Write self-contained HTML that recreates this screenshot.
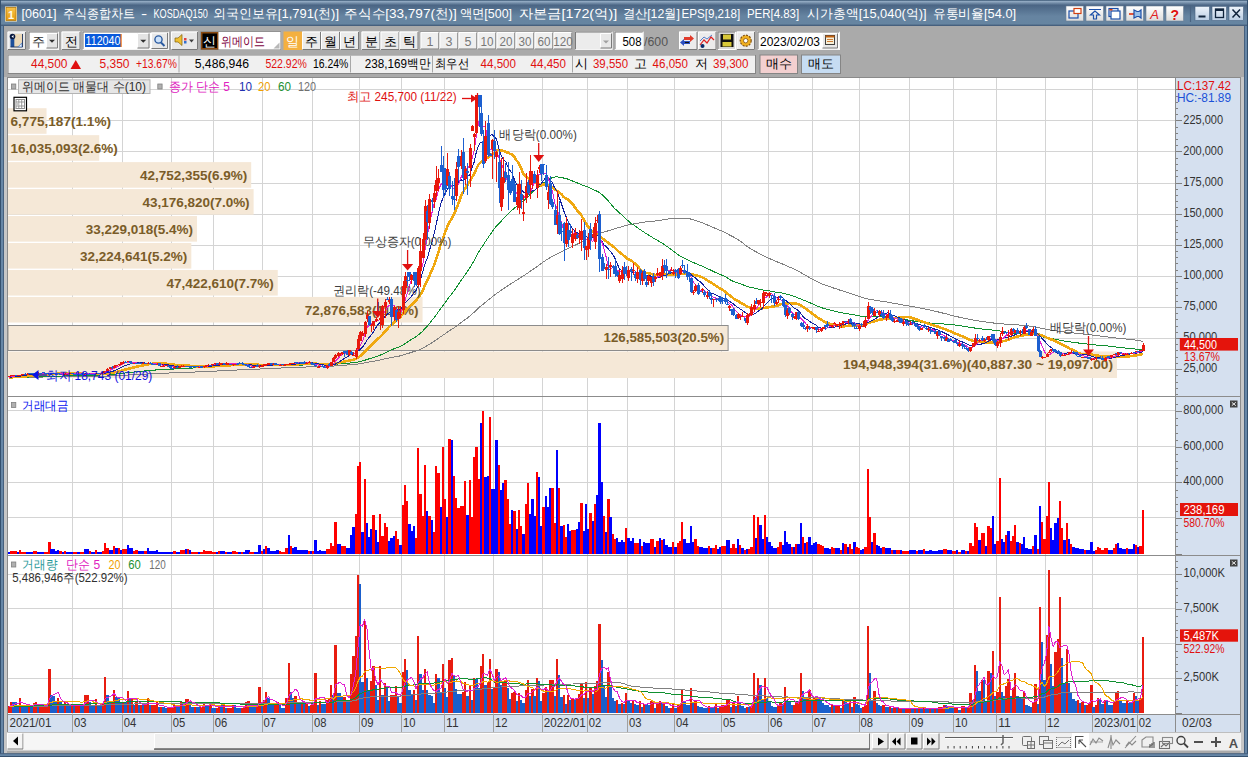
<!DOCTYPE html><html><head><meta charset="utf-8"><style>html,body{margin:0;padding:0;background:#aaaaaa;overflow:hidden}svg{display:block}text{font-family:"Liberation Sans", sans-serif;white-space:pre}</style></head><body>
<svg width="1248" height="757" viewBox="0 0 1248 757">
<defs>
<linearGradient id="tb" x1="0" y1="0" x2="0" y2="1"><stop offset="0" stop-color="#2c4a68"/><stop offset="0.05" stop-color="#94acc4"/><stop offset="0.2" stop-color="#4a6584"/><stop offset="0.62" stop-color="#6684a1"/><stop offset="0.93" stop-color="#6685a1"/><stop offset="0.96" stop-color="#46607e"/><stop offset="1" stop-color="#46607e"/></linearGradient>
<linearGradient id="btnw" x1="0" y1="0" x2="0" y2="1"><stop offset="0" stop-color="#ffffff"/><stop offset="1" stop-color="#dcdcdc"/></linearGradient>
<linearGradient id="btnb" x1="0" y1="0" x2="0" y2="1"><stop offset="0" stop-color="#eef4fb"/><stop offset="1" stop-color="#b9cde3"/></linearGradient>
<linearGradient id="ico" x1="0" y1="0" x2="0" y2="1"><stop offset="0" stop-color="#f7c24a"/><stop offset="1" stop-color="#e39a10"/></linearGradient>
</defs>
<rect x="0" y="0" width="1248" height="757" fill="#aaaaaa"/>
<rect x="0" y="0" width="1248" height="26" fill="url(#tb)"/>
<rect x="0" y="26" width="4" height="731" fill="#46607e"/>
<rect x="1" y="26" width="2" height="731" fill="#6686a6"/>
<rect x="0" y="26" width="1" height="731" fill="#34506e"/>
<rect x="1244" y="26" width="4" height="731" fill="#46607e"/>
<rect x="1245" y="26" width="2" height="731" fill="#6686a6"/>
<rect x="1247" y="26" width="1" height="731" fill="#34506e"/>
<rect x="0" y="753.2" width="1248" height="3.8" fill="#46607e"/>
<rect x="0" y="754.2" width="1248" height="1.8" fill="#6686a6"/>
<rect x="0" y="756" width="1248" height="1" fill="#34506e"/>
<rect x="4" y="77" width="3" height="676" fill="#c6c6c6"/>
<rect x="1240.5" y="77" width="3.5" height="676" fill="#c6c6c6"/>
<rect x="0" y="0" width="1" height="26" fill="#34506e"/>
<rect x="1247" y="0" width="1" height="26" fill="#34506e"/>
<rect x="5" y="6.5" width="12" height="15" fill="#fff3d0"/>
<rect x="6" y="7.5" width="10" height="13" fill="url(#ico)" stroke="#b07810" stroke-width="0.8"/>
<text x="11" y="18.5" font-size="11" fill="#fffbe8" text-anchor="middle" font-weight="bold">1</text>
<text x="21.5" y="18" font-size="13" fill="#ffffff" text-anchor="start" font-weight="normal" textLength="35" lengthAdjust="spacingAndGlyphs">[0601]</text>
<text x="63" y="18" font-size="13" fill="#ffffff" text-anchor="start" font-weight="normal" textLength="72.1" lengthAdjust="spacingAndGlyphs">주식종합차트</text>
<text x="141.1" y="18" font-size="13" fill="#ffffff" text-anchor="start" font-weight="normal" textLength="6.2" lengthAdjust="spacingAndGlyphs">-</text>
<text x="153.5" y="18" font-size="13" fill="#ffffff" text-anchor="start" font-weight="normal" textLength="54.3" lengthAdjust="spacingAndGlyphs">KOSDAQ150</text>
<text x="213.2" y="18" font-size="13" fill="#ffffff" text-anchor="start" font-weight="normal" textLength="125.8" lengthAdjust="spacingAndGlyphs">외국인보유[1,791(천)]</text>
<text x="344.4" y="18" font-size="13" fill="#ffffff" text-anchor="start" font-weight="normal" textLength="112.5" lengthAdjust="spacingAndGlyphs">주식수[33,797(천)]</text>
<text x="459.5" y="18" font-size="13" fill="#ffffff" text-anchor="start" font-weight="normal" textLength="52.5" lengthAdjust="spacingAndGlyphs">액면[500]</text>
<text x="518.5" y="18" font-size="13" fill="#ffffff" text-anchor="start" font-weight="normal" textLength="98.7" lengthAdjust="spacingAndGlyphs">자본금[172(억)]</text>
<text x="622.5" y="18" font-size="13" fill="#ffffff" text-anchor="start" font-weight="normal" textLength="57.5" lengthAdjust="spacingAndGlyphs">결산[12월]</text>
<text x="681.5" y="18" font-size="13" fill="#ffffff" text-anchor="start" font-weight="normal" textLength="58.7" lengthAdjust="spacingAndGlyphs">EPS[9,218]</text>
<text x="746.9" y="18" font-size="13" fill="#ffffff" text-anchor="start" font-weight="normal" textLength="52.3" lengthAdjust="spacingAndGlyphs">PER[4.83]</text>
<text x="807.4" y="18" font-size="13" fill="#ffffff" text-anchor="start" font-weight="normal" textLength="119.1" lengthAdjust="spacingAndGlyphs">시가총액[15,040(억)]</text>
<text x="932.8" y="18" font-size="13" fill="#ffffff" text-anchor="start" font-weight="normal" textLength="83.3" lengthAdjust="spacingAndGlyphs">유통비율[54.0]</text>
<rect x="1066" y="6" width="17.5" height="15" fill="url(#btnw)" stroke="#6c7f95" stroke-width="0.6"/>
<rect x="1086" y="6" width="17.5" height="15" fill="url(#btnw)" stroke="#6c7f95" stroke-width="0.6"/>
<rect x="1106" y="6" width="17.5" height="15" fill="url(#btnw)" stroke="#6c7f95" stroke-width="0.6"/>
<rect x="1126" y="6" width="17.5" height="15" fill="url(#btnw)" stroke="#6c7f95" stroke-width="0.6"/>
<rect x="1146" y="6" width="17.5" height="15" fill="url(#btnw)" stroke="#6c7f95" stroke-width="0.6"/>
<rect x="1166" y="6" width="17.5" height="15" fill="url(#btnw)" stroke="#6c7f95" stroke-width="0.6"/>
<g stroke-width="1.2" fill="none">
<rect x="1069" y="11" width="9" height="7" stroke="#1b4fa8"/><rect x="1074" y="8.5" width="7" height="5" fill="#fff" stroke="#d24010"/>
<path d="M1089 9.5h12M1095 11l-4.5 4h3v4h3v-4h3z" stroke="#1b4fa8"/>
<rect x="1109" y="8.5" width="9" height="8" stroke="#1b4fa8" fill="#e8f0fa"/><rect x="1111" y="11" width="9" height="8" stroke="#1b4fa8" fill="#fff"/><rect x="1109.5" y="9" width="3" height="1.5" fill="#e04010" stroke="none"/>
<path d="M1129 14h5" stroke="#e03010" stroke-width="1.6"/><path d="M1134 10v8l3-1.5h2l2 1.5v-8l-2 1.5h-2z" stroke="#1b4fa8" fill="#9ac0e8"/>
</g>
<text x="1154.5" y="19" font-size="13" fill="#e02020" text-anchor="middle" font-weight="normal" font-style="italic" font-family="Liberation Serif, serif">A</text>
<text x="1174.7" y="19.5" font-size="14" fill="#e01010" text-anchor="middle" font-weight="bold">?</text>
<line x1="1190.5" y1="5" x2="1190.5" y2="22" stroke="#4a6482" stroke-width="1.2"/>
<rect x="1195" y="6.3" width="14.5" height="14.3" fill="url(#btnb)" stroke="#47617f" stroke-width="0.6"/>
<rect x="1212" y="6.3" width="14.5" height="14.3" fill="url(#btnb)" stroke="#47617f" stroke-width="0.6"/>
<rect x="1229" y="6.3" width="14.5" height="14.3" fill="url(#btnb)" stroke="#47617f" stroke-width="0.6"/>
<rect x="1198.5" y="15.5" width="7" height="2" fill="#10243c"/>
<rect x="1215.5" y="9" width="8" height="8.5" fill="none" stroke="#10243c" stroke-width="1.3"/><rect x="1215.5" y="9" width="8" height="2" fill="#10243c"/>
<path d="M1232.5 9.5l7.5 8M1240 9.5l-7.5 8" stroke="#10243c" stroke-width="1.5"/>
<rect x="7.5" y="31.5" width="18.5" height="18.5" fill="#e8e8e8"/>
<path d="M8 49.5V32H25.5" fill="none" stroke="#ffffff" stroke-width="1"/>
<path d="M25.5 32V49.5H8" fill="none" stroke="#7a7a7a" stroke-width="1"/>
<rect x="14" y="34" width="8.5" height="13" fill="#ecd9b8"/><rect x="10.5" y="35" width="3.8" height="12" fill="#1d4f9a"/><path d="M22.5 34v13h-12" fill="none" stroke="#1a2f5a" stroke-width="0.9"/><circle cx="12.5" cy="36.5" r="2.8" fill="#0a1a40"/><path d="M13.5 35v3l-2-1.5z" fill="#fff"/><path d="M22 42.5v4.5h-4.5z" fill="#5a8ad0"/><path d="M21.5 44v2.5h-2.5z" fill="#fff"/>
<rect x="28.5" y="31.5" width="30.5" height="18.5" fill="#ffffff"/>
<path d="M29 49.5V32H58.5" fill="none" stroke="#7a7a7a" stroke-width="1"/>
<path d="M58.5 32V49.5H29" fill="none" stroke="#f4f4f4" stroke-width="1"/>
<text x="32" y="45.5" font-size="13" fill="#333" text-anchor="start" font-weight="normal">주</text>
<rect x="46" y="33" width="12" height="15.5" fill="#e4e4e4"/>
<path d="M46.5 48V33.5H57.5" fill="none" stroke="#ffffff" stroke-width="1"/>
<path d="M57.5 33.5V48H46.5" fill="none" stroke="#7a7a7a" stroke-width="1"/>
<path d="M49 39.75h6l-3 3z" fill="#303030"/>
<rect x="61.5" y="31.5" width="19" height="18.5" fill="#e8e8e8"/>
<path d="M62 49.5V32H80" fill="none" stroke="#ffffff" stroke-width="1"/>
<path d="M80 32V49.5H62" fill="none" stroke="#7a7a7a" stroke-width="1"/>
<text x="71" y="45.5" font-size="13" fill="#000" text-anchor="middle" font-weight="normal">전</text>
<rect x="82.5" y="31.5" width="86.5" height="18.5" fill="#ffffff"/>
<path d="M83 49.5V32H168.5" fill="none" stroke="#7a7a7a" stroke-width="1"/>
<path d="M168.5 32V49.5H83" fill="none" stroke="#f4f4f4" stroke-width="1"/>
<rect x="85" y="34" width="36" height="13" fill="#0a5adc"/>
<text x="85.5" y="45" font-size="12.5" fill="#ffffff" text-anchor="start" font-weight="normal" textLength="35" lengthAdjust="spacingAndGlyphs">112040</text>
<rect x="120.5" y="34" width="1.2" height="13" fill="#f07010"/>
<rect x="137" y="33" width="12.5" height="15.5" fill="#e4e4e4"/>
<path d="M137.5 48V33.5H149" fill="none" stroke="#ffffff" stroke-width="1"/>
<path d="M149 33.5V48H137.5" fill="none" stroke="#7a7a7a" stroke-width="1"/>
<path d="M140.25 39.75h6l-3 3z" fill="#303030"/>
<rect x="151" y="32.5" width="17" height="16.5" fill="#e8e8e8"/>
<path d="M151.5 48.5V33H167.5" fill="none" stroke="#ffffff" stroke-width="1"/>
<path d="M167.5 33V48.5H151.5" fill="none" stroke="#7a7a7a" stroke-width="1"/>
<circle cx="158.5" cy="39.5" r="3.6" fill="#cde2fa" stroke="#2a5aa0" stroke-width="1.4"/><path d="M161 42.5l3.5 3.5" stroke="#2a5aa0" stroke-width="2"/>
<rect x="171" y="31.5" width="27" height="18.5" fill="#e8e8e8"/>
<path d="M171.5 49.5V32H197.5" fill="none" stroke="#ffffff" stroke-width="1"/>
<path d="M197.5 32V49.5H171.5" fill="none" stroke="#7a7a7a" stroke-width="1"/>
<path d="M175 38h3l4-3.5v11l-4-3.5h-3z" fill="#f0c030" stroke="#806010" stroke-width="0.7"/><rect x="184" y="38" width="2.5" height="2.5" fill="#e04040"/><rect x="184" y="41" width="2.5" height="2.5" fill="#3070d0"/><path d="M189 39.5h5l-2.5 3z" fill="#404040"/>
<rect x="200.5" y="31.5" width="80.5" height="18.5" fill="#7a7a7a"/>
<rect x="201" y="32" width="17.5" height="17.5" fill="#8a4a10"/>
<rect x="202.5" y="33.5" width="14.5" height="14.5" fill="#000000"/>
<text x="209.7" y="45.5" font-size="13" fill="#ffffff" text-anchor="middle" font-weight="normal">신</text>
<rect x="218.5" y="32" width="62" height="17.5" fill="#ffffff"/>
<text x="221" y="45.5" font-size="13" fill="#800040" text-anchor="start" font-weight="normal" textLength="44" lengthAdjust="spacingAndGlyphs">위메이드</text>
<path d="M279.5 48.5h-6l6-6z" fill="#b8b8b8"/>
<rect x="283.5" y="31.5" width="18.5" height="18.5" fill="#f4b040"/>
<text x="292.7" y="45.5" font-size="13" fill="#ffffff" text-anchor="middle" font-weight="normal">일</text>
<rect x="302" y="31.5" width="19" height="18.5" fill="#ebebeb"/>
<path d="M302.5 49.5V32H320.5" fill="none" stroke="#ffffff" stroke-width="1"/>
<path d="M320.5 32V49.5H302.5" fill="none" stroke="#7a7a7a" stroke-width="1"/>
<text x="311.5" y="45.5" font-size="13" fill="#000" text-anchor="middle" font-weight="normal">주</text>
<rect x="321" y="31.5" width="19" height="18.5" fill="#ebebeb"/>
<path d="M321.5 49.5V32H339.5" fill="none" stroke="#ffffff" stroke-width="1"/>
<path d="M339.5 32V49.5H321.5" fill="none" stroke="#7a7a7a" stroke-width="1"/>
<text x="330.5" y="45.5" font-size="13" fill="#000" text-anchor="middle" font-weight="normal">월</text>
<rect x="340" y="31.5" width="19" height="18.5" fill="#ebebeb"/>
<path d="M340.5 49.5V32H358.5" fill="none" stroke="#ffffff" stroke-width="1"/>
<path d="M358.5 32V49.5H340.5" fill="none" stroke="#7a7a7a" stroke-width="1"/>
<text x="349.5" y="45.5" font-size="13" fill="#000" text-anchor="middle" font-weight="normal">년</text>
<rect x="361.5" y="31.5" width="19" height="18.5" fill="#ebebeb"/>
<path d="M362 49.5V32H380" fill="none" stroke="#ffffff" stroke-width="1"/>
<path d="M380 32V49.5H362" fill="none" stroke="#7a7a7a" stroke-width="1"/>
<text x="371" y="45.5" font-size="13" fill="#000" text-anchor="middle" font-weight="normal">분</text>
<rect x="380.5" y="31.5" width="19" height="18.5" fill="#ebebeb"/>
<path d="M381 49.5V32H399" fill="none" stroke="#ffffff" stroke-width="1"/>
<path d="M399 32V49.5H381" fill="none" stroke="#7a7a7a" stroke-width="1"/>
<text x="390" y="45.5" font-size="13" fill="#000" text-anchor="middle" font-weight="normal">초</text>
<rect x="399.5" y="31.5" width="19" height="18.5" fill="#ebebeb"/>
<path d="M400 49.5V32H418" fill="none" stroke="#ffffff" stroke-width="1"/>
<path d="M418 32V49.5H400" fill="none" stroke="#7a7a7a" stroke-width="1"/>
<text x="409" y="45.5" font-size="13" fill="#000" text-anchor="middle" font-weight="normal">틱</text>
<rect x="420" y="31.5" width="152.5" height="18.5" fill="#8c8c8c"/>
<rect x="420.5" y="32" width="18.8" height="17.5" fill="#efefef"/>
<path d="M421 49V32.5H438.8" fill="none" stroke="#ffffff" stroke-width="1"/>
<path d="M438.8 32.5V49H421" fill="none" stroke="#7a7a7a" stroke-width="1"/>
<text x="429.9" y="45.5" font-size="12.5" fill="#777777" text-anchor="middle" font-weight="normal">1</text>
<rect x="439.5" y="32" width="18.8" height="17.5" fill="#efefef"/>
<path d="M440 49V32.5H457.8" fill="none" stroke="#ffffff" stroke-width="1"/>
<path d="M457.8 32.5V49H440" fill="none" stroke="#7a7a7a" stroke-width="1"/>
<text x="448.9" y="45.5" font-size="12.5" fill="#777777" text-anchor="middle" font-weight="normal">3</text>
<rect x="458.5" y="32" width="18.8" height="17.5" fill="#efefef"/>
<path d="M459 49V32.5H476.8" fill="none" stroke="#ffffff" stroke-width="1"/>
<path d="M476.8 32.5V49H459" fill="none" stroke="#7a7a7a" stroke-width="1"/>
<text x="467.9" y="45.5" font-size="12.5" fill="#777777" text-anchor="middle" font-weight="normal">5</text>
<rect x="477.5" y="32" width="18.8" height="17.5" fill="#efefef"/>
<path d="M478 49V32.5H495.8" fill="none" stroke="#ffffff" stroke-width="1"/>
<path d="M495.8 32.5V49H478" fill="none" stroke="#7a7a7a" stroke-width="1"/>
<text x="486.9" y="45.5" font-size="12.5" fill="#777777" text-anchor="middle" font-weight="normal" textLength="13" lengthAdjust="spacingAndGlyphs">10</text>
<rect x="496.5" y="32" width="18.8" height="17.5" fill="#efefef"/>
<path d="M497 49V32.5H514.8" fill="none" stroke="#ffffff" stroke-width="1"/>
<path d="M514.8 32.5V49H497" fill="none" stroke="#7a7a7a" stroke-width="1"/>
<text x="505.9" y="45.5" font-size="12.5" fill="#777777" text-anchor="middle" font-weight="normal" textLength="13" lengthAdjust="spacingAndGlyphs">20</text>
<rect x="515.5" y="32" width="18.8" height="17.5" fill="#efefef"/>
<path d="M516 49V32.5H533.8" fill="none" stroke="#ffffff" stroke-width="1"/>
<path d="M533.8 32.5V49H516" fill="none" stroke="#7a7a7a" stroke-width="1"/>
<text x="524.9" y="45.5" font-size="12.5" fill="#777777" text-anchor="middle" font-weight="normal" textLength="13" lengthAdjust="spacingAndGlyphs">30</text>
<rect x="534.5" y="32" width="18.8" height="17.5" fill="#efefef"/>
<path d="M535 49V32.5H552.8" fill="none" stroke="#ffffff" stroke-width="1"/>
<path d="M552.8 32.5V49H535" fill="none" stroke="#7a7a7a" stroke-width="1"/>
<text x="543.9" y="45.5" font-size="12.5" fill="#777777" text-anchor="middle" font-weight="normal" textLength="13" lengthAdjust="spacingAndGlyphs">60</text>
<rect x="553.5" y="32" width="18.8" height="17.5" fill="#efefef"/>
<path d="M554 49V32.5H571.8" fill="none" stroke="#ffffff" stroke-width="1"/>
<path d="M571.8 32.5V49H554" fill="none" stroke="#7a7a7a" stroke-width="1"/>
<text x="562.9" y="45.5" font-size="12.5" fill="#777777" text-anchor="middle" font-weight="normal" textLength="19.5" lengthAdjust="spacingAndGlyphs">120</text>
<rect x="575" y="31.5" width="37.5" height="18.5" fill="#ececec"/>
<path d="M575.5 49.5V32H612" fill="none" stroke="#7a7a7a" stroke-width="1"/>
<path d="M612 32V49.5H575.5" fill="none" stroke="#f4f4f4" stroke-width="1"/>
<rect x="600" y="33" width="12" height="15.5" fill="#e8e8e8"/>
<path d="M600.5 48V33.5H611.5" fill="none" stroke="#ffffff" stroke-width="1"/>
<path d="M611.5 33.5V48H600.5" fill="none" stroke="#7a7a7a" stroke-width="1"/>
<path d="M603 40.5h6l-3 3z" fill="#a0a0a0"/>
<rect x="614.5" y="31.5" width="29" height="18.5" fill="#ffffff"/>
<path d="M615 49.5V32H643" fill="none" stroke="#7a7a7a" stroke-width="1"/>
<path d="M643 32V49.5H615" fill="none" stroke="#f4f4f4" stroke-width="1"/>
<text x="641.5" y="45.5" font-size="12.5" fill="#000" text-anchor="end" font-weight="normal" textLength="19" lengthAdjust="spacingAndGlyphs">508</text>
<text x="644" y="45.5" font-size="12.5" fill="#555" text-anchor="start" font-weight="normal" textLength="24" lengthAdjust="spacingAndGlyphs">/600</text>
<rect x="679" y="31.5" width="18.5" height="18.5" fill="#ececec"/>
<path d="M679.5 49.5V32H697" fill="none" stroke="#ffffff" stroke-width="1"/>
<path d="M697 32V49.5H679.5" fill="none" stroke="#7a7a7a" stroke-width="1"/>
<rect x="698" y="31.5" width="18.5" height="18.5" fill="#ececec"/>
<path d="M698.5 49.5V32H716" fill="none" stroke="#ffffff" stroke-width="1"/>
<path d="M716 32V49.5H698.5" fill="none" stroke="#7a7a7a" stroke-width="1"/>
<rect x="717.5" y="31.5" width="18.5" height="18.5" fill="#d8d8d8"/>
<path d="M718 49.5V32H735.5" fill="none" stroke="#808080" stroke-width="1"/>
<path d="M735.5 32V49.5H718" fill="none" stroke="#ffffff" stroke-width="1"/>
<rect x="736.5" y="31.5" width="18.5" height="18.5" fill="#ececec"/>
<path d="M737 49.5V32H754.5" fill="none" stroke="#ffffff" stroke-width="1"/>
<path d="M754.5 32V49.5H737" fill="none" stroke="#7a7a7a" stroke-width="1"/>
<path d="M684 37h6v-2l4 3.5-4 3.5v-2h-6z" fill="#e03a2a"/><path d="M690 41h-6v-2l-4 3.5 4 3.5v-2h6z" fill="#2a4fc0"/><path d="M685 42.5h4" stroke="#101010"/>
<path d="M700 45l4-5 3 3 4-6 3 3" fill="none" stroke="#e02020" stroke-width="1.2"/><path d="M700 41l4-4 3 2 5-4" fill="none" stroke="#3060c0" stroke-width="0.8"/><circle cx="702.5" cy="46" r="2" fill="#0a2a6a"/>
<rect x="720.5" y="34" width="13" height="13" fill="#101010"/><rect x="723" y="34.5" width="8" height="5" fill="#d8c838"/><rect x="722.5" y="42" width="9" height="4.5" fill="#d8c838"/>
<circle cx="745.7" cy="40.7" r="5.5" fill="#f0b020" stroke="#805010" stroke-width="1.2" stroke-dasharray="2 1.2"/><circle cx="745.7" cy="40.7" r="2.2" fill="#fff" stroke="#805010" stroke-width="0.8"/>
<rect x="757.5" y="31.5" width="82.5" height="18.5" fill="#ffffff"/>
<path d="M758 49.5V32H839.5" fill="none" stroke="#7a7a7a" stroke-width="1"/>
<path d="M839.5 32V49.5H758" fill="none" stroke="#f4f4f4" stroke-width="1"/>
<text x="760" y="45.5" font-size="12.5" fill="#000" text-anchor="start" font-weight="normal" textLength="60" lengthAdjust="spacingAndGlyphs">2023/02/03</text>
<rect x="822" y="33" width="16" height="15.5" fill="#e8e8e8"/>
<path d="M822.5 48V33.5H837.5" fill="none" stroke="#ffffff" stroke-width="1"/>
<path d="M837.5 33.5V48H822.5" fill="none" stroke="#7a7a7a" stroke-width="1"/>
<rect x="825.5" y="35.5" width="9" height="9" fill="#f8f0d8" stroke="#404040" stroke-width="1"/><rect x="825.5" y="35.5" width="9" height="2" fill="#c06010"/><path d="M827 39.5h6M827 41.5h6" stroke="#c06010" stroke-width="0.8"/>
<rect x="7.5" y="54.5" width="748.5" height="19" fill="#f0f0f0"/>
<rect x="8" y="55" width="747.5" height="18.5" fill="none" stroke="#858585"/>
<line x1="179" y1="55.5" x2="179" y2="72.5" stroke="#a8a8a8" stroke-width="1"/>
<line x1="350.5" y1="55.5" x2="350.5" y2="72.5" stroke="#a8a8a8" stroke-width="1"/>
<line x1="432.5" y1="55.5" x2="432.5" y2="72.5" stroke="#a8a8a8" stroke-width="1"/>
<line x1="572.5" y1="55.5" x2="572.5" y2="72.5" stroke="#a8a8a8" stroke-width="1"/>
<text x="31" y="67.8" font-size="13" fill="#e01010" text-anchor="start" font-weight="normal" textLength="36.5" lengthAdjust="spacingAndGlyphs">44,500</text>
<path d="M70.5 69h10.5l-5.25-9z" fill="#e01010"/>
<text x="99.5" y="67.8" font-size="13" fill="#e01010" text-anchor="start" font-weight="normal" textLength="30" lengthAdjust="spacingAndGlyphs">5,350</text>
<text x="136" y="67.8" font-size="13" fill="#e01010" text-anchor="start" font-weight="normal" textLength="41" lengthAdjust="spacingAndGlyphs">+13.67%</text>
<text x="194.7" y="67.8" font-size="13" fill="#000" text-anchor="start" font-weight="normal" textLength="54.3" lengthAdjust="spacingAndGlyphs">5,486,946</text>
<text x="265.4" y="67.8" font-size="13" fill="#e01010" text-anchor="start" font-weight="normal" textLength="41.5" lengthAdjust="spacingAndGlyphs">522.92%</text>
<text x="313" y="67.8" font-size="13" fill="#000" text-anchor="start" font-weight="normal" textLength="35.4" lengthAdjust="spacingAndGlyphs">16.24%</text>
<text x="364.7" y="67.8" font-size="13" fill="#000" text-anchor="start" font-weight="normal" textLength="65.6" lengthAdjust="spacingAndGlyphs">238,169백만</text>
<text x="435" y="67.8" font-size="13" fill="#000" text-anchor="start" font-weight="normal" textLength="34" lengthAdjust="spacingAndGlyphs">최우선</text>
<text x="480.5" y="67.8" font-size="13" fill="#e01010" text-anchor="start" font-weight="normal" textLength="35.5" lengthAdjust="spacingAndGlyphs">44,500</text>
<text x="530.5" y="67.8" font-size="13" fill="#e01010" text-anchor="start" font-weight="normal" textLength="35.5" lengthAdjust="spacingAndGlyphs">44,450</text>
<text x="574.5" y="67.8" font-size="13" fill="#000" text-anchor="start" font-weight="normal">시</text>
<text x="593" y="67.8" font-size="13" fill="#e01010" text-anchor="start" font-weight="normal" textLength="35" lengthAdjust="spacingAndGlyphs">39,550</text>
<text x="634" y="67.8" font-size="13" fill="#000" text-anchor="start" font-weight="normal">고</text>
<text x="652.5" y="67.8" font-size="13" fill="#e01010" text-anchor="start" font-weight="normal" textLength="35.5" lengthAdjust="spacingAndGlyphs">46,050</text>
<text x="695" y="67.8" font-size="13" fill="#000" text-anchor="start" font-weight="normal">저</text>
<text x="713" y="67.8" font-size="13" fill="#e01010" text-anchor="start" font-weight="normal" textLength="35.5" lengthAdjust="spacingAndGlyphs">39,300</text>
<rect x="760" y="55" width="37.5" height="18.5" fill="#f3d0d0" stroke="#858585"/>
<text x="778.7" y="67.8" font-size="13" fill="#000" text-anchor="middle" font-weight="normal">매수</text>
<rect x="801.5" y="55" width="39" height="18.5" fill="#c6dcf2" stroke="#858585"/>
<text x="820.7" y="67.8" font-size="13" fill="#000" text-anchor="middle" font-weight="normal">매도</text>
<rect x="7" y="77" width="1234" height="655.5" fill="#ffffff"/>
<line x1="7" y1="77.5" x2="1240.5" y2="77.5" stroke="#8a8a8a" stroke-width="1"/>
<line x1="7.5" y1="77" x2="7.5" y2="732.5" stroke="#8a8a8a" stroke-width="1"/>
<rect x="1175.5" y="78" width="65" height="636" fill="#d5e0ef"/>
<rect x="8" y="714" width="1232.5" height="18" fill="#d5e0ef"/>
<g shape-rendering="crispEdges">
<line x1="72.5" y1="78" x2="72.5" y2="714" stroke="#d4d4d4" stroke-width="1"/>
<line x1="122.5" y1="78" x2="122.5" y2="714" stroke="#d4d4d4" stroke-width="1"/>
<line x1="171.5" y1="78" x2="171.5" y2="714" stroke="#d4d4d4" stroke-width="1"/>
<line x1="213.5" y1="78" x2="213.5" y2="714" stroke="#d4d4d4" stroke-width="1"/>
<line x1="262.5" y1="78" x2="262.5" y2="714" stroke="#d4d4d4" stroke-width="1"/>
<line x1="312.5" y1="78" x2="312.5" y2="714" stroke="#d4d4d4" stroke-width="1"/>
<line x1="359.5" y1="78" x2="359.5" y2="714" stroke="#d4d4d4" stroke-width="1"/>
<line x1="401.5" y1="78" x2="401.5" y2="714" stroke="#d4d4d4" stroke-width="1"/>
<line x1="444.5" y1="78" x2="444.5" y2="714" stroke="#d4d4d4" stroke-width="1"/>
<line x1="493.5" y1="78" x2="493.5" y2="714" stroke="#d4d4d4" stroke-width="1"/>
<line x1="542.5" y1="78" x2="542.5" y2="714" stroke="#d4d4d4" stroke-width="1"/>
<line x1="587.5" y1="78" x2="587.5" y2="714" stroke="#d4d4d4" stroke-width="1"/>
<line x1="627.5" y1="78" x2="627.5" y2="714" stroke="#d4d4d4" stroke-width="1"/>
<line x1="674.5" y1="78" x2="674.5" y2="714" stroke="#d4d4d4" stroke-width="1"/>
<line x1="721.5" y1="78" x2="721.5" y2="714" stroke="#d4d4d4" stroke-width="1"/>
<line x1="768.5" y1="78" x2="768.5" y2="714" stroke="#d4d4d4" stroke-width="1"/>
<line x1="812.5" y1="78" x2="812.5" y2="714" stroke="#d4d4d4" stroke-width="1"/>
<line x1="859.5" y1="78" x2="859.5" y2="714" stroke="#d4d4d4" stroke-width="1"/>
<line x1="909.5" y1="78" x2="909.5" y2="714" stroke="#d4d4d4" stroke-width="1"/>
<line x1="953.5" y1="78" x2="953.5" y2="714" stroke="#d4d4d4" stroke-width="1"/>
<line x1="996.5" y1="78" x2="996.5" y2="714" stroke="#d4d4d4" stroke-width="1"/>
<line x1="1045.5" y1="78" x2="1045.5" y2="714" stroke="#d4d4d4" stroke-width="1"/>
<line x1="1092.5" y1="78" x2="1092.5" y2="714" stroke="#d4d4d4" stroke-width="1"/>
<line x1="1137.5" y1="78" x2="1137.5" y2="714" stroke="#d4d4d4" stroke-width="1"/>
<line x1="8" y1="89.5" x2="1175.5" y2="89.5" stroke="#d4d4d4" stroke-width="1"/>
<line x1="8" y1="120.5" x2="1175.5" y2="120.5" stroke="#d4d4d4" stroke-width="1"/>
<line x1="8" y1="151.5" x2="1175.5" y2="151.5" stroke="#d4d4d4" stroke-width="1"/>
<line x1="8" y1="183.5" x2="1175.5" y2="183.5" stroke="#d4d4d4" stroke-width="1"/>
<line x1="8" y1="214.5" x2="1175.5" y2="214.5" stroke="#d4d4d4" stroke-width="1"/>
<line x1="8" y1="245.5" x2="1175.5" y2="245.5" stroke="#d4d4d4" stroke-width="1"/>
<line x1="8" y1="276.5" x2="1175.5" y2="276.5" stroke="#d4d4d4" stroke-width="1"/>
<line x1="8" y1="307.5" x2="1175.5" y2="307.5" stroke="#d4d4d4" stroke-width="1"/>
<line x1="8" y1="338.5" x2="1175.5" y2="338.5" stroke="#d4d4d4" stroke-width="1"/>
<line x1="8" y1="369.5" x2="1175.5" y2="369.5" stroke="#d4d4d4" stroke-width="1"/>
<line x1="8" y1="517.5" x2="1175.5" y2="517.5" stroke="#d4d4d4" stroke-width="1"/>
<line x1="8" y1="482.5" x2="1175.5" y2="482.5" stroke="#d4d4d4" stroke-width="1"/>
<line x1="8" y1="446.5" x2="1175.5" y2="446.5" stroke="#d4d4d4" stroke-width="1"/>
<line x1="8" y1="410.5" x2="1175.5" y2="410.5" stroke="#d4d4d4" stroke-width="1"/>
<line x1="8" y1="678.5" x2="1175.5" y2="678.5" stroke="#d4d4d4" stroke-width="1"/>
<line x1="8" y1="643.5" x2="1175.5" y2="643.5" stroke="#d4d4d4" stroke-width="1"/>
<line x1="8" y1="608.5" x2="1175.5" y2="608.5" stroke="#d4d4d4" stroke-width="1"/>
<line x1="8" y1="574.5" x2="1175.5" y2="574.5" stroke="#d4d4d4" stroke-width="1"/>
</g>
<rect x="8" y="108.2" width="38.54" height="25.6" fill="#f5e8d7"/>
<rect x="8" y="135.16" width="91.22" height="25.6" fill="#f5e8d7"/>
<rect x="8" y="162.12" width="243.2" height="25.6" fill="#f5e8d7"/>
<rect x="8" y="189.08" width="245.62" height="25.6" fill="#f5e8d7"/>
<rect x="8" y="216.04" width="189.03" height="25.6" fill="#f5e8d7"/>
<rect x="8" y="243" width="183.32" height="25.6" fill="#f5e8d7"/>
<rect x="8" y="269.96" width="269.77" height="25.6" fill="#f5e8d7"/>
<rect x="8" y="296.92" width="414.57" height="25.6" fill="#f5e8d7"/>
<rect x="8" y="325.5" width="720.11" height="25" fill="#f5e8d7" stroke="#8c8c8c" stroke-width="1"/>
<rect x="8" y="351.5" width="1109" height="26.5" fill="#f5e8d7"/>
<text x="10.5" y="126" font-size="13.5" fill="#7a5c28" text-anchor="start" font-weight="bold" textLength="100.5" lengthAdjust="spacingAndGlyphs">6,775,187(1.1%)</text>
<text x="10.5" y="152.96" font-size="13.5" fill="#7a5c28" text-anchor="start" font-weight="bold" textLength="107.2" lengthAdjust="spacingAndGlyphs">16,035,093(2.6%)</text>
<text x="247.2" y="179.92" font-size="13.5" fill="#7a5c28" text-anchor="end" font-weight="bold" textLength="107.2" lengthAdjust="spacingAndGlyphs">42,752,355(6.9%)</text>
<text x="249.62" y="206.88" font-size="13.5" fill="#7a5c28" text-anchor="end" font-weight="bold" textLength="107.2" lengthAdjust="spacingAndGlyphs">43,176,820(7.0%)</text>
<text x="193.03" y="233.84" font-size="13.5" fill="#7a5c28" text-anchor="end" font-weight="bold" textLength="107.2" lengthAdjust="spacingAndGlyphs">33,229,018(5.4%)</text>
<text x="187.32" y="260.8" font-size="13.5" fill="#7a5c28" text-anchor="end" font-weight="bold" textLength="107.2" lengthAdjust="spacingAndGlyphs">32,224,641(5.2%)</text>
<text x="273.77" y="287.76" font-size="13.5" fill="#7a5c28" text-anchor="end" font-weight="bold" textLength="107.2" lengthAdjust="spacingAndGlyphs">47,422,610(7.7%)</text>
<text x="418.57" y="314.72" font-size="13.5" fill="#7a5c28" text-anchor="end" font-weight="bold" textLength="113.9" lengthAdjust="spacingAndGlyphs">72,876,583(11.8%)</text>
<text x="724.11" y="341.68" font-size="13.5" fill="#7a5c28" text-anchor="end" font-weight="bold" textLength="120.6" lengthAdjust="spacingAndGlyphs">126,585,503(20.5%)</text>
<text x="1113" y="368.64" font-size="13.5" fill="#7a5c28" text-anchor="end" font-weight="bold" textLength="270" lengthAdjust="spacingAndGlyphs">194,948,394(31.6%)(40,887.30 ~ 19,097.00)</text>
<polyline points="9.12,377.44 11.35,377.42 13.59,377.41 15.83,377.39 18.06,377.37 20.3,377.34 22.53,377.31 24.77,377.28 27.01,377.25 29.24,377.22 31.48,377.19 33.71,377.15 35.95,377.12 38.19,377.08 40.42,377.05 42.66,377.01 44.89,376.98 47.13,376.95 49.37,376.92 51.6,376.89 53.84,376.85 56.07,376.82 58.31,376.79 60.55,376.77 62.78,376.74 65.02,376.71 67.25,376.68 69.49,376.65 71.73,376.62 73.96,376.58 76.2,376.56 78.43,376.53 80.67,376.5 82.91,376.47 85.14,376.44 87.38,376.41 89.61,376.38 91.85,376.36 94.09,376.33 96.32,376.29 98.56,376.26 100.79,376.23 103.03,376.18 105.27,376.12 107.5,376.05 109.74,375.97 111.97,375.89 114.21,375.8 116.45,375.69 118.68,375.58 120.92,375.45 123.15,375.32 125.39,375.19 127.63,375.05 129.86,374.93 132.1,374.82 134.33,374.7 136.57,374.58 138.81,374.46 141.04,374.35 143.28,374.23 145.51,374.12 147.75,374 149.99,373.88 152.22,373.77 154.46,373.66 156.69,373.55 158.93,373.45 161.17,373.36 163.4,373.26 165.64,373.16 167.87,373.06 170.11,372.98 172.35,372.91 174.58,372.82 176.82,372.74 179.05,372.65 181.29,372.55 183.53,372.45 185.76,372.36 188,372.27 190.23,372.18 192.47,372.09 194.71,372.01 196.94,371.92 199.18,371.83 201.41,371.75 203.65,371.65 205.89,371.55 208.12,371.44 210.36,371.33 212.59,371.22 214.83,371.11 217.07,371 219.3,370.89 221.54,370.77 223.77,370.66 226.01,370.55 228.25,370.43 230.48,370.32 232.72,370.21 234.95,370.1 237.19,369.98 239.43,369.87 241.66,369.76 243.9,369.65 246.13,369.55 248.37,369.46 250.61,369.38 252.84,369.29 255.08,369.2 257.31,369.1 259.55,369.01 261.79,368.91 264.02,368.8 266.26,368.69 268.49,368.57 270.73,368.46 272.97,368.35 275.2,368.24 277.44,368.15 279.67,368.06 281.91,367.97 284.15,367.88 286.38,367.79 288.62,367.7 290.85,367.61 293.09,367.51 295.33,367.43 297.56,367.33 299.8,367.24 302.03,367.16 304.27,367.06 306.51,366.98 308.74,366.89 310.98,366.81 313.21,366.74 315.45,366.68 317.69,366.62 319.92,366.56 322.16,366.5 324.39,366.45 326.63,366.38 328.87,366.31 331.1,366.21 333.34,366.08 335.57,365.91 337.81,365.75 340.05,365.57 342.28,365.39 344.52,365.21 346.75,365.05 348.99,364.86 351.23,364.69 353.46,364.53 355.7,364.33 357.93,364.04 360.17,363.68 362.41,363.34 364.64,362.91 366.88,362.42 369.11,362.02 371.35,361.63 373.59,361.21 375.82,360.79 378.06,360.35 380.29,359.93 382.53,359.43 384.77,358.9 387,358.37 389.24,357.85 391.47,357.48 393.71,357.02 395.95,356.68 398.18,356.25 400.42,355.84 402.65,355.2 404.89,354.46 407.13,353.77 409.36,353.04 411.6,352.3 413.83,351.62 416.07,350.97 418.31,350.17 420.54,349.22 422.78,348.18 425.01,346.86 427.25,345.66 429.49,344.27 431.72,342.91 433.96,341.47 436.19,339.92 438.43,338.34 440.67,336.7 442.9,335.22 445.14,333.74 447.37,332.09 449.61,330.62 451.85,329.22 454.08,327.83 456.32,326.18 458.55,324.51 460.79,322.76 463.03,321.18 465.26,319.53 467.5,317.92 469.73,316.09 471.97,314.09 474.21,312.17 476.44,309.92 478.68,307.76 480.91,305.84 483.15,304.18 485.39,302.27 487.62,300.53 489.86,298.81 492.09,296.94 494.33,295.17 496.57,293.41 498.8,291.94 501.04,290.39 503.27,288.83 505.51,287.28 507.75,285.84 509.98,284.41 512.22,282.93 514.45,281.56 516.69,280.14 518.93,278.62 521.16,277.23 523.4,275.95 525.63,274.44 527.87,273 530.11,271.38 532.34,269.82 534.58,268.31 536.81,266.74 539.05,265.09 541.29,263.51 543.52,261.85 545.76,260.37 547.99,258.93 550.23,257.59 552.47,256.28 554.7,255.12 556.94,253.88 559.17,252.8 561.41,251.71 563.65,250.72 565.88,249.55 568.12,248.53 570.35,247.44 572.59,246.37 574.83,245.29 577.06,244.26 579.3,243.19 581.53,242.07 583.77,241.08 586.01,240.08 588.24,239.02 590.48,237.95 592.71,236.84 594.95,235.67 597.19,234.45 599.42,233.59 601.66,232.86 603.89,232.14 606.13,231.42 608.37,230.73 610.6,230.01 612.84,229.3 615.07,228.62 617.31,228 619.55,227.34 621.78,226.64 624.02,226.01 626.25,225.46 628.49,224.94 630.73,224.43 632.96,224.01 635.2,223.69 637.43,223.25 639.67,222.88 641.91,222.47 644.14,222.14 646.38,221.9 648.61,221.55 650.85,221.31 653.09,221.14 655.32,220.95 657.56,220.72 659.79,220.35 662.03,220.01 664.27,219.58 666.5,219.24 668.74,218.9 670.97,218.77 673.21,218.74 675.45,218.67 677.68,218.68 679.92,218.63 682.15,218.5 684.39,218.4 686.63,218.48 688.86,218.69 691.1,219.13 693.33,219.85 695.57,220.38 697.81,221.17 700.04,221.91 702.28,222.72 704.51,223.68 706.75,224.66 708.99,225.69 711.22,226.61 713.46,227.53 715.69,228.62 717.93,229.55 720.17,230.41 722.4,231.27 724.64,232.37 726.87,233.52 729.11,234.77 731.35,235.87 733.58,237.09 735.82,238.3 738.05,239.69 740.29,241.27 742.53,242.79 744.76,244.67 747,246.41 749.23,247.9 751.47,249.1 753.71,250.51 755.94,251.75 758.18,252.95 760.41,254.3 762.65,255.48 764.89,256.65 767.12,257.53 769.36,258.5 771.59,259.49 773.83,260.53 776.07,261.46 778.3,262.35 780.54,263.27 782.77,264.14 785.01,265.13 787.25,266.17 789.48,267.11 791.72,267.99 793.95,269.09 796.19,270.08 798.43,271.31 800.66,272.55 802.9,273.76 805.13,275.03 807.37,276.36 809.61,277.66 811.84,279.01 814.08,280.18 816.31,281.32 818.55,282.38 820.79,283.4 823.02,284.25 825.26,285.18 827.49,285.94 829.73,286.72 831.97,287.4 834.2,288.24 836.44,288.95 838.67,289.71 840.91,290.45 843.15,291.19 845.38,291.88 847.62,292.59 849.85,293.36 852.09,294 854.33,294.67 856.56,295.41 858.8,296.14 861.03,296.89 863.27,297.74 865.51,298.58 867.74,298.98 869.98,299.31 872.21,299.68 874.45,300.04 876.69,300.4 878.92,300.78 881.16,301.17 883.39,301.54 885.63,301.88 887.87,302.2 890.1,302.61 892.34,303 894.57,303.4 896.81,303.82 899.05,304.23 901.28,304.67 903.52,305.04 905.75,305.47 907.99,305.84 910.23,306.27 912.46,306.64 914.7,306.98 916.93,307.41 919.17,307.85 921.41,308.24 923.64,308.65 925.88,309.13 928.11,309.6 930.35,310.13 932.59,310.66 934.82,311.18 937.06,311.67 939.29,312.21 941.53,312.77 943.77,313.33 946,313.83 948.24,314.44 950.47,315.06 952.71,315.64 954.95,316.19 957.18,316.75 959.42,317.19 961.65,317.64 963.89,318.15 966.13,318.6 968.36,319.1 970.6,319.58 972.83,319.98 975.07,320.34 977.31,320.7 979.54,321.03 981.78,321.37 984.01,321.7 986.25,322.03 988.49,322.31 990.72,322.6 992.96,322.93 995.19,323.27 997.43,323.56 999.67,323.78 1001.9,323.92 1004.14,324.03 1006.37,324.19 1008.61,324.35 1010.85,324.45 1013.08,324.54 1015.32,324.67 1017.55,324.84 1019.79,325.04 1022.03,325.27 1024.26,325.46 1026.5,325.7 1028.73,325.97 1030.97,326.29 1033.21,326.6 1035.44,326.95 1037.68,327.43 1039.91,327.94 1042.15,328.39 1044.39,328.85 1046.62,329.3 1048.86,329.75 1051.09,330.11 1053.33,330.4 1055.57,330.75 1057.8,331.09 1060.04,331.42 1062.27,331.73 1064.51,332.08 1066.75,332.37 1068.98,332.59 1071.22,332.79 1073.45,332.99 1075.69,333.24 1077.93,333.46 1080.16,333.7 1082.4,333.94 1084.63,334.17 1086.87,334.4 1089.11,334.65 1091.34,334.92 1093.58,335.19 1095.81,335.46 1098.05,335.73 1100.29,336.01 1102.52,336.31 1104.76,336.59 1106.99,336.86 1109.23,337.15 1111.47,337.44 1113.7,337.71 1115.94,337.99 1118.17,338.23 1120.41,338.47 1122.65,338.7 1124.88,338.91 1127.12,339.14 1129.35,339.37 1131.59,339.6 1133.83,339.87 1136.06,340.24 1138.3,340.59 1140.53,340.9 1142.77,341.18" fill="none" stroke="#808080" stroke-width="1" stroke-linejoin="round" shape-rendering="crispEdges"/>
<polyline points="9.12,377.43 11.35,377.39 13.59,377.36 15.83,377.32 18.06,377.28 20.3,377.24 22.53,377.18 24.77,377.12 27.01,377.05 29.24,376.99 31.48,376.92 33.71,376.85 35.95,376.79 38.19,376.72 40.42,376.64 42.66,376.56 44.89,376.5 47.13,376.45 49.37,376.38 51.6,376.32 53.84,376.26 56.07,376.2 58.31,376.14 60.55,376.08 62.78,376.02 65.02,375.96 67.25,375.91 69.49,375.84 71.73,375.78 73.96,375.72 76.2,375.66 78.43,375.61 80.67,375.55 82.91,375.5 85.14,375.43 87.38,375.37 89.61,375.32 91.85,375.26 94.09,375.2 96.32,375.13 98.56,375.08 100.79,375 103.03,374.91 105.27,374.8 107.5,374.66 109.74,374.49 111.97,374.33 114.21,374.14 116.45,373.93 118.68,373.7 120.92,373.45 123.15,373.18 125.39,372.92 127.63,372.65 129.86,372.41 132.1,372.18 134.33,371.94 136.57,371.71 138.81,371.47 141.04,371.25 143.28,371.04 145.51,370.84 147.75,370.63 149.99,370.44 152.22,370.26 154.46,370.09 156.69,369.92 158.93,369.79 161.17,369.66 163.4,369.53 165.64,369.39 167.87,369.28 170.11,369.18 172.35,369.1 174.58,369 176.82,368.91 179.05,368.79 181.29,368.65 183.53,368.52 185.76,368.4 188,368.28 190.23,368.17 192.47,368.05 194.71,367.93 196.94,367.82 199.18,367.7 201.41,367.59 203.65,367.46 205.89,367.31 208.12,367.16 210.36,367.01 212.59,366.84 214.83,366.66 217.07,366.51 219.3,366.35 221.54,366.17 223.77,366.01 226.01,365.83 228.25,365.66 230.48,365.51 232.72,365.35 234.95,365.19 237.19,365.06 239.43,364.93 241.66,364.86 243.9,364.82 246.13,364.78 248.37,364.79 250.61,364.84 252.84,364.88 255.08,364.95 257.31,365.03 259.55,365.1 261.79,365.16 264.02,365.19 266.26,365.2 268.49,365.2 270.73,365.22 272.97,365.22 275.2,365.23 277.44,365.26 279.67,365.28 281.91,365.31 284.15,365.32 286.38,365.32 288.62,365.31 290.85,365.29 293.09,365.24 295.33,365.19 297.56,365.14 299.8,365.09 302.03,365.04 304.27,364.95 306.51,364.85 308.74,364.77 310.98,364.72 313.21,364.69 315.45,364.7 317.69,364.72 319.92,364.71 322.16,364.72 324.39,364.72 326.63,364.7 328.87,364.68 331.1,364.6 333.34,364.45 335.57,364.24 337.81,364.03 340.05,363.83 342.28,363.62 344.52,363.42 346.75,363.26 348.99,363.05 351.23,362.87 353.46,362.71 355.7,362.49 357.93,362.06 360.17,361.53 362.41,361.01 364.64,360.3 366.88,359.48 369.11,358.84 371.35,358.19 373.59,357.49 375.82,356.73 378.06,355.88 380.29,355.08 382.53,354.07 384.77,352.97 387,351.86 389.24,350.76 391.47,349.93 393.71,348.95 395.95,348.19 398.18,347.31 400.42,346.48 402.65,345.19 404.89,343.71 407.13,342.32 409.36,340.85 411.6,339.35 413.83,337.95 416.07,336.62 418.31,335.01 420.54,333.13 422.78,331.05 425.01,328.42 427.25,326.08 429.49,323.35 431.72,320.68 433.96,317.85 436.19,314.81 438.43,311.73 440.67,308.55 442.9,305.68 445.14,302.76 447.37,299.48 449.61,296.53 451.85,293.73 454.08,290.94 456.32,287.63 458.55,284.3 460.79,280.81 463.03,277.69 465.26,274.46 467.5,271.38 469.73,267.94 471.97,264.15 474.21,260.5 476.44,256.21 478.68,252.11 480.91,248.42 483.15,245.31 485.39,241.68 487.62,238.36 489.86,235.12 492.09,231.82 494.33,228.81 496.57,225.8 498.8,223.58 501.04,221.29 503.27,218.82 505.51,216.37 507.75,214.18 509.98,212.09 512.22,209.98 514.45,208.04 516.69,206.22 518.93,204.26 521.16,202.6 523.4,201.13 525.63,198.94 527.87,197.05 530.11,194.57 532.34,192.32 534.58,190.13 536.81,188.29 539.05,186.47 541.29,184.7 543.52,182.85 545.76,181.39 547.99,179.91 550.23,178.56 552.47,177.54 554.7,177.11 556.94,176.71 559.17,177.18 561.41,177.34 563.65,178.08 565.88,178.42 568.12,179.2 570.35,180.08 572.59,181.01 574.83,182.03 577.06,182.83 579.3,183.62 581.53,184.66 583.77,185.64 586.01,186.43 588.24,187.09 590.48,188.27 592.71,189.39 594.95,190.52 597.19,191.2 599.42,192.71 601.66,194.34 603.89,196.34 606.13,198.7 608.37,200.96 610.6,203.8 612.84,206.49 615.07,208.82 617.31,210.69 619.55,213 621.78,214.92 624.02,216.89 626.25,219.09 628.49,221.07 630.73,223.07 632.96,224.43 635.2,226.1 637.43,227.69 639.67,229.38 641.91,230.76 644.14,232.2 646.38,233.82 648.61,235.05 650.85,236.39 653.09,238.01 655.32,239.29 657.56,240.31 659.79,241.76 662.03,242.97 664.27,244.59 666.5,246.16 668.74,247.67 670.97,249.26 673.21,251.01 675.45,252.65 677.68,254.52 679.92,255.87 682.15,257.1 684.39,258.25 686.63,259.43 688.86,260.28 691.1,261.56 693.33,262.52 695.57,263.42 697.81,264.26 700.04,265.4 702.28,266.23 704.51,267.28 706.75,268.3 708.99,269.34 711.22,270.38 713.46,271.44 715.69,272.58 717.93,273.46 720.17,274.39 722.4,275.44 724.64,276.47 726.87,277.64 729.11,279.02 731.35,280.54 733.58,281.47 735.82,282.27 738.05,283.03 740.29,283.84 742.53,284.61 744.76,285.54 747,286.32 749.23,286.99 751.47,287.51 753.71,288.01 755.94,288.58 758.18,289.02 760.41,289.5 762.65,289.89 764.89,290.23 767.12,290.64 769.36,290.9 771.59,291.28 773.83,291.67 776.07,292.16 778.3,292.5 780.54,292.72 782.77,293.23 785.01,293.86 787.25,294.33 789.48,294.93 791.72,295.67 793.95,296.42 796.19,297.18 798.43,298.03 800.66,298.94 802.9,299.84 805.13,300.81 807.37,301.72 809.61,302.66 811.84,303.49 814.08,304.49 816.31,305.55 818.55,306.51 820.79,307.37 823.02,308.21 825.26,308.79 827.49,309.36 829.73,310.02 831.97,310.55 834.2,311.09 836.44,311.66 838.67,312.14 840.91,312.61 843.15,313.03 845.38,313.38 847.62,313.75 849.85,314.13 852.09,314.54 854.33,314.94 856.56,315.39 858.8,315.8 861.03,316.15 863.27,316.47 865.51,316.63 867.74,316.48 869.98,316.34 872.21,316.33 874.45,316.24 876.69,316.19 878.92,316.02 881.16,316.02 883.39,316.09 885.63,316.25 887.87,316.39 890.1,316.63 892.34,316.98 894.57,317.3 896.81,317.75 899.05,318.23 901.28,318.71 903.52,319.19 905.75,319.66 907.99,320.02 910.23,320.38 912.46,320.78 914.7,321.25 916.93,321.59 919.17,321.84 921.41,322.14 923.64,322.38 925.88,322.58 928.11,322.78 930.35,323.09 932.59,323.29 934.82,323.42 937.06,323.5 939.29,323.62 941.53,323.82 943.77,323.99 946,324.16 948.24,324.38 950.47,324.58 952.71,324.76 954.95,325.01 957.18,325.29 959.42,325.58 961.65,325.91 963.89,326.27 966.13,326.66 968.36,327.11 970.6,327.5 972.83,327.81 975.07,328.07 977.31,328.36 979.54,328.68 981.78,328.99 984.01,329.27 986.25,329.51 988.49,329.67 990.72,329.81 992.96,330.06 995.19,330.39 997.43,330.65 999.67,330.93 1001.9,331.35 1004.14,331.72 1006.37,332.05 1008.61,332.45 1010.85,332.72 1013.08,333.06 1015.32,333.32 1017.55,333.59 1019.79,333.83 1022.03,334.15 1024.26,334.29 1026.5,334.41 1028.73,334.64 1030.97,334.84 1033.21,334.97 1035.44,335.19 1037.68,335.67 1039.91,336.22 1042.15,336.77 1044.39,337.31 1046.62,337.82 1048.86,338.25 1051.09,338.62 1053.33,338.97 1055.57,339.36 1057.8,339.8 1060.04,340.25 1062.27,340.68 1064.51,341.08 1066.75,341.46 1068.98,341.76 1071.22,342.09 1073.45,342.37 1075.69,342.65 1077.93,342.93 1080.16,343.24 1082.4,343.5 1084.63,343.77 1086.87,344.03 1089.11,344.3 1091.34,344.55 1093.58,344.8 1095.81,345 1098.05,345.2 1100.29,345.35 1102.52,345.5 1104.76,345.69 1106.99,345.92 1109.23,346.23 1111.47,346.51 1113.7,346.74 1115.94,346.98 1118.17,347.2 1120.41,347.43 1122.65,347.72 1124.88,348 1127.12,348.21 1129.35,348.36 1131.59,348.55 1133.83,348.8 1136.06,349.13 1138.3,349.45 1140.53,349.75 1142.77,349.92" fill="none" stroke="#109030" stroke-width="1" stroke-linejoin="round" shape-rendering="crispEdges"/>
<polyline points="9.12,377.38 11.35,377.28 13.59,377.17 15.83,377.06 18.06,376.94 20.3,376.8 22.53,376.63 24.77,376.45 27.01,376.25 29.24,376.06 31.48,375.86 33.71,375.65 35.95,375.47 38.19,375.24 40.42,375.01 42.66,374.79 44.89,374.61 47.13,374.43 49.37,374.25 51.6,374.06 53.84,373.94 56.07,373.86 58.31,373.78 60.55,373.73 62.78,373.67 65.02,373.63 67.25,373.65 69.49,373.62 71.73,373.64 73.96,373.64 76.2,373.68 78.43,373.72 80.67,373.73 82.91,373.79 85.14,373.83 87.38,373.88 89.61,373.89 91.85,373.9 94.09,373.91 96.32,373.89 98.56,373.91 100.79,373.87 103.03,373.76 105.27,373.6 107.5,373.35 109.74,373.03 111.97,372.71 114.21,372.35 116.45,371.9 118.68,371.41 120.92,370.8 123.15,370.18 125.39,369.55 127.63,368.92 129.86,368.39 132.1,367.87 134.33,367.32 136.57,366.79 138.81,366.27 141.04,365.81 143.28,365.28 145.51,364.79 147.75,364.36 149.99,364 152.22,363.76 154.46,363.6 156.69,363.4 158.93,363.38 161.17,363.44 163.4,363.54 165.64,363.7 167.87,363.93 170.11,364.24 172.35,364.6 174.58,364.79 176.82,364.97 179.05,365.16 181.29,365.27 183.53,365.38 185.76,365.49 188,365.67 190.23,365.85 192.47,366.04 194.71,366.2 196.94,366.34 199.18,366.46 201.41,366.65 203.65,366.64 205.89,366.59 208.12,366.53 210.36,366.52 212.59,366.41 214.83,366.19 217.07,366.01 219.3,365.86 221.54,365.67 223.77,365.55 226.01,365.44 228.25,365.34 230.48,365.23 232.72,365.1 234.95,364.93 237.19,364.79 239.43,364.61 241.66,364.48 243.9,364.39 246.13,364.28 248.37,364.34 250.61,364.48 252.84,364.58 255.08,364.62 257.31,364.73 259.55,364.87 261.79,364.89 264.02,364.92 266.26,364.95 268.49,364.88 270.73,364.95 272.97,364.93 275.2,364.96 277.44,365.01 279.67,365.06 281.91,365.09 284.15,365.15 286.38,365.15 288.62,365.07 290.85,364.96 293.09,364.75 295.33,364.51 297.56,364.32 299.8,364.14 302.03,363.96 304.27,363.77 306.51,363.66 308.74,363.54 310.98,363.54 313.21,363.64 315.45,363.73 317.69,363.88 319.92,363.95 322.16,364.06 324.39,364.19 326.63,364.21 328.87,364.27 331.1,364.19 333.34,363.9 335.57,363.48 337.81,363.01 340.05,362.51 342.28,361.97 344.52,361.5 346.75,361.1 348.99,360.5 351.23,360.05 353.46,359.68 355.7,358.97 357.93,357.65 360.17,355.91 362.41,354.24 364.64,351.99 366.88,349.38 369.11,347.28 371.35,345.27 373.59,343.04 375.82,340.85 378.06,338.66 380.29,336.81 382.53,334.45 384.77,331.9 387,329.29 389.24,326.63 391.47,324.74 393.71,322.57 395.95,320.87 398.18,318.72 400.42,316.94 402.65,314.28 404.89,311.49 407.13,308.85 409.36,306.6 411.6,304.61 413.83,302.4 416.07,300.39 418.31,297.72 420.54,294.34 422.78,290.59 425.01,284.98 427.25,280.8 429.49,275.65 431.72,270.78 433.96,265.43 436.19,258.58 438.43,252.11 440.67,244.73 442.9,238.64 445.14,232.36 447.37,226.51 449.61,222.19 451.85,218.11 454.08,214.21 456.32,208.91 458.55,203.21 460.79,196.78 463.03,192.31 465.26,188.19 467.5,184.9 469.73,182.02 471.97,177.2 474.21,173.95 476.44,168.56 478.68,164.26 480.91,161.94 483.15,161.24 485.39,159.45 487.62,157.71 489.86,156.07 492.09,154.65 494.33,152.75 496.57,150.43 498.8,149.92 501.04,150.35 503.27,150.83 505.51,151.94 507.75,152.52 509.98,153.72 512.22,154.45 514.45,157.12 516.69,160.67 518.93,163.18 521.16,168.46 523.4,173.71 525.63,176.31 527.87,177.78 530.11,179.53 532.34,180.62 534.58,181.96 536.81,183.7 539.05,184.48 541.29,185.55 543.52,184.4 545.76,184.89 547.99,185.67 550.23,186.96 552.47,187.79 554.7,189.4 556.94,190.78 559.17,192.39 561.41,194.17 563.65,197.12 565.88,198.24 568.12,199.64 570.35,201.99 572.59,204.01 574.83,207.11 577.06,210.17 579.3,212.82 581.53,215.62 583.77,219.69 586.01,223.31 588.24,226.96 590.48,229.57 592.71,231.67 594.95,232.65 597.19,233.3 599.42,235 601.66,237.78 603.89,239.5 606.13,241.26 608.37,242.59 610.6,244.71 612.84,246.11 615.07,248.17 617.31,250.27 619.55,252.37 621.78,253.97 624.02,255.87 626.25,257.96 628.49,259.05 630.73,260.35 632.96,261.94 635.2,263.84 637.43,265.73 639.67,268.54 641.91,271.2 644.14,272.19 646.38,272.89 648.61,273.26 650.85,273.75 653.09,274.34 655.32,274.93 657.56,275.19 659.79,275.12 662.03,274.64 664.27,274.3 666.5,274.34 668.74,274.32 670.97,274.19 673.21,274.29 675.45,274.29 677.68,274.68 679.92,274.2 682.15,273.89 684.39,273.57 686.63,273.78 688.86,273.65 691.1,274.01 693.33,274.81 695.57,275.25 697.81,275.86 700.04,276.56 702.28,277.39 704.51,278.54 706.75,280 708.99,281.35 711.22,282.82 713.46,284.12 715.69,285.6 717.93,287.03 720.17,288.54 722.4,289.71 724.64,291.39 726.87,293.29 729.11,294.96 731.35,296.63 733.58,298.57 735.82,299.9 738.05,301.02 740.29,302.53 742.53,303.63 744.76,305.13 747,306.39 749.23,307.3 751.47,307.88 753.71,308.38 755.94,308.58 758.18,308.62 760.41,308.72 762.65,308.36 764.89,307.86 767.12,307.52 769.36,307.1 771.59,306.67 773.83,306.49 776.07,306.07 778.3,305.28 780.54,304.24 782.77,303.86 785.01,303.8 787.25,303.5 789.48,303.1 791.72,303.22 793.95,303.4 796.19,303.66 798.43,304.36 800.66,305.43 802.9,306.78 805.13,308.11 807.37,309.76 809.61,311.58 811.84,313.23 814.08,314.99 816.31,316.69 818.55,318.09 820.79,319.41 823.02,320.79 825.26,322.23 827.49,323.2 829.73,323.73 831.97,324.5 834.2,325.03 836.44,325.37 838.67,325.73 840.91,326.28 843.15,326.36 845.38,326.14 847.62,325.85 849.85,325.57 852.09,325.49 854.33,325.37 856.56,325.41 858.8,325.3 861.03,325.08 863.27,324.82 865.51,324.41 867.74,323.38 869.98,322.56 872.21,321.92 874.45,321.18 876.69,320.56 878.92,319.94 881.16,319.48 883.39,319.14 885.63,318.81 887.87,318.46 890.1,318.33 892.34,318.31 894.57,318.22 896.81,318 899.05,317.75 901.28,317.48 903.52,317.28 905.75,317.19 907.99,317.13 910.23,317.3 912.46,318.16 914.7,318.95 916.93,319.66 919.17,320.61 921.41,321.35 923.64,322.15 925.88,322.9 928.11,323.47 930.35,324.17 932.59,325.04 934.82,325.8 937.06,326.34 939.29,327.06 941.53,327.97 943.77,328.87 946,329.61 948.24,330.58 950.47,331.46 952.71,332.34 954.95,333.3 957.18,334.33 959.42,335.23 961.65,336.16 963.89,337.03 966.13,338.05 968.36,339.24 970.6,340.12 972.83,340.83 975.07,341.22 977.31,341.58 979.54,341.91 981.78,342.3 984.01,342.52 986.25,342.57 988.49,342.41 990.72,342.36 992.96,342.33 995.19,342.51 997.43,342.49 999.67,342.2 1001.9,341.56 1004.14,340.99 1006.37,340.33 1008.61,339.73 1010.85,338.75 1013.08,337.78 1015.32,336.96 1017.55,336.47 1019.79,336.11 1022.03,335.83 1024.26,335.17 1026.5,334.6 1028.73,334.35 1030.97,333.97 1033.21,333.64 1035.44,333.62 1037.68,334.1 1039.91,334.7 1042.15,335.47 1044.39,336.44 1046.62,337.56 1048.86,338.52 1051.09,339.36 1053.33,340.15 1055.57,341.28 1057.8,342.38 1060.04,343.67 1062.27,344.74 1064.51,345.91 1066.75,346.96 1068.98,348.2 1071.22,349.36 1073.45,350.25 1075.69,351.43 1077.93,352.75 1080.16,353.75 1082.4,354.06 1084.63,354.09 1086.87,354.12 1089.11,354.25 1091.34,354.52 1093.58,354.88 1095.81,355.33 1098.05,355.72 1100.29,356.03 1102.52,356.34 1104.76,356.44 1106.99,356.54 1109.23,356.67 1111.47,356.75 1113.7,356.86 1115.94,356.99 1118.17,356.99 1120.41,356.89 1122.65,356.77 1124.88,356.65 1127.12,356.48 1129.35,356.29 1131.59,356.05 1133.83,355.71 1136.06,355.33 1138.3,354.96 1140.53,354.56 1142.77,353.88" fill="none" stroke="#f0a810" stroke-width="2.6" stroke-linejoin="round" shape-rendering="crispEdges"/>
<polyline points="9.12,377.3 11.35,377.1 13.59,376.9 15.83,376.67 18.06,376.44 20.3,376.15 22.53,375.8 24.77,375.44 27.01,375.05 29.24,374.67 31.48,374.42 33.71,374.21 35.95,374.05 38.19,373.82 40.42,373.59 42.66,373.42 44.89,373.41 47.13,373.42 49.37,373.45 51.6,373.46 53.84,373.47 56.07,373.52 58.31,373.51 60.55,373.65 62.78,373.75 65.02,373.84 67.25,373.88 69.49,373.83 71.73,373.83 73.96,373.82 76.2,373.88 78.43,373.92 80.67,373.96 82.91,373.94 85.14,373.92 87.38,373.91 89.61,373.89 91.85,373.96 94.09,373.98 96.32,373.95 98.56,373.93 100.79,373.82 103.03,373.57 105.27,373.26 107.5,372.78 109.74,372.14 111.97,371.53 114.21,370.74 116.45,369.82 118.68,368.86 120.92,367.67 123.15,366.53 125.39,365.54 127.63,364.59 129.86,364 132.1,363.6 134.33,363.12 136.57,362.84 138.81,362.71 141.04,362.77 143.28,362.88 145.51,363.05 147.75,363.17 149.99,363.41 152.22,363.51 154.46,363.61 156.69,363.69 158.93,363.93 161.17,364.18 163.4,364.31 165.64,364.52 167.87,364.81 170.11,365.31 172.35,365.79 174.58,366.06 176.82,366.33 179.05,366.64 181.29,366.61 183.53,366.59 185.76,366.68 188,366.82 190.23,366.89 192.47,366.76 194.71,366.61 196.94,366.62 199.18,366.6 201.41,366.67 203.65,366.66 205.89,366.59 208.12,366.39 210.36,366.22 212.59,365.94 214.83,365.62 217.07,365.4 219.3,365.1 221.54,364.74 223.77,364.44 226.01,364.21 228.25,364.1 230.48,364.08 232.72,363.98 234.95,363.92 237.19,363.97 239.43,363.82 241.66,363.86 243.9,364.04 246.13,364.12 248.37,364.48 250.61,364.86 252.84,365.07 255.08,365.26 257.31,365.54 259.55,365.78 261.79,365.97 264.02,365.98 266.26,365.86 268.49,365.64 270.73,365.42 272.97,365 275.2,364.85 277.44,364.76 279.67,364.57 281.91,364.4 284.15,364.34 286.38,364.31 288.62,364.28 290.85,364.27 293.09,364.08 295.33,364.03 297.56,363.78 299.8,363.52 302.03,363.35 304.27,363.15 306.51,362.97 308.74,362.77 310.98,362.8 313.21,363.02 315.45,363.37 317.69,363.73 319.92,364.11 322.16,364.59 324.39,365.02 326.63,365.27 328.87,365.57 331.1,365.6 333.34,365 335.57,363.94 337.81,362.65 340.05,361.28 342.28,359.83 344.52,358.4 346.75,357.18 348.99,355.72 351.23,354.53 353.46,353.75 355.7,352.94 357.93,351.36 360.17,349.17 362.41,347.19 364.64,344.15 366.88,340.35 369.11,337.38 371.35,334.83 373.59,331.54 375.82,327.95 378.06,324.38 380.29,322.27 382.53,319.72 384.77,316.6 387,314.43 389.24,312.91 391.47,312.1 393.71,310.31 395.95,310.2 398.18,309.48 400.42,309.51 402.65,306.3 404.89,303.27 407.13,301.09 409.36,298.77 411.6,296.31 413.83,292.7 416.07,290.47 418.31,285.24 420.54,279.2 422.78,271.66 425.01,263.67 427.25,258.33 429.49,250.21 431.72,242.8 433.96,234.55 436.19,224.46 438.43,213.76 440.67,204.21 442.9,198.08 445.14,193.06 447.37,189.36 449.61,186.05 451.85,186.01 454.08,185.63 456.32,183.28 458.55,181.97 460.79,179.8 463.03,180.4 465.26,178.31 467.5,176.74 469.73,174.68 471.97,168.35 474.21,161.89 476.44,151.49 478.68,145.24 480.91,141.91 483.15,142.69 485.39,138.49 487.62,137.12 489.86,135.4 492.09,134.62 494.33,137.14 496.57,138.97 498.8,148.35 501.04,155.46 503.27,159.76 505.51,161.19 507.75,166.55 509.98,170.33 512.22,173.5 514.45,179.62 516.69,184.19 518.93,187.39 521.16,188.57 523.4,191.96 525.63,192.86 527.87,194.38 530.11,192.51 532.34,190.91 534.58,190.43 536.81,187.79 539.05,184.76 541.29,183.72 543.52,180.24 545.76,177.82 547.99,178.49 550.23,179.55 552.47,183.08 554.7,187.89 556.94,191.13 559.17,197 561.41,203.57 563.65,210.51 565.88,216.24 568.12,221.46 570.35,225.48 572.59,228.48 574.83,231.14 577.06,232.44 579.3,234.51 581.53,234.24 583.77,235.82 586.01,236.1 588.24,237.68 590.48,237.67 592.71,237.85 594.95,236.82 597.19,235.46 599.42,237.56 601.66,241.04 603.89,244.76 606.13,246.7 608.37,249.07 610.6,251.74 612.84,254.54 615.07,258.48 617.31,263.72 619.55,269.28 621.78,270.39 624.02,270.7 626.25,271.16 628.49,271.4 630.73,271.63 632.96,272.14 635.2,273.13 637.43,272.98 639.67,273.35 641.91,273.12 644.14,273.99 646.38,275.08 648.61,275.36 650.85,276.1 653.09,277.05 655.32,277.72 657.56,277.25 659.79,277.27 662.03,275.92 664.27,275.48 666.5,274.7 668.74,273.56 670.97,273.01 673.21,272.48 675.45,271.53 677.68,271.63 679.92,271.15 682.15,270.52 684.39,271.21 686.63,272.08 688.86,272.61 691.1,274.47 693.33,276.61 695.57,278.02 697.81,280.2 700.04,281.5 702.28,283.64 704.51,286.56 706.75,288.79 708.99,290.63 711.22,293.03 713.46,293.77 715.69,294.59 717.93,296.03 720.17,296.89 722.4,297.92 724.64,299.14 726.87,300.02 729.11,301.12 731.35,302.63 733.58,304.11 735.82,306.04 738.05,307.46 740.29,309.02 742.53,310.38 744.76,312.34 747,313.64 749.23,314.59 751.47,314.64 753.71,314.13 755.94,313.04 758.18,311.2 760.41,309.99 762.65,307.71 764.89,305.34 767.12,302.7 769.36,300.56 771.59,298.75 773.83,298.35 776.07,298.01 778.3,297.52 780.54,297.28 782.77,297.72 785.01,299.89 787.25,301.67 789.48,303.49 791.72,305.88 793.95,308.06 796.19,308.98 798.43,310.7 800.66,313.33 802.9,316.28 805.13,318.5 807.37,319.63 809.61,321.5 811.84,322.97 814.08,324.11 816.31,325.33 818.55,327.21 820.79,328.12 823.02,328.25 825.26,328.19 827.49,327.9 829.73,327.84 831.97,327.51 834.2,327.09 836.44,326.64 838.67,326.13 840.91,325.34 843.15,324.6 845.38,324.03 847.62,323.51 849.85,323.24 852.09,323.15 854.33,323.23 856.56,323.72 858.8,323.96 861.03,324.04 863.27,324.3 865.51,324.23 867.74,322.74 869.98,321.6 872.21,320.61 874.45,319.21 876.69,317.89 878.92,316.17 881.16,315 883.39,314.23 885.63,313.32 887.87,312.69 890.1,313.92 892.34,315.02 894.57,315.83 896.81,316.79 899.05,317.6 901.28,318.79 903.52,319.56 905.75,320.15 907.99,320.95 910.23,321.92 912.46,322.4 914.7,322.88 916.93,323.48 919.17,324.43 921.41,325.11 923.64,325.52 925.88,326.24 928.11,326.79 930.35,327.4 932.59,328.17 934.82,329.19 937.06,329.81 939.29,330.63 941.53,331.52 943.77,332.63 946,333.7 948.24,334.91 950.47,336.13 952.71,337.27 954.95,338.43 957.18,339.47 959.42,340.65 961.65,341.69 963.89,342.53 966.13,343.48 968.36,344.79 970.6,345.33 972.83,345.53 975.07,345.16 977.31,344.73 979.54,344.36 981.78,343.96 984.01,343.34 986.25,342.6 988.49,341.33 990.72,339.92 992.96,339.32 995.19,339.49 997.43,339.83 999.67,339.68 1001.9,338.76 1004.14,338.03 1006.37,337.32 1008.61,336.85 1010.85,336.17 1013.08,335.64 1015.32,334.59 1017.55,333.46 1019.79,332.4 1022.03,331.99 1024.26,331.58 1026.5,331.17 1028.73,331.38 1030.97,331.09 1033.21,331.11 1035.44,331.6 1037.68,333.62 1039.91,335.95 1042.15,338.54 1044.39,340.9 1046.62,343.53 1048.86,345.87 1051.09,347.33 1053.33,349.21 1055.57,351.45 1057.8,353.16 1060.04,353.72 1062.27,353.53 1064.51,353.29 1066.75,353.02 1068.98,352.86 1071.22,352.86 1073.45,353.17 1075.69,353.64 1077.93,354.06 1080.16,354.34 1082.4,354.41 1084.63,354.65 1086.87,354.96 1089.11,355.48 1091.34,356.18 1093.58,356.9 1095.81,357.49 1098.05,357.8 1100.29,358.01 1102.52,358.35 1104.76,358.46 1106.99,358.43 1109.23,358.39 1111.47,358.01 1113.7,357.54 1115.94,357.08 1118.17,356.48 1120.41,355.98 1122.65,355.54 1124.88,354.94 1127.12,354.49 1129.35,354.15 1131.59,353.7 1133.83,353.4 1136.06,353.11 1138.3,352.83 1140.53,352.64 1142.77,351.79" fill="none" stroke="#1020a0" stroke-width="1" stroke-linejoin="round" shape-rendering="crispEdges"/>
<polyline points="9.12,377.15 11.35,376.75 13.59,376.34 15.83,375.89 18.06,375.42 20.3,375.15 22.53,374.85 24.77,374.55 27.01,374.21 29.24,373.92 31.48,373.68 33.71,373.57 35.95,373.56 38.19,373.42 40.42,373.26 42.66,373.17 44.89,373.26 47.13,373.28 49.37,373.47 51.6,373.65 53.84,373.78 56.07,373.78 58.31,373.73 60.55,373.82 62.78,373.85 65.02,373.91 67.25,373.99 69.49,373.92 71.73,373.84 73.96,373.78 76.2,373.85 78.43,373.86 80.67,373.99 82.91,374.03 85.14,374.05 87.38,373.97 89.61,373.92 91.85,373.93 94.09,373.93 96.32,373.85 98.56,373.89 100.79,373.71 103.03,373.2 105.27,372.6 107.5,371.71 109.74,370.39 111.97,369.35 114.21,368.27 116.45,367.04 118.68,366 120.92,364.96 123.15,363.72 125.39,362.81 127.63,362.13 129.86,361.99 132.1,362.25 134.33,362.52 136.57,362.87 138.81,363.3 141.04,363.54 143.28,363.51 145.51,363.59 147.75,363.48 149.99,363.52 152.22,363.49 154.46,363.7 156.69,363.79 158.93,364.39 161.17,364.84 163.4,365.13 165.64,365.34 167.87,365.83 170.11,366.24 172.35,366.74 174.58,367 176.82,367.32 179.05,367.44 181.29,366.98 183.53,366.43 185.76,366.36 188,366.31 190.23,366.34 192.47,366.55 194.71,366.79 196.94,366.88 199.18,366.88 201.41,366.99 203.65,366.78 205.89,366.38 208.12,365.9 210.36,365.55 212.59,364.89 214.83,364.47 217.07,364.42 219.3,364.29 221.54,363.93 223.77,364 226.01,363.95 228.25,363.77 230.48,363.87 232.72,364.02 234.95,363.85 237.19,363.98 239.43,363.86 241.66,363.84 243.9,364.06 246.13,364.38 248.37,364.97 250.61,365.86 252.84,366.3 255.08,366.47 257.31,366.69 259.55,366.59 261.79,366.07 264.02,365.66 266.26,365.26 268.49,364.59 270.73,364.24 272.97,363.93 275.2,364.04 277.44,364.27 279.67,364.56 281.91,364.56 284.15,364.75 286.38,364.57 288.62,364.28 290.85,363.98 293.09,363.61 295.33,363.3 297.56,362.99 299.8,362.77 302.03,362.72 304.27,362.69 306.51,362.65 308.74,362.54 310.98,362.83 313.21,363.32 315.45,364.05 317.69,364.82 319.92,365.68 322.16,366.35 324.39,366.73 326.63,366.49 328.87,366.33 331.1,365.53 333.34,363.65 335.57,361.14 337.81,358.81 340.05,356.23 342.28,354.13 344.52,353.16 346.75,353.22 348.99,352.63 351.23,352.82 353.46,353.37 355.7,352.72 357.93,349.51 360.17,345.72 362.41,341.56 364.64,334.93 366.88,327.98 369.11,325.24 371.35,323.94 373.59,321.53 375.82,320.97 378.06,320.77 380.29,319.29 382.53,315.5 384.77,311.68 387,307.89 389.24,305.05 391.47,304.91 393.71,305.13 395.95,308.71 398.18,311.06 400.42,313.97 402.65,307.69 404.89,301.41 407.13,293.47 409.36,286.49 411.6,278.65 413.83,277.71 416.07,279.53 418.31,277.01 420.54,271.91 422.78,264.68 425.01,249.62 427.25,237.13 429.49,223.41 431.72,213.68 433.96,204.42 436.19,199.31 438.43,190.39 440.67,185.02 442.9,182.48 445.14,181.7 447.37,179.42 449.61,181.71 451.85,187.01 454.08,188.79 456.32,184.85 458.55,184.51 460.79,177.88 463.03,173.79 465.26,167.83 467.5,168.63 469.73,164.85 471.97,158.82 474.21,149.98 476.44,135.15 478.68,121.85 480.91,118.98 483.15,126.56 485.39,127.01 487.62,139.1 489.86,148.94 492.09,150.27 494.33,147.73 496.57,150.93 498.8,157.6 501.04,161.98 503.27,169.24 505.51,174.65 507.75,182.17 509.98,183.05 512.22,185.02 514.45,189.99 516.69,193.73 518.93,192.6 521.16,194.08 523.4,198.9 525.63,195.73 527.87,195.03 530.11,192.42 532.34,187.73 534.58,181.96 536.81,179.85 539.05,174.5 541.29,175.03 543.52,172.75 545.76,173.68 547.99,177.13 550.23,184.6 552.47,191.13 554.7,203.04 556.94,208.58 559.17,216.86 561.41,222.54 563.65,229.9 565.88,229.45 568.12,234.34 570.35,234.1 572.59,234.42 574.83,232.37 577.06,235.44 579.3,234.68 581.53,234.38 583.77,237.22 586.01,239.83 588.24,239.92 590.48,240.66 592.71,241.33 594.95,236.42 597.19,231.09 599.42,235.2 601.66,241.42 603.89,248.19 606.13,256.98 608.37,267.05 610.6,268.28 612.84,267.67 615.07,268.77 617.31,270.46 619.55,271.51 621.78,272.5 624.02,273.74 626.25,273.55 628.49,272.34 630.73,271.75 632.96,271.77 635.2,272.51 637.43,272.4 639.67,274.36 641.91,274.5 644.14,276.21 646.38,277.64 648.61,278.32 650.85,277.83 653.09,279.6 655.32,279.23 657.56,276.85 659.79,276.21 662.03,274.01 664.27,271.36 666.5,270.16 668.74,270.27 670.97,269.81 673.21,270.96 675.45,271.7 677.68,273.1 679.92,272.03 682.15,271.23 684.39,271.46 686.63,272.46 688.86,272.11 691.1,276.9 693.33,282 695.57,284.58 697.81,287.93 700.04,290.89 702.28,290.38 704.51,291.13 706.75,293 708.99,293.33 711.22,295.18 713.46,297.15 715.69,298.06 717.93,299.06 720.17,300.45 722.4,300.66 724.64,301.12 726.87,301.98 729.11,303.18 731.35,304.8 733.58,307.57 735.82,310.96 738.05,312.94 740.29,314.86 742.53,315.95 744.76,317.11 747,316.33 749.23,316.24 751.47,314.43 753.71,312.31 755.94,308.96 758.18,306.08 760.41,303.74 762.65,300.98 764.89,298.37 767.12,296.44 769.36,295.05 771.59,293.75 773.83,295.71 776.07,297.65 778.3,298.6 780.54,299.52 782.77,301.69 785.01,304.08 787.25,305.68 789.48,308.39 791.72,312.24 793.95,314.42 796.19,313.88 798.43,315.72 800.66,318.28 802.9,320.32 805.13,322.58 807.37,325.38 809.61,327.28 811.84,327.66 814.08,327.89 816.31,328.09 818.55,329.04 820.79,328.97 823.02,328.84 825.26,328.49 827.49,327.71 829.73,326.64 831.97,326.04 834.2,325.35 836.44,324.8 838.67,324.54 840.91,324.05 843.15,323.15 845.38,322.71 847.62,322.22 849.85,321.93 852.09,322.25 854.33,323.31 856.56,324.73 858.8,325.69 861.03,326.15 863.27,326.35 865.51,325.15 867.74,320.75 869.98,317.51 872.21,315.07 874.45,312.07 876.69,310.63 878.92,311.59 881.16,312.48 883.39,313.39 885.63,314.56 887.87,314.74 890.1,316.26 892.34,317.56 894.57,318.27 896.81,319.01 899.05,320.47 901.28,321.32 903.52,321.55 905.75,322.03 907.99,322.89 910.23,323.36 912.46,323.48 914.7,324.21 916.93,324.94 919.17,325.96 921.41,326.85 923.64,327.55 925.88,328.27 928.11,328.63 930.35,328.84 932.59,329.48 934.82,330.84 937.06,331.34 939.29,332.64 941.53,334.19 943.77,335.78 946,336.56 948.24,338.47 950.47,339.62 952.71,340.35 954.95,341.09 957.18,342.38 959.42,342.83 961.65,343.77 963.89,344.71 966.13,345.86 968.36,347.2 970.6,347.83 972.83,347.29 975.07,345.6 977.31,343.59 979.54,341.52 981.78,340.08 984.01,339.39 986.25,339.6 988.49,339.08 990.72,338.33 992.96,338.57 995.19,339.59 997.43,340.06 999.67,340.27 1001.9,339.2 1004.14,337.49 1006.37,335.06 1008.61,333.64 1010.85,332.07 1013.08,332.08 1015.32,331.69 1017.55,331.86 1019.79,331.15 1022.03,331.91 1024.26,331.07 1026.5,330.64 1028.73,330.9 1030.97,331.02 1033.21,330.32 1035.44,332.12 1037.68,336.6 1039.91,341 1042.15,346.07 1044.39,351.48 1046.62,354.95 1048.86,355.14 1051.09,353.66 1053.33,352.36 1055.57,351.42 1057.8,351.37 1060.04,352.3 1062.27,353.4 1064.51,354.21 1066.75,354.61 1068.98,354.35 1071.22,353.41 1073.45,352.93 1075.69,353.06 1077.93,353.5 1080.16,354.32 1082.4,355.41 1084.63,356.37 1086.87,356.85 1089.11,357.46 1091.34,358.03 1093.58,358.4 1095.81,358.61 1098.05,358.74 1100.29,358.56 1102.52,358.67 1104.76,358.53 1106.99,358.26 1109.23,358.03 1111.47,357.47 1113.7,356.42 1115.94,355.63 1118.17,354.71 1120.41,353.92 1122.65,353.6 1124.88,353.46 1127.12,353.34 1129.35,353.6 1131.59,353.49 1133.83,353.2 1136.06,352.77 1138.3,352.32 1140.53,351.67 1142.77,350.09" fill="none" stroke="#e020d0" stroke-width="1" stroke-linejoin="round" shape-rendering="crispEdges"/>
<text x="499.4" y="139" font-size="12.5" fill="#404040" text-anchor="start" font-weight="normal" textLength="77.4" lengthAdjust="spacingAndGlyphs">배당락(0.00%)</text>
<text x="362.5" y="245.5" font-size="12.5" fill="#404040" text-anchor="start" font-weight="normal" textLength="88.8" lengthAdjust="spacingAndGlyphs">무상증자(0.00%)</text>
<text x="332.6" y="294.7" font-size="12.5" fill="#404040" text-anchor="start" font-weight="normal" textLength="88.1" lengthAdjust="spacingAndGlyphs">권리락(-49.48%)</text>
<text x="1049.5" y="331.5" font-size="12.5" fill="#404040" text-anchor="start" font-weight="normal" textLength="77" lengthAdjust="spacingAndGlyphs">배당락(0.00%)</text>
<g shape-rendering="crispEdges">
<line x1="9.5" y1="375.81" x2="9.5" y2="376.82" stroke="#e8180c" stroke-width="1"/>
<rect x="8" y="375.95" width="3" height="1" fill="#e8180c"/>
<line x1="11.5" y1="375.4" x2="11.5" y2="376.43" stroke="#e8180c" stroke-width="1"/>
<rect x="10" y="375.45" width="3" height="1" fill="#e8180c"/>
<line x1="13.5" y1="375.22" x2="13.5" y2="375.57" stroke="#e8180c" stroke-width="1"/>
<rect x="12" y="375.41" width="3" height="1" fill="#e8180c"/>
<line x1="16.5" y1="374.64" x2="16.5" y2="375.59" stroke="#1c5fd0" stroke-width="1"/>
<rect x="15" y="374.76" width="3" height="1" fill="#1c5fd0"/>
<line x1="18.5" y1="374.69" x2="18.5" y2="376.04" stroke="#e8180c" stroke-width="1"/>
<rect x="17" y="375.11" width="3" height="1" fill="#e8180c"/>
<line x1="20.5" y1="374.53" x2="20.5" y2="375.56" stroke="#e8180c" stroke-width="1"/>
<rect x="19" y="374.62" width="3" height="1" fill="#e8180c"/>
<line x1="22.5" y1="373.8" x2="22.5" y2="374.45" stroke="#e8180c" stroke-width="1"/>
<rect x="21" y="373.93" width="3" height="1" fill="#e8180c"/>
<line x1="25.5" y1="373.32" x2="25.5" y2="374.09" stroke="#1c5fd0" stroke-width="1"/>
<rect x="24" y="373.7" width="3" height="1" fill="#1c5fd0"/>
<line x1="27.5" y1="373.31" x2="27.5" y2="374.37" stroke="#e8180c" stroke-width="1"/>
<rect x="26" y="373.52" width="3" height="1" fill="#e8180c"/>
<line x1="29.5" y1="372.75" x2="29.5" y2="373.73" stroke="#1c5fd0" stroke-width="1"/>
<rect x="28" y="373.16" width="3" height="1" fill="#1c5fd0"/>
<line x1="31.5" y1="372.9" x2="31.5" y2="373.44" stroke="#1c5fd0" stroke-width="1"/>
<rect x="30" y="372.99" width="3" height="1" fill="#1c5fd0"/>
<line x1="34.5" y1="373.07" x2="34.5" y2="373.69" stroke="#1c5fd0" stroke-width="1"/>
<rect x="33" y="373.08" width="3" height="1" fill="#1c5fd0"/>
<line x1="36.5" y1="373.04" x2="36.5" y2="374.13" stroke="#1c5fd0" stroke-width="1"/>
<rect x="35" y="373.28" width="3" height="1" fill="#1c5fd0"/>
<line x1="38.5" y1="372.09" x2="38.5" y2="374.77" stroke="#e8180c" stroke-width="1"/>
<rect x="37" y="372.83" width="3" height="1.25" fill="#e8180c"/>
<line x1="40.5" y1="372.71" x2="40.5" y2="373.02" stroke="#1c5fd0" stroke-width="1"/>
<rect x="39" y="372.82" width="3" height="1" fill="#1c5fd0"/>
<line x1="43.5" y1="372.11" x2="43.5" y2="373.24" stroke="#1c5fd0" stroke-width="1"/>
<rect x="42" y="372.4" width="3" height="1" fill="#1c5fd0"/>
<line x1="45.5" y1="372.83" x2="45.5" y2="374.12" stroke="#1c5fd0" stroke-width="1"/>
<rect x="44" y="373.11" width="3" height="1" fill="#1c5fd0"/>
<line x1="47.5" y1="373.42" x2="47.5" y2="374.23" stroke="#1c5fd0" stroke-width="1"/>
<rect x="46" y="373.42" width="3" height="1" fill="#1c5fd0"/>
<line x1="49.5" y1="373.69" x2="49.5" y2="373.9" stroke="#1c5fd0" stroke-width="1"/>
<rect x="48" y="373.71" width="3" height="1" fill="#1c5fd0"/>
<line x1="51.5" y1="372.85" x2="51.5" y2="373.95" stroke="#1c5fd0" stroke-width="1"/>
<rect x="50" y="373.31" width="3" height="1" fill="#1c5fd0"/>
<line x1="54.5" y1="373.04" x2="54.5" y2="373.91" stroke="#1c5fd0" stroke-width="1"/>
<rect x="53" y="373.04" width="3" height="1" fill="#1c5fd0"/>
<line x1="56.5" y1="373.77" x2="56.5" y2="374.53" stroke="#1c5fd0" stroke-width="1"/>
<rect x="55" y="373.79" width="3" height="1" fill="#1c5fd0"/>
<line x1="58.5" y1="372.71" x2="58.5" y2="374.24" stroke="#1c5fd0" stroke-width="1"/>
<rect x="57" y="373.27" width="3" height="1" fill="#1c5fd0"/>
<line x1="60.5" y1="373.55" x2="60.5" y2="374.69" stroke="#1c5fd0" stroke-width="1"/>
<rect x="59" y="374.2" width="3" height="1" fill="#1c5fd0"/>
<line x1="63.5" y1="373.87" x2="63.5" y2="374.48" stroke="#e8180c" stroke-width="1"/>
<rect x="62" y="373.9" width="3" height="1" fill="#e8180c"/>
<line x1="65.5" y1="373.42" x2="65.5" y2="373.94" stroke="#e8180c" stroke-width="1"/>
<rect x="64" y="373.87" width="3" height="1" fill="#e8180c"/>
<line x1="67.5" y1="374.2" x2="67.5" y2="374.43" stroke="#e8180c" stroke-width="1"/>
<rect x="66" y="374.22" width="3" height="1" fill="#e8180c"/>
<line x1="69.5" y1="373.32" x2="69.5" y2="374.46" stroke="#e8180c" stroke-width="1"/>
<rect x="68" y="373.42" width="3" height="1" fill="#e8180c"/>
<line x1="72.5" y1="373.17" x2="72.5" y2="374.46" stroke="#1c5fd0" stroke-width="1"/>
<rect x="71" y="373.37" width="3" height="1" fill="#1c5fd0"/>
<line x1="74.5" y1="373.53" x2="74.5" y2="373.79" stroke="#1c5fd0" stroke-width="1"/>
<rect x="73" y="373.57" width="3" height="1" fill="#1c5fd0"/>
<line x1="76.5" y1="373.43" x2="76.5" y2="374.36" stroke="#1c5fd0" stroke-width="1"/>
<rect x="75" y="373.81" width="3" height="1" fill="#1c5fd0"/>
<line x1="78.5" y1="373.91" x2="78.5" y2="374.48" stroke="#1c5fd0" stroke-width="1"/>
<rect x="77" y="374.12" width="3" height="1" fill="#1c5fd0"/>
<line x1="81.5" y1="373.32" x2="81.5" y2="374.11" stroke="#1c5fd0" stroke-width="1"/>
<rect x="80" y="373.61" width="3" height="1" fill="#1c5fd0"/>
<line x1="83.5" y1="372.48" x2="83.5" y2="374.21" stroke="#1c5fd0" stroke-width="1"/>
<rect x="82" y="373.25" width="3" height="1" fill="#1c5fd0"/>
<line x1="85.5" y1="373.64" x2="85.5" y2="374.11" stroke="#e8180c" stroke-width="1"/>
<rect x="84" y="373.71" width="3" height="1" fill="#e8180c"/>
<line x1="87.5" y1="373.63" x2="87.5" y2="373.83" stroke="#1c5fd0" stroke-width="1"/>
<rect x="86" y="373.78" width="3" height="1" fill="#1c5fd0"/>
<line x1="89.5" y1="372.78" x2="89.5" y2="374.38" stroke="#1c5fd0" stroke-width="1"/>
<rect x="88" y="373.56" width="3" height="1" fill="#1c5fd0"/>
<line x1="92.5" y1="373.59" x2="92.5" y2="374.58" stroke="#1c5fd0" stroke-width="1"/>
<rect x="91" y="374.01" width="3" height="1" fill="#1c5fd0"/>
<line x1="94.5" y1="373.69" x2="94.5" y2="374.23" stroke="#1c5fd0" stroke-width="1"/>
<rect x="93" y="373.96" width="3" height="1" fill="#1c5fd0"/>
<line x1="96.5" y1="373.2" x2="96.5" y2="373.95" stroke="#e8180c" stroke-width="1"/>
<rect x="95" y="373.33" width="3" height="1" fill="#e8180c"/>
<line x1="98.5" y1="372.78" x2="98.5" y2="374.02" stroke="#1c5fd0" stroke-width="1"/>
<rect x="97" y="373.36" width="3" height="1" fill="#1c5fd0"/>
<line x1="101.5" y1="372.88" x2="101.5" y2="373.91" stroke="#e8180c" stroke-width="1"/>
<rect x="100" y="373.11" width="3" height="1" fill="#e8180c"/>
<line x1="103.5" y1="371.21" x2="103.5" y2="373.16" stroke="#e8180c" stroke-width="1"/>
<rect x="102" y="371.61" width="3" height="1.25" fill="#e8180c"/>
<line x1="105.5" y1="370.68" x2="105.5" y2="371.04" stroke="#e8180c" stroke-width="1"/>
<rect x="104" y="370.94" width="3" height="1" fill="#e8180c"/>
<line x1="107.5" y1="368.14" x2="107.5" y2="371.15" stroke="#e8180c" stroke-width="1"/>
<rect x="106" y="368.91" width="3" height="2.09" fill="#e8180c"/>
<line x1="110.5" y1="367.03" x2="110.5" y2="368.58" stroke="#e8180c" stroke-width="1"/>
<rect x="109" y="367.39" width="3" height="1.18" fill="#e8180c"/>
<line x1="112.5" y1="366.48" x2="112.5" y2="368.65" stroke="#1c5fd0" stroke-width="1"/>
<rect x="111" y="367.39" width="3" height="1" fill="#1c5fd0"/>
<line x1="114.5" y1="365.28" x2="114.5" y2="367.96" stroke="#e8180c" stroke-width="1"/>
<rect x="113" y="366.23" width="3" height="1.33" fill="#e8180c"/>
<line x1="116.5" y1="364.52" x2="116.5" y2="366.49" stroke="#e8180c" stroke-width="1"/>
<rect x="115" y="364.77" width="3" height="1.51" fill="#e8180c"/>
<line x1="119.5" y1="363.6" x2="119.5" y2="366.28" stroke="#e8180c" stroke-width="1"/>
<rect x="118" y="363.73" width="3" height="1.68" fill="#e8180c"/>
<line x1="121.5" y1="361.54" x2="121.5" y2="364.81" stroke="#e8180c" stroke-width="1"/>
<rect x="120" y="362.17" width="3" height="1.81" fill="#e8180c"/>
<line x1="123.5" y1="361.49" x2="123.5" y2="363.78" stroke="#e8180c" stroke-width="1"/>
<rect x="122" y="361.69" width="3" height="1.03" fill="#e8180c"/>
<line x1="125.5" y1="361.34" x2="125.5" y2="363.06" stroke="#1c5fd0" stroke-width="1"/>
<rect x="124" y="361.5" width="3" height="1" fill="#1c5fd0"/>
<line x1="128.5" y1="360.97" x2="128.5" y2="362.25" stroke="#e8180c" stroke-width="1"/>
<rect x="127" y="361.39" width="3" height="1" fill="#e8180c"/>
<line x1="130.5" y1="360.52" x2="130.5" y2="363.73" stroke="#1c5fd0" stroke-width="1"/>
<rect x="129" y="361.13" width="3" height="1.89" fill="#1c5fd0"/>
<line x1="132.5" y1="362.75" x2="132.5" y2="364.22" stroke="#1c5fd0" stroke-width="1"/>
<rect x="131" y="362.89" width="3" height="1" fill="#1c5fd0"/>
<line x1="134.5" y1="362.72" x2="134.5" y2="363.81" stroke="#e8180c" stroke-width="1"/>
<rect x="133" y="363.04" width="3" height="1" fill="#e8180c"/>
<line x1="136.5" y1="363.05" x2="136.5" y2="363.63" stroke="#1c5fd0" stroke-width="1"/>
<rect x="135" y="363.1" width="3" height="1" fill="#1c5fd0"/>
<line x1="139.5" y1="362.12" x2="139.5" y2="363.76" stroke="#1c5fd0" stroke-width="1"/>
<rect x="138" y="362.95" width="3" height="1" fill="#1c5fd0"/>
<line x1="141.5" y1="362.72" x2="141.5" y2="364.29" stroke="#1c5fd0" stroke-width="1"/>
<rect x="140" y="363.16" width="3" height="1.08" fill="#1c5fd0"/>
<line x1="143.5" y1="362.39" x2="143.5" y2="364.14" stroke="#e8180c" stroke-width="1"/>
<rect x="142" y="363.29" width="3" height="1" fill="#e8180c"/>
<line x1="145.5" y1="363.21" x2="145.5" y2="364.33" stroke="#1c5fd0" stroke-width="1"/>
<rect x="144" y="363.33" width="3" height="1" fill="#1c5fd0"/>
<line x1="148.5" y1="362.47" x2="148.5" y2="363.66" stroke="#e8180c" stroke-width="1"/>
<rect x="147" y="362.88" width="3" height="1" fill="#e8180c"/>
<line x1="150.5" y1="362.22" x2="150.5" y2="363.74" stroke="#1c5fd0" stroke-width="1"/>
<rect x="149" y="363.4" width="3" height="1" fill="#1c5fd0"/>
<line x1="152.5" y1="363.28" x2="152.5" y2="364.63" stroke="#1c5fd0" stroke-width="1"/>
<rect x="151" y="363.6" width="3" height="1" fill="#1c5fd0"/>
<line x1="154.5" y1="363.87" x2="154.5" y2="364.66" stroke="#1c5fd0" stroke-width="1"/>
<rect x="153" y="364.22" width="3" height="1" fill="#1c5fd0"/>
<line x1="157.5" y1="363.47" x2="157.5" y2="365.08" stroke="#e8180c" stroke-width="1"/>
<rect x="156" y="363.87" width="3" height="1.19" fill="#e8180c"/>
<line x1="159.5" y1="363.4" x2="159.5" y2="366.04" stroke="#1c5fd0" stroke-width="1"/>
<rect x="158" y="363.49" width="3" height="2.37" fill="#1c5fd0"/>
<line x1="161.5" y1="365.8" x2="161.5" y2="367.08" stroke="#e8180c" stroke-width="1"/>
<rect x="160" y="365.97" width="3" height="1" fill="#e8180c"/>
<line x1="163.5" y1="364.22" x2="163.5" y2="366.62" stroke="#e8180c" stroke-width="1"/>
<rect x="162" y="365.57" width="3" height="1" fill="#e8180c"/>
<line x1="166.5" y1="365.35" x2="166.5" y2="366.15" stroke="#e8180c" stroke-width="1"/>
<rect x="165" y="365.45" width="3" height="1" fill="#e8180c"/>
<line x1="168.5" y1="364.81" x2="168.5" y2="366.65" stroke="#1c5fd0" stroke-width="1"/>
<rect x="167" y="365.98" width="3" height="1" fill="#1c5fd0"/>
<line x1="170.5" y1="365.64" x2="170.5" y2="369.29" stroke="#1c5fd0" stroke-width="1"/>
<rect x="169" y="365.97" width="3" height="1.92" fill="#1c5fd0"/>
<line x1="172.5" y1="367.67" x2="172.5" y2="368.98" stroke="#1c5fd0" stroke-width="1"/>
<rect x="171" y="367.81" width="3" height="1" fill="#1c5fd0"/>
<line x1="174.5" y1="365.95" x2="174.5" y2="369.03" stroke="#e8180c" stroke-width="1"/>
<rect x="173" y="366.86" width="3" height="1.48" fill="#e8180c"/>
<line x1="177.5" y1="365.13" x2="177.5" y2="367.49" stroke="#1c5fd0" stroke-width="1"/>
<rect x="176" y="367.02" width="3" height="1" fill="#1c5fd0"/>
<line x1="179.5" y1="366.4" x2="179.5" y2="368.39" stroke="#e8180c" stroke-width="1"/>
<rect x="178" y="366.91" width="3" height="1" fill="#e8180c"/>
<line x1="181.5" y1="365.45" x2="181.5" y2="367.2" stroke="#e8180c" stroke-width="1"/>
<rect x="180" y="365.6" width="3" height="1.31" fill="#e8180c"/>
<line x1="183.5" y1="365.39" x2="183.5" y2="366.33" stroke="#e8180c" stroke-width="1"/>
<rect x="182" y="365.75" width="3" height="1" fill="#e8180c"/>
<line x1="186.5" y1="365.69" x2="186.5" y2="366.62" stroke="#1c5fd0" stroke-width="1"/>
<rect x="185" y="365.73" width="3" height="1" fill="#1c5fd0"/>
<line x1="188.5" y1="365.86" x2="188.5" y2="366.88" stroke="#1c5fd0" stroke-width="1"/>
<rect x="187" y="366.13" width="3" height="1" fill="#1c5fd0"/>
<line x1="190.5" y1="366.44" x2="190.5" y2="367.68" stroke="#1c5fd0" stroke-width="1"/>
<rect x="189" y="366.53" width="3" height="1" fill="#1c5fd0"/>
<line x1="192.5" y1="366.18" x2="192.5" y2="367.16" stroke="#1c5fd0" stroke-width="1"/>
<rect x="191" y="366.44" width="3" height="1" fill="#1c5fd0"/>
<line x1="195.5" y1="365.98" x2="195.5" y2="367.85" stroke="#1c5fd0" stroke-width="1"/>
<rect x="194" y="366.17" width="3" height="1" fill="#1c5fd0"/>
<line x1="197.5" y1="366.12" x2="197.5" y2="367.43" stroke="#1c5fd0" stroke-width="1"/>
<rect x="196" y="366.3" width="3" height="1" fill="#1c5fd0"/>
<line x1="199.5" y1="366.74" x2="199.5" y2="367.71" stroke="#e8180c" stroke-width="1"/>
<rect x="198" y="366.82" width="3" height="1" fill="#e8180c"/>
<line x1="201.5" y1="366.4" x2="201.5" y2="367.76" stroke="#1c5fd0" stroke-width="1"/>
<rect x="200" y="366.41" width="3" height="1.19" fill="#1c5fd0"/>
<line x1="204.5" y1="365.51" x2="204.5" y2="367.85" stroke="#e8180c" stroke-width="1"/>
<rect x="203" y="365.56" width="3" height="1.9" fill="#e8180c"/>
<line x1="206.5" y1="364.99" x2="206.5" y2="366.99" stroke="#e8180c" stroke-width="1"/>
<rect x="205" y="365.01" width="3" height="1" fill="#e8180c"/>
<line x1="208.5" y1="364.1" x2="208.5" y2="366" stroke="#e8180c" stroke-width="1"/>
<rect x="207" y="364.51" width="3" height="1" fill="#e8180c"/>
<line x1="210.5" y1="364.6" x2="210.5" y2="366.02" stroke="#1c5fd0" stroke-width="1"/>
<rect x="209" y="364.68" width="3" height="1" fill="#1c5fd0"/>
<line x1="212.5" y1="363.83" x2="212.5" y2="366.24" stroke="#e8180c" stroke-width="1"/>
<rect x="211" y="364.27" width="3" height="1" fill="#e8180c"/>
<line x1="215.5" y1="362.7" x2="215.5" y2="364.7" stroke="#e8180c" stroke-width="1"/>
<rect x="214" y="363.46" width="3" height="1" fill="#e8180c"/>
<line x1="217.5" y1="363.32" x2="217.5" y2="364.83" stroke="#1c5fd0" stroke-width="1"/>
<rect x="216" y="363.36" width="3" height="1.4" fill="#1c5fd0"/>
<line x1="219.5" y1="362.4" x2="219.5" y2="364.67" stroke="#e8180c" stroke-width="1"/>
<rect x="218" y="363.87" width="3" height="1" fill="#e8180c"/>
<line x1="221.5" y1="362.97" x2="221.5" y2="364.8" stroke="#e8180c" stroke-width="1"/>
<rect x="220" y="363.28" width="3" height="1" fill="#e8180c"/>
<line x1="224.5" y1="362.7" x2="224.5" y2="364.77" stroke="#1c5fd0" stroke-width="1"/>
<rect x="223" y="363.05" width="3" height="1.55" fill="#1c5fd0"/>
<line x1="226.5" y1="362.24" x2="226.5" y2="364.84" stroke="#e8180c" stroke-width="1"/>
<rect x="225" y="363.22" width="3" height="1.14" fill="#e8180c"/>
<line x1="228.5" y1="363.45" x2="228.5" y2="364.3" stroke="#e8180c" stroke-width="1"/>
<rect x="227" y="363.88" width="3" height="1" fill="#e8180c"/>
<line x1="230.5" y1="363.54" x2="230.5" y2="364.41" stroke="#1c5fd0" stroke-width="1"/>
<rect x="229" y="364.07" width="3" height="1" fill="#1c5fd0"/>
<line x1="233.5" y1="363.7" x2="233.5" y2="365.52" stroke="#e8180c" stroke-width="1"/>
<rect x="232" y="364.03" width="3" height="1" fill="#e8180c"/>
<line x1="235.5" y1="363.52" x2="235.5" y2="364.8" stroke="#e8180c" stroke-width="1"/>
<rect x="234" y="363.75" width="3" height="1" fill="#e8180c"/>
<line x1="237.5" y1="362.82" x2="237.5" y2="365.45" stroke="#1c5fd0" stroke-width="1"/>
<rect x="236" y="363.62" width="3" height="1" fill="#1c5fd0"/>
<line x1="239.5" y1="361.61" x2="239.5" y2="363.28" stroke="#1c5fd0" stroke-width="1"/>
<rect x="238" y="362.87" width="3" height="1" fill="#1c5fd0"/>
<line x1="242.5" y1="362.46" x2="242.5" y2="364.69" stroke="#1c5fd0" stroke-width="1"/>
<rect x="241" y="363.05" width="3" height="1.22" fill="#1c5fd0"/>
<line x1="244.5" y1="363.76" x2="244.5" y2="365.18" stroke="#1c5fd0" stroke-width="1"/>
<rect x="243" y="364.4" width="3" height="1" fill="#1c5fd0"/>
<line x1="246.5" y1="364" x2="246.5" y2="365.99" stroke="#1c5fd0" stroke-width="1"/>
<rect x="245" y="364.65" width="3" height="1" fill="#1c5fd0"/>
<line x1="248.5" y1="364.27" x2="248.5" y2="367" stroke="#1c5fd0" stroke-width="1"/>
<rect x="247" y="365.38" width="3" height="1.47" fill="#1c5fd0"/>
<line x1="250.5" y1="366.78" x2="250.5" y2="368.07" stroke="#1c5fd0" stroke-width="1"/>
<rect x="249" y="367.04" width="3" height="1" fill="#1c5fd0"/>
<line x1="253.5" y1="366.27" x2="253.5" y2="368.08" stroke="#e8180c" stroke-width="1"/>
<rect x="252" y="366.5" width="3" height="1.55" fill="#e8180c"/>
<line x1="255.5" y1="365.93" x2="255.5" y2="367.24" stroke="#e8180c" stroke-width="1"/>
<rect x="254" y="365.94" width="3" height="1" fill="#e8180c"/>
<line x1="257.5" y1="364.42" x2="257.5" y2="366.96" stroke="#1c5fd0" stroke-width="1"/>
<rect x="256" y="365.41" width="3" height="1.09" fill="#1c5fd0"/>
<line x1="259.5" y1="364.88" x2="259.5" y2="367.8" stroke="#e8180c" stroke-width="1"/>
<rect x="258" y="366.34" width="3" height="1" fill="#e8180c"/>
<line x1="262.5" y1="365.06" x2="262.5" y2="366.98" stroke="#e8180c" stroke-width="1"/>
<rect x="261" y="365.08" width="3" height="1.57" fill="#e8180c"/>
<line x1="264.5" y1="364.17" x2="264.5" y2="365.72" stroke="#e8180c" stroke-width="1"/>
<rect x="263" y="364.46" width="3" height="1.25" fill="#e8180c"/>
<line x1="266.5" y1="363.72" x2="266.5" y2="366.07" stroke="#e8180c" stroke-width="1"/>
<rect x="265" y="363.91" width="3" height="1.4" fill="#e8180c"/>
<line x1="268.5" y1="362.64" x2="268.5" y2="364.93" stroke="#e8180c" stroke-width="1"/>
<rect x="267" y="363.16" width="3" height="1.64" fill="#e8180c"/>
<line x1="271.5" y1="362.65" x2="271.5" y2="365.4" stroke="#1c5fd0" stroke-width="1"/>
<rect x="270" y="362.93" width="3" height="1.66" fill="#1c5fd0"/>
<line x1="273.5" y1="362.97" x2="273.5" y2="364.95" stroke="#e8180c" stroke-width="1"/>
<rect x="272" y="363.53" width="3" height="1.16" fill="#e8180c"/>
<line x1="275.5" y1="362.68" x2="275.5" y2="365.1" stroke="#1c5fd0" stroke-width="1"/>
<rect x="274" y="363.18" width="3" height="1.85" fill="#1c5fd0"/>
<line x1="277.5" y1="363.96" x2="277.5" y2="365.14" stroke="#1c5fd0" stroke-width="1"/>
<rect x="276" y="364.23" width="3" height="1" fill="#1c5fd0"/>
<line x1="280.5" y1="364.08" x2="280.5" y2="365.7" stroke="#e8180c" stroke-width="1"/>
<rect x="279" y="364.58" width="3" height="1" fill="#e8180c"/>
<line x1="282.5" y1="363.87" x2="282.5" y2="364.92" stroke="#1c5fd0" stroke-width="1"/>
<rect x="281" y="364.14" width="3" height="1" fill="#1c5fd0"/>
<line x1="284.5" y1="363.67" x2="284.5" y2="364.86" stroke="#e8180c" stroke-width="1"/>
<rect x="283" y="364.52" width="3" height="1" fill="#e8180c"/>
<line x1="286.5" y1="363.57" x2="286.5" y2="364.82" stroke="#e8180c" stroke-width="1"/>
<rect x="285" y="364.13" width="3" height="1" fill="#e8180c"/>
<line x1="289.5" y1="363.21" x2="289.5" y2="364.43" stroke="#e8180c" stroke-width="1"/>
<rect x="288" y="363.59" width="3" height="1" fill="#e8180c"/>
<line x1="291.5" y1="362.85" x2="291.5" y2="364.08" stroke="#e8180c" stroke-width="1"/>
<rect x="290" y="363.08" width="3" height="1" fill="#e8180c"/>
<line x1="293.5" y1="362.59" x2="293.5" y2="363.53" stroke="#e8180c" stroke-width="1"/>
<rect x="292" y="362.71" width="3" height="1" fill="#e8180c"/>
<line x1="295.5" y1="362.14" x2="295.5" y2="363.21" stroke="#1c5fd0" stroke-width="1"/>
<rect x="294" y="362.33" width="3" height="1" fill="#1c5fd0"/>
<line x1="297.5" y1="361.72" x2="297.5" y2="363.06" stroke="#1c5fd0" stroke-width="1"/>
<rect x="296" y="362.59" width="3" height="1" fill="#1c5fd0"/>
<line x1="300.5" y1="361.8" x2="300.5" y2="363.99" stroke="#1c5fd0" stroke-width="1"/>
<rect x="299" y="362.38" width="3" height="1" fill="#1c5fd0"/>
<line x1="302.5" y1="361.9" x2="302.5" y2="363.3" stroke="#1c5fd0" stroke-width="1"/>
<rect x="301" y="362.69" width="3" height="1" fill="#1c5fd0"/>
<line x1="304.5" y1="360.98" x2="304.5" y2="364.25" stroke="#1c5fd0" stroke-width="1"/>
<rect x="303" y="362.46" width="3" height="1" fill="#1c5fd0"/>
<line x1="306.5" y1="362.44" x2="306.5" y2="362.83" stroke="#e8180c" stroke-width="1"/>
<rect x="305" y="362.77" width="3" height="1" fill="#e8180c"/>
<line x1="309.5" y1="360.62" x2="309.5" y2="363.16" stroke="#e8180c" stroke-width="1"/>
<rect x="308" y="362.08" width="3" height="1.02" fill="#e8180c"/>
<line x1="311.5" y1="362.37" x2="311.5" y2="365.01" stroke="#1c5fd0" stroke-width="1"/>
<rect x="310" y="362.92" width="3" height="1" fill="#1c5fd0"/>
<line x1="313.5" y1="362.98" x2="313.5" y2="365.37" stroke="#1c5fd0" stroke-width="1"/>
<rect x="312" y="363.34" width="3" height="1.94" fill="#1c5fd0"/>
<line x1="315.5" y1="364.62" x2="315.5" y2="367.08" stroke="#1c5fd0" stroke-width="1"/>
<rect x="314" y="364.69" width="3" height="1.54" fill="#1c5fd0"/>
<line x1="318.5" y1="365.87" x2="318.5" y2="367.45" stroke="#e8180c" stroke-width="1"/>
<rect x="317" y="366.58" width="3" height="1" fill="#e8180c"/>
<line x1="320.5" y1="365.86" x2="320.5" y2="367.25" stroke="#e8180c" stroke-width="1"/>
<rect x="319" y="366.38" width="3" height="1" fill="#e8180c"/>
<line x1="322.5" y1="364.75" x2="322.5" y2="367.45" stroke="#1c5fd0" stroke-width="1"/>
<rect x="321" y="366.09" width="3" height="1.19" fill="#1c5fd0"/>
<line x1="324.5" y1="366.44" x2="324.5" y2="367.71" stroke="#1c5fd0" stroke-width="1"/>
<rect x="323" y="366.87" width="3" height="1" fill="#1c5fd0"/>
<line x1="327.5" y1="364.93" x2="327.5" y2="368.59" stroke="#e8180c" stroke-width="1"/>
<rect x="326" y="365.03" width="3" height="3.25" fill="#e8180c"/>
<line x1="329.5" y1="363.23" x2="329.5" y2="365.99" stroke="#1c5fd0" stroke-width="1"/>
<rect x="328" y="363.82" width="3" height="1.96" fill="#1c5fd0"/>
<line x1="331.5" y1="361.71" x2="331.5" y2="366.09" stroke="#e8180c" stroke-width="1"/>
<rect x="330" y="362.37" width="3" height="3.4" fill="#e8180c"/>
<line x1="333.5" y1="357.1" x2="333.5" y2="361.88" stroke="#e8180c" stroke-width="1"/>
<rect x="332" y="357.87" width="3" height="3.75" fill="#e8180c"/>
<line x1="335.5" y1="354.46" x2="335.5" y2="359.14" stroke="#e8180c" stroke-width="1"/>
<rect x="334" y="354.65" width="3" height="3.66" fill="#e8180c"/>
<line x1="338.5" y1="351.86" x2="338.5" y2="356.69" stroke="#e8180c" stroke-width="1"/>
<rect x="337" y="353.38" width="3" height="2.89" fill="#e8180c"/>
<line x1="340.5" y1="352.57" x2="340.5" y2="355.58" stroke="#e8180c" stroke-width="1"/>
<rect x="339" y="352.88" width="3" height="1.15" fill="#e8180c"/>
<line x1="342.5" y1="351.7" x2="342.5" y2="355.09" stroke="#e8180c" stroke-width="1"/>
<rect x="341" y="351.89" width="3" height="2.25" fill="#e8180c"/>
<line x1="344.5" y1="350.5" x2="344.5" y2="356.95" stroke="#1c5fd0" stroke-width="1"/>
<rect x="343" y="351.13" width="3" height="1.86" fill="#1c5fd0"/>
<line x1="347.5" y1="350.46" x2="347.5" y2="354.96" stroke="#1c5fd0" stroke-width="1"/>
<rect x="346" y="351.1" width="3" height="3.84" fill="#1c5fd0"/>
<line x1="349.5" y1="349.82" x2="349.5" y2="356.36" stroke="#e8180c" stroke-width="1"/>
<rect x="348" y="350.43" width="3" height="4.95" fill="#e8180c"/>
<line x1="351.5" y1="350.62" x2="351.5" y2="355.19" stroke="#1c5fd0" stroke-width="1"/>
<rect x="350" y="352.26" width="3" height="1.6" fill="#1c5fd0"/>
<line x1="353.5" y1="352.11" x2="353.5" y2="356.27" stroke="#e8180c" stroke-width="1"/>
<rect x="352" y="354.65" width="3" height="1" fill="#e8180c"/>
<line x1="356.5" y1="348.11" x2="356.5" y2="359.26" stroke="#e8180c" stroke-width="1"/>
<rect x="355" y="349.71" width="3" height="7.08" fill="#e8180c"/>
<line x1="358.5" y1="334.84" x2="358.5" y2="349.67" stroke="#e8180c" stroke-width="1"/>
<rect x="357" y="338.89" width="3" height="10.18" fill="#e8180c"/>
<line x1="360.5" y1="331.34" x2="360.5" y2="340.99" stroke="#e8180c" stroke-width="1"/>
<rect x="359" y="331.5" width="3" height="9" fill="#e8180c"/>
<line x1="362.5" y1="331.08" x2="362.5" y2="336.31" stroke="#e8180c" stroke-width="1"/>
<rect x="361" y="333.04" width="3" height="2.74" fill="#e8180c"/>
<line x1="365.5" y1="321.22" x2="365.5" y2="336.95" stroke="#e8180c" stroke-width="1"/>
<rect x="364" y="321.52" width="3" height="12.66" fill="#e8180c"/>
<line x1="367.5" y1="311.26" x2="367.5" y2="321.75" stroke="#e8180c" stroke-width="1"/>
<rect x="366" y="314.97" width="3" height="4.38" fill="#e8180c"/>
<line x1="369.5" y1="315.78" x2="369.5" y2="326.17" stroke="#1c5fd0" stroke-width="1"/>
<rect x="368" y="315.85" width="3" height="9.34" fill="#1c5fd0"/>
<line x1="371.5" y1="324.31" x2="371.5" y2="332.27" stroke="#e8180c" stroke-width="1"/>
<rect x="370" y="324.96" width="3" height="1.08" fill="#e8180c"/>
<line x1="373.5" y1="320.93" x2="373.5" y2="329.56" stroke="#e8180c" stroke-width="1"/>
<rect x="372" y="321.02" width="3" height="4.84" fill="#e8180c"/>
<line x1="376.5" y1="316.72" x2="376.5" y2="321.73" stroke="#e8180c" stroke-width="1"/>
<rect x="375" y="318.73" width="3" height="2.35" fill="#e8180c"/>
<line x1="378.5" y1="301.85" x2="378.5" y2="314.82" stroke="#1c5fd0" stroke-width="1"/>
<rect x="377" y="312.64" width="3" height="1.32" fill="#1c5fd0"/>
<line x1="380.5" y1="313.88" x2="380.5" y2="330.13" stroke="#e8180c" stroke-width="1"/>
<rect x="379" y="317.76" width="3" height="1.87" fill="#e8180c"/>
<line x1="382.5" y1="305.43" x2="382.5" y2="327.53" stroke="#e8180c" stroke-width="1"/>
<rect x="381" y="306.01" width="3" height="19.18" fill="#e8180c"/>
<line x1="385.5" y1="299.33" x2="385.5" y2="317.61" stroke="#e8180c" stroke-width="1"/>
<rect x="384" y="301.93" width="3" height="5.1" fill="#e8180c"/>
<line x1="387.5" y1="297.13" x2="387.5" y2="299.92" stroke="#1c5fd0" stroke-width="1"/>
<rect x="386" y="298.92" width="3" height="1" fill="#1c5fd0"/>
<line x1="389.5" y1="296.64" x2="389.5" y2="304.27" stroke="#e8180c" stroke-width="1"/>
<rect x="388" y="299.72" width="3" height="2.21" fill="#e8180c"/>
<line x1="391.5" y1="296.88" x2="391.5" y2="326.04" stroke="#1c5fd0" stroke-width="1"/>
<rect x="390" y="298.92" width="3" height="18.16" fill="#1c5fd0"/>
<line x1="394.5" y1="306.2" x2="394.5" y2="320.54" stroke="#e8180c" stroke-width="1"/>
<rect x="393" y="307.11" width="3" height="10.06" fill="#e8180c"/>
<line x1="396.5" y1="309.92" x2="396.5" y2="322.23" stroke="#1c5fd0" stroke-width="1"/>
<rect x="395" y="310.04" width="3" height="9.8" fill="#1c5fd0"/>
<line x1="398.5" y1="306.26" x2="398.5" y2="327.9" stroke="#e8180c" stroke-width="1"/>
<rect x="397" y="311.55" width="3" height="7.87" fill="#e8180c"/>
<line x1="400.5" y1="306.35" x2="400.5" y2="317.98" stroke="#e8180c" stroke-width="1"/>
<rect x="399" y="314.27" width="3" height="1" fill="#e8180c"/>
<line x1="403.5" y1="280.59" x2="403.5" y2="314.02" stroke="#e8180c" stroke-width="1"/>
<rect x="402" y="285.66" width="3" height="23.88" fill="#e8180c"/>
<line x1="405.5" y1="272" x2="405.5" y2="293.52" stroke="#e8180c" stroke-width="1"/>
<rect x="404" y="275.7" width="3" height="12.51" fill="#e8180c"/>
<line x1="407.5" y1="272" x2="407.5" y2="285.93" stroke="#1c5fd0" stroke-width="1"/>
<rect x="406" y="279.79" width="3" height="1" fill="#1c5fd0"/>
<line x1="409.5" y1="272" x2="409.5" y2="280.68" stroke="#1c5fd0" stroke-width="1"/>
<rect x="408" y="272" width="3" height="4.61" fill="#1c5fd0"/>
<line x1="411.5" y1="273.68" x2="411.5" y2="284.35" stroke="#e8180c" stroke-width="1"/>
<rect x="410" y="275.07" width="3" height="4.78" fill="#e8180c"/>
<line x1="414.5" y1="272" x2="414.5" y2="287.2" stroke="#1c5fd0" stroke-width="1"/>
<rect x="413" y="272" width="3" height="8.99" fill="#1c5fd0"/>
<line x1="416.5" y1="272.14" x2="416.5" y2="286.01" stroke="#1c5fd0" stroke-width="1"/>
<rect x="415" y="275.37" width="3" height="9.41" fill="#1c5fd0"/>
<line x1="418.5" y1="265.61" x2="418.5" y2="286.9" stroke="#e8180c" stroke-width="1"/>
<rect x="417" y="267.61" width="3" height="17.23" fill="#e8180c"/>
<line x1="420.5" y1="237.92" x2="420.5" y2="286.71" stroke="#e8180c" stroke-width="1"/>
<rect x="419" y="251.12" width="3" height="19.79" fill="#e8180c"/>
<line x1="423.5" y1="233.04" x2="423.5" y2="258.1" stroke="#e8180c" stroke-width="1"/>
<rect x="422" y="238.92" width="3" height="19" fill="#e8180c"/>
<line x1="425.5" y1="200.49" x2="425.5" y2="239.71" stroke="#e8180c" stroke-width="1"/>
<rect x="424" y="205.68" width="3" height="32.91" fill="#e8180c"/>
<line x1="427.5" y1="205.18" x2="427.5" y2="240.4" stroke="#1c5fd0" stroke-width="1"/>
<rect x="426" y="211.24" width="3" height="11.07" fill="#1c5fd0"/>
<line x1="429.5" y1="194.35" x2="429.5" y2="228.5" stroke="#e8180c" stroke-width="1"/>
<rect x="428" y="199.04" width="3" height="24.35" fill="#e8180c"/>
<line x1="432.5" y1="198.26" x2="432.5" y2="211.34" stroke="#1c5fd0" stroke-width="1"/>
<rect x="431" y="199.92" width="3" height="2.53" fill="#1c5fd0"/>
<line x1="434.5" y1="185.3" x2="434.5" y2="208.14" stroke="#e8180c" stroke-width="1"/>
<rect x="433" y="192.65" width="3" height="9.69" fill="#e8180c"/>
<line x1="436.5" y1="166.3" x2="436.5" y2="197.11" stroke="#e8180c" stroke-width="1"/>
<rect x="435" y="180.1" width="3" height="10.95" fill="#e8180c"/>
<line x1="438.5" y1="169.07" x2="438.5" y2="191.46" stroke="#e8180c" stroke-width="1"/>
<rect x="437" y="177.7" width="3" height="5.25" fill="#e8180c"/>
<line x1="441.5" y1="145.98" x2="441.5" y2="172.44" stroke="#1c5fd0" stroke-width="1"/>
<rect x="440" y="165.23" width="3" height="6.96" fill="#1c5fd0"/>
<line x1="443.5" y1="155.65" x2="443.5" y2="197.93" stroke="#1c5fd0" stroke-width="1"/>
<rect x="442" y="167.52" width="3" height="22.25" fill="#1c5fd0"/>
<line x1="445.5" y1="167.82" x2="445.5" y2="195.22" stroke="#1c5fd0" stroke-width="1"/>
<rect x="444" y="180.64" width="3" height="8.09" fill="#1c5fd0"/>
<line x1="447.5" y1="152.74" x2="447.5" y2="186.44" stroke="#e8180c" stroke-width="1"/>
<rect x="446" y="168.69" width="3" height="16.6" fill="#e8180c"/>
<line x1="449.5" y1="172.26" x2="449.5" y2="195.87" stroke="#1c5fd0" stroke-width="1"/>
<rect x="448" y="175.85" width="3" height="13.33" fill="#1c5fd0"/>
<line x1="452.5" y1="181.18" x2="452.5" y2="204.74" stroke="#1c5fd0" stroke-width="1"/>
<rect x="451" y="195.7" width="3" height="2.99" fill="#1c5fd0"/>
<line x1="454.5" y1="177.62" x2="454.5" y2="210.11" stroke="#1c5fd0" stroke-width="1"/>
<rect x="453" y="198.54" width="3" height="1" fill="#1c5fd0"/>
<line x1="456.5" y1="162.27" x2="456.5" y2="200.76" stroke="#e8180c" stroke-width="1"/>
<rect x="455" y="169.06" width="3" height="27.15" fill="#e8180c"/>
<line x1="458.5" y1="148.59" x2="458.5" y2="181.12" stroke="#1c5fd0" stroke-width="1"/>
<rect x="457" y="155.57" width="3" height="11.44" fill="#1c5fd0"/>
<line x1="461.5" y1="149.96" x2="461.5" y2="168.53" stroke="#e8180c" stroke-width="1"/>
<rect x="460" y="156.01" width="3" height="10.17" fill="#e8180c"/>
<line x1="463.5" y1="138.4" x2="463.5" y2="193.5" stroke="#1c5fd0" stroke-width="1"/>
<rect x="462" y="152.26" width="3" height="25.99" fill="#1c5fd0"/>
<line x1="465.5" y1="166.15" x2="465.5" y2="185.09" stroke="#e8180c" stroke-width="1"/>
<rect x="464" y="168.82" width="3" height="9.93" fill="#e8180c"/>
<line x1="467.5" y1="162.8" x2="467.5" y2="194.89" stroke="#1c5fd0" stroke-width="1"/>
<rect x="466" y="171.38" width="3" height="1.68" fill="#1c5fd0"/>
<line x1="470.5" y1="144.15" x2="470.5" y2="186.69" stroke="#e8180c" stroke-width="1"/>
<rect x="469" y="148.09" width="3" height="19.82" fill="#e8180c"/>
<line x1="472.5" y1="124.84" x2="472.5" y2="131.04" stroke="#e8180c" stroke-width="1"/>
<rect x="471" y="125.86" width="3" height="4.74" fill="#e8180c"/>
<line x1="474.5" y1="133.34" x2="474.5" y2="150.91" stroke="#e8180c" stroke-width="1"/>
<rect x="473" y="134.07" width="3" height="2.83" fill="#e8180c"/>
<line x1="476.5" y1="94.66" x2="476.5" y2="133.85" stroke="#e8180c" stroke-width="1"/>
<rect x="475" y="94.66" width="3" height="38.73" fill="#e8180c"/>
<line x1="479.5" y1="94.66" x2="479.5" y2="126.73" stroke="#1c5fd0" stroke-width="1"/>
<rect x="478" y="94.66" width="3" height="11.93" fill="#1c5fd0"/>
<line x1="481.5" y1="94.66" x2="481.5" y2="136.11" stroke="#1c5fd0" stroke-width="1"/>
<rect x="480" y="113.49" width="3" height="20.22" fill="#1c5fd0"/>
<line x1="483.5" y1="129.58" x2="483.5" y2="167.81" stroke="#1c5fd0" stroke-width="1"/>
<rect x="482" y="141.04" width="3" height="22.75" fill="#1c5fd0"/>
<line x1="485.5" y1="121.33" x2="485.5" y2="163.05" stroke="#e8180c" stroke-width="1"/>
<rect x="484" y="136.3" width="3" height="25.01" fill="#e8180c"/>
<line x1="488.5" y1="114.71" x2="488.5" y2="156.89" stroke="#1c5fd0" stroke-width="1"/>
<rect x="487" y="122.74" width="3" height="32.36" fill="#1c5fd0"/>
<line x1="490.5" y1="152.57" x2="490.5" y2="156.38" stroke="#1c5fd0" stroke-width="1"/>
<rect x="489" y="153.98" width="3" height="1.84" fill="#1c5fd0"/>
<line x1="492.5" y1="139.2" x2="492.5" y2="179.37" stroke="#e8180c" stroke-width="1"/>
<rect x="491" y="140.36" width="3" height="9.02" fill="#e8180c"/>
<line x1="494.5" y1="129.92" x2="494.5" y2="158.84" stroke="#1c5fd0" stroke-width="1"/>
<rect x="493" y="140.56" width="3" height="10.49" fill="#1c5fd0"/>
<line x1="496.5" y1="150.54" x2="496.5" y2="182.43" stroke="#e8180c" stroke-width="1"/>
<rect x="495" y="152.31" width="3" height="4.21" fill="#e8180c"/>
<line x1="499.5" y1="150.22" x2="499.5" y2="202.82" stroke="#1c5fd0" stroke-width="1"/>
<rect x="498" y="161.65" width="3" height="26.82" fill="#1c5fd0"/>
<line x1="501.5" y1="157.64" x2="501.5" y2="210.62" stroke="#e8180c" stroke-width="1"/>
<rect x="500" y="177.7" width="3" height="29.03" fill="#e8180c"/>
<line x1="503.5" y1="156.66" x2="503.5" y2="198.72" stroke="#e8180c" stroke-width="1"/>
<rect x="502" y="176.7" width="3" height="6.11" fill="#e8180c"/>
<line x1="505.5" y1="163.47" x2="505.5" y2="181.99" stroke="#1c5fd0" stroke-width="1"/>
<rect x="504" y="171.73" width="3" height="6.34" fill="#1c5fd0"/>
<line x1="508.5" y1="161.74" x2="508.5" y2="209.52" stroke="#1c5fd0" stroke-width="1"/>
<rect x="507" y="175.43" width="3" height="14.49" fill="#1c5fd0"/>
<line x1="510.5" y1="180.68" x2="510.5" y2="194.71" stroke="#1c5fd0" stroke-width="1"/>
<rect x="509" y="182.11" width="3" height="10.77" fill="#1c5fd0"/>
<line x1="512.5" y1="164.84" x2="512.5" y2="190.72" stroke="#1c5fd0" stroke-width="1"/>
<rect x="511" y="179.42" width="3" height="8.12" fill="#1c5fd0"/>
<line x1="514.5" y1="181.3" x2="514.5" y2="202.03" stroke="#1c5fd0" stroke-width="1"/>
<rect x="513" y="184.04" width="3" height="17.49" fill="#1c5fd0"/>
<line x1="517.5" y1="183.79" x2="517.5" y2="210.33" stroke="#e8180c" stroke-width="1"/>
<rect x="516" y="196.75" width="3" height="8.37" fill="#e8180c"/>
<line x1="519.5" y1="171.6" x2="519.5" y2="213.62" stroke="#e8180c" stroke-width="1"/>
<rect x="518" y="184.29" width="3" height="23.77" fill="#e8180c"/>
<line x1="521.5" y1="180.27" x2="521.5" y2="208.85" stroke="#1c5fd0" stroke-width="1"/>
<rect x="520" y="193.66" width="3" height="6.63" fill="#1c5fd0"/>
<line x1="523.5" y1="194.98" x2="523.5" y2="221.36" stroke="#e8180c" stroke-width="1"/>
<rect x="522" y="211.64" width="3" height="2.38" fill="#e8180c"/>
<line x1="526.5" y1="172.98" x2="526.5" y2="203.1" stroke="#e8180c" stroke-width="1"/>
<rect x="525" y="185.66" width="3" height="11.97" fill="#e8180c"/>
<line x1="528.5" y1="180.39" x2="528.5" y2="194.97" stroke="#1c5fd0" stroke-width="1"/>
<rect x="527" y="182.39" width="3" height="10.88" fill="#1c5fd0"/>
<line x1="530.5" y1="154.8" x2="530.5" y2="199.08" stroke="#e8180c" stroke-width="1"/>
<rect x="529" y="171.22" width="3" height="14.2" fill="#e8180c"/>
<line x1="532.5" y1="170.87" x2="532.5" y2="189.21" stroke="#e8180c" stroke-width="1"/>
<rect x="531" y="176.85" width="3" height="5.87" fill="#e8180c"/>
<line x1="534.5" y1="171.11" x2="534.5" y2="183.11" stroke="#1c5fd0" stroke-width="1"/>
<rect x="533" y="173.9" width="3" height="8.89" fill="#1c5fd0"/>
<line x1="537.5" y1="170.34" x2="537.5" y2="198.37" stroke="#e8180c" stroke-width="1"/>
<rect x="536" y="175.11" width="3" height="12.97" fill="#e8180c"/>
<line x1="539.5" y1="165.39" x2="539.5" y2="172.54" stroke="#e8180c" stroke-width="1"/>
<rect x="538" y="166.52" width="3" height="2.4" fill="#e8180c"/>
<line x1="541.5" y1="164" x2="541.5" y2="180.92" stroke="#1c5fd0" stroke-width="1"/>
<rect x="540" y="164" width="3" height="9.88" fill="#1c5fd0"/>
<line x1="543.5" y1="164" x2="543.5" y2="174.73" stroke="#1c5fd0" stroke-width="1"/>
<rect x="542" y="164.48" width="3" height="1" fill="#1c5fd0"/>
<line x1="546.5" y1="164.52" x2="546.5" y2="189.51" stroke="#1c5fd0" stroke-width="1"/>
<rect x="545" y="174.86" width="3" height="12.61" fill="#1c5fd0"/>
<line x1="548.5" y1="185.68" x2="548.5" y2="208.53" stroke="#e8180c" stroke-width="1"/>
<rect x="547" y="192.36" width="3" height="7.27" fill="#e8180c"/>
<line x1="550.5" y1="176.37" x2="550.5" y2="205.39" stroke="#1c5fd0" stroke-width="1"/>
<rect x="549" y="182.77" width="3" height="21.08" fill="#1c5fd0"/>
<line x1="552.5" y1="198.75" x2="552.5" y2="208.96" stroke="#1c5fd0" stroke-width="1"/>
<rect x="551" y="201.84" width="3" height="4.7" fill="#1c5fd0"/>
<line x1="555.5" y1="204.75" x2="555.5" y2="225.02" stroke="#1c5fd0" stroke-width="1"/>
<rect x="554" y="210.4" width="3" height="14.58" fill="#1c5fd0"/>
<line x1="557.5" y1="190.75" x2="557.5" y2="233.96" stroke="#e8180c" stroke-width="1"/>
<rect x="556" y="215.19" width="3" height="8.45" fill="#e8180c"/>
<line x1="559.5" y1="200.74" x2="559.5" y2="234.52" stroke="#1c5fd0" stroke-width="1"/>
<rect x="558" y="214.98" width="3" height="18.78" fill="#1c5fd0"/>
<line x1="561.5" y1="222.32" x2="561.5" y2="240.94" stroke="#1c5fd0" stroke-width="1"/>
<rect x="560" y="230.96" width="3" height="1.25" fill="#1c5fd0"/>
<line x1="564.5" y1="221.65" x2="564.5" y2="261.39" stroke="#1c5fd0" stroke-width="1"/>
<rect x="563" y="222.85" width="3" height="20.52" fill="#1c5fd0"/>
<line x1="566.5" y1="216.93" x2="566.5" y2="247.31" stroke="#e8180c" stroke-width="1"/>
<rect x="565" y="222.72" width="3" height="21.47" fill="#e8180c"/>
<line x1="568.5" y1="221.4" x2="568.5" y2="246.63" stroke="#1c5fd0" stroke-width="1"/>
<rect x="567" y="229.85" width="3" height="9.79" fill="#1c5fd0"/>
<line x1="570.5" y1="223.86" x2="570.5" y2="237.2" stroke="#1c5fd0" stroke-width="1"/>
<rect x="569" y="230.75" width="3" height="1.83" fill="#1c5fd0"/>
<line x1="572.5" y1="228.59" x2="572.5" y2="248.01" stroke="#e8180c" stroke-width="1"/>
<rect x="571" y="233.79" width="3" height="8.83" fill="#e8180c"/>
<line x1="575.5" y1="228.45" x2="575.5" y2="241.3" stroke="#e8180c" stroke-width="1"/>
<rect x="574" y="233.12" width="3" height="5.55" fill="#e8180c"/>
<line x1="577.5" y1="233.4" x2="577.5" y2="239.17" stroke="#1c5fd0" stroke-width="1"/>
<rect x="576" y="234.75" width="3" height="3.29" fill="#1c5fd0"/>
<line x1="579.5" y1="229.91" x2="579.5" y2="244.36" stroke="#e8180c" stroke-width="1"/>
<rect x="578" y="235.85" width="3" height="1" fill="#e8180c"/>
<line x1="581.5" y1="218.86" x2="581.5" y2="251.49" stroke="#e8180c" stroke-width="1"/>
<rect x="580" y="231.09" width="3" height="8.81" fill="#e8180c"/>
<line x1="584.5" y1="222.32" x2="584.5" y2="260.01" stroke="#1c5fd0" stroke-width="1"/>
<rect x="583" y="230.4" width="3" height="17.6" fill="#1c5fd0"/>
<line x1="586.5" y1="245.98" x2="586.5" y2="260.47" stroke="#e8180c" stroke-width="1"/>
<rect x="585" y="246.18" width="3" height="3.63" fill="#e8180c"/>
<line x1="588.5" y1="232.84" x2="588.5" y2="257.42" stroke="#e8180c" stroke-width="1"/>
<rect x="587" y="238.47" width="3" height="10.58" fill="#e8180c"/>
<line x1="590.5" y1="222.53" x2="590.5" y2="250.38" stroke="#1c5fd0" stroke-width="1"/>
<rect x="589" y="229.19" width="3" height="10.39" fill="#1c5fd0"/>
<line x1="593.5" y1="226.93" x2="593.5" y2="238.1" stroke="#e8180c" stroke-width="1"/>
<rect x="592" y="234.42" width="3" height="2.15" fill="#e8180c"/>
<line x1="595.5" y1="216.83" x2="595.5" y2="248.91" stroke="#e8180c" stroke-width="1"/>
<rect x="594" y="223.47" width="3" height="18.72" fill="#e8180c"/>
<line x1="597.5" y1="215.3" x2="597.5" y2="222.58" stroke="#e8180c" stroke-width="1"/>
<rect x="596" y="219.52" width="3" height="1" fill="#e8180c"/>
<line x1="599.5" y1="210.59" x2="599.5" y2="271.51" stroke="#1c5fd0" stroke-width="1"/>
<rect x="598" y="214.38" width="3" height="44.64" fill="#1c5fd0"/>
<line x1="602.5" y1="254.42" x2="602.5" y2="270.77" stroke="#1c5fd0" stroke-width="1"/>
<rect x="601" y="257.37" width="3" height="13.31" fill="#1c5fd0"/>
<line x1="604.5" y1="263.09" x2="604.5" y2="268.78" stroke="#1c5fd0" stroke-width="1"/>
<rect x="603" y="266.68" width="3" height="1.59" fill="#1c5fd0"/>
<line x1="606.5" y1="263.94" x2="606.5" y2="279.27" stroke="#e8180c" stroke-width="1"/>
<rect x="605" y="267.39" width="3" height="2.25" fill="#e8180c"/>
<line x1="608.5" y1="256.59" x2="608.5" y2="278.75" stroke="#1c5fd0" stroke-width="1"/>
<rect x="607" y="268.5" width="3" height="1.38" fill="#1c5fd0"/>
<line x1="610.5" y1="261.7" x2="610.5" y2="276.94" stroke="#e8180c" stroke-width="1"/>
<rect x="609" y="265.15" width="3" height="1.37" fill="#e8180c"/>
<line x1="613.5" y1="265.3" x2="613.5" y2="273.63" stroke="#1c5fd0" stroke-width="1"/>
<rect x="612" y="265.93" width="3" height="1.69" fill="#1c5fd0"/>
<line x1="615.5" y1="258.58" x2="615.5" y2="276.6" stroke="#1c5fd0" stroke-width="1"/>
<rect x="614" y="265.66" width="3" height="8.13" fill="#1c5fd0"/>
<line x1="617.5" y1="271.15" x2="617.5" y2="276.72" stroke="#1c5fd0" stroke-width="1"/>
<rect x="616" y="272.16" width="3" height="3.7" fill="#1c5fd0"/>
<line x1="619.5" y1="269.9" x2="619.5" y2="283.19" stroke="#e8180c" stroke-width="1"/>
<rect x="618" y="275.12" width="3" height="6.03" fill="#e8180c"/>
<line x1="622.5" y1="266.31" x2="622.5" y2="283.31" stroke="#e8180c" stroke-width="1"/>
<rect x="621" y="270.1" width="3" height="9.04" fill="#e8180c"/>
<line x1="624.5" y1="261.87" x2="624.5" y2="280.34" stroke="#1c5fd0" stroke-width="1"/>
<rect x="623" y="266.94" width="3" height="6.89" fill="#1c5fd0"/>
<line x1="626.5" y1="266.4" x2="626.5" y2="275.55" stroke="#1c5fd0" stroke-width="1"/>
<rect x="625" y="270.58" width="3" height="2.24" fill="#1c5fd0"/>
<line x1="628.5" y1="266.3" x2="628.5" y2="280.92" stroke="#e8180c" stroke-width="1"/>
<rect x="627" y="269.8" width="3" height="8.14" fill="#e8180c"/>
<line x1="631.5" y1="267.02" x2="631.5" y2="281.29" stroke="#1c5fd0" stroke-width="1"/>
<rect x="630" y="268.63" width="3" height="3.55" fill="#1c5fd0"/>
<line x1="633.5" y1="263.41" x2="633.5" y2="275.43" stroke="#e8180c" stroke-width="1"/>
<rect x="632" y="270.22" width="3" height="1.19" fill="#e8180c"/>
<line x1="635.5" y1="271.31" x2="635.5" y2="281.02" stroke="#1c5fd0" stroke-width="1"/>
<rect x="634" y="274.13" width="3" height="3.41" fill="#1c5fd0"/>
<line x1="637.5" y1="266.92" x2="637.5" y2="282.67" stroke="#e8180c" stroke-width="1"/>
<rect x="636" y="272.28" width="3" height="6.88" fill="#e8180c"/>
<line x1="640.5" y1="269.26" x2="640.5" y2="285.45" stroke="#1c5fd0" stroke-width="1"/>
<rect x="639" y="270.47" width="3" height="9.13" fill="#1c5fd0"/>
<line x1="642.5" y1="270.72" x2="642.5" y2="284.81" stroke="#e8180c" stroke-width="1"/>
<rect x="641" y="272.86" width="3" height="8.17" fill="#e8180c"/>
<line x1="644.5" y1="268.78" x2="644.5" y2="281.34" stroke="#1c5fd0" stroke-width="1"/>
<rect x="643" y="271.43" width="3" height="7.37" fill="#1c5fd0"/>
<line x1="646.5" y1="274.73" x2="646.5" y2="286.63" stroke="#1c5fd0" stroke-width="1"/>
<rect x="645" y="281.51" width="3" height="3.16" fill="#1c5fd0"/>
<line x1="648.5" y1="275.09" x2="648.5" y2="284.84" stroke="#e8180c" stroke-width="1"/>
<rect x="647" y="275.69" width="3" height="5.79" fill="#e8180c"/>
<line x1="651.5" y1="276.58" x2="651.5" y2="286.55" stroke="#e8180c" stroke-width="1"/>
<rect x="650" y="277.16" width="3" height="5.35" fill="#e8180c"/>
<line x1="653.5" y1="273.46" x2="653.5" y2="286.4" stroke="#1c5fd0" stroke-width="1"/>
<rect x="652" y="276.42" width="3" height="5.26" fill="#1c5fd0"/>
<line x1="655.5" y1="275.51" x2="655.5" y2="282.48" stroke="#e8180c" stroke-width="1"/>
<rect x="654" y="276.97" width="3" height="2.01" fill="#e8180c"/>
<line x1="657.5" y1="267.5" x2="657.5" y2="276.44" stroke="#e8180c" stroke-width="1"/>
<rect x="656" y="272.76" width="3" height="2.29" fill="#e8180c"/>
<line x1="660.5" y1="272.11" x2="660.5" y2="278.39" stroke="#e8180c" stroke-width="1"/>
<rect x="659" y="272.48" width="3" height="3.93" fill="#e8180c"/>
<line x1="662.5" y1="258.76" x2="662.5" y2="279.88" stroke="#e8180c" stroke-width="1"/>
<rect x="661" y="266.14" width="3" height="9.08" fill="#e8180c"/>
<line x1="664.5" y1="259.95" x2="664.5" y2="273.13" stroke="#1c5fd0" stroke-width="1"/>
<rect x="663" y="265.13" width="3" height="3.35" fill="#1c5fd0"/>
<line x1="666.5" y1="258.53" x2="666.5" y2="277.86" stroke="#1c5fd0" stroke-width="1"/>
<rect x="665" y="265.68" width="3" height="5.26" fill="#1c5fd0"/>
<line x1="669.5" y1="270.57" x2="669.5" y2="273.82" stroke="#1c5fd0" stroke-width="1"/>
<rect x="668" y="271.48" width="3" height="1.82" fill="#1c5fd0"/>
<line x1="671.5" y1="266.64" x2="671.5" y2="271.08" stroke="#e8180c" stroke-width="1"/>
<rect x="670" y="270.22" width="3" height="1" fill="#e8180c"/>
<line x1="673.5" y1="269.32" x2="673.5" y2="275.34" stroke="#e8180c" stroke-width="1"/>
<rect x="672" y="271.84" width="3" height="1.89" fill="#e8180c"/>
<line x1="675.5" y1="269.35" x2="675.5" y2="277.67" stroke="#1c5fd0" stroke-width="1"/>
<rect x="674" y="270.24" width="3" height="1.93" fill="#1c5fd0"/>
<line x1="678.5" y1="267.82" x2="678.5" y2="279.07" stroke="#1c5fd0" stroke-width="1"/>
<rect x="677" y="269.28" width="3" height="8.66" fill="#1c5fd0"/>
<line x1="680.5" y1="266.11" x2="680.5" y2="275.18" stroke="#e8180c" stroke-width="1"/>
<rect x="679" y="267.98" width="3" height="5.69" fill="#e8180c"/>
<line x1="682.5" y1="260.43" x2="682.5" y2="268.04" stroke="#1c5fd0" stroke-width="1"/>
<rect x="681" y="264.87" width="3" height="1.34" fill="#1c5fd0"/>
<line x1="684.5" y1="265.48" x2="684.5" y2="273.85" stroke="#1c5fd0" stroke-width="1"/>
<rect x="683" y="269.7" width="3" height="3.32" fill="#1c5fd0"/>
<line x1="687.5" y1="263.82" x2="687.5" y2="279.93" stroke="#1c5fd0" stroke-width="1"/>
<rect x="686" y="272.05" width="3" height="5.1" fill="#1c5fd0"/>
<line x1="689.5" y1="271.89" x2="689.5" y2="281.65" stroke="#1c5fd0" stroke-width="1"/>
<rect x="688" y="274.39" width="3" height="1.82" fill="#1c5fd0"/>
<line x1="691.5" y1="277.73" x2="691.5" y2="293.31" stroke="#1c5fd0" stroke-width="1"/>
<rect x="690" y="278.2" width="3" height="13.71" fill="#1c5fd0"/>
<line x1="693.5" y1="290.35" x2="693.5" y2="294.53" stroke="#e8180c" stroke-width="1"/>
<rect x="692" y="291.69" width="3" height="1" fill="#e8180c"/>
<line x1="695.5" y1="284.05" x2="695.5" y2="292.32" stroke="#e8180c" stroke-width="1"/>
<rect x="694" y="285.95" width="3" height="4.75" fill="#e8180c"/>
<line x1="698.5" y1="283.16" x2="698.5" y2="294.7" stroke="#1c5fd0" stroke-width="1"/>
<rect x="697" y="284.75" width="3" height="9.16" fill="#1c5fd0"/>
<line x1="700.5" y1="290.51" x2="700.5" y2="291.42" stroke="#1c5fd0" stroke-width="1"/>
<rect x="699" y="290.59" width="3" height="1" fill="#1c5fd0"/>
<line x1="702.5" y1="288.3" x2="702.5" y2="292.56" stroke="#e8180c" stroke-width="1"/>
<rect x="701" y="289.36" width="3" height="1" fill="#e8180c"/>
<line x1="704.5" y1="290.44" x2="704.5" y2="296.8" stroke="#1c5fd0" stroke-width="1"/>
<rect x="703" y="292.12" width="3" height="3.29" fill="#1c5fd0"/>
<line x1="707.5" y1="290.53" x2="707.5" y2="299.34" stroke="#e8180c" stroke-width="1"/>
<rect x="706" y="295.33" width="3" height="1.71" fill="#e8180c"/>
<line x1="709.5" y1="289.98" x2="709.5" y2="299.46" stroke="#1c5fd0" stroke-width="1"/>
<rect x="708" y="291.76" width="3" height="3.77" fill="#1c5fd0"/>
<line x1="711.5" y1="294.42" x2="711.5" y2="304.01" stroke="#1c5fd0" stroke-width="1"/>
<rect x="710" y="297.51" width="3" height="2.75" fill="#1c5fd0"/>
<line x1="713.5" y1="298.9" x2="713.5" y2="306.86" stroke="#e8180c" stroke-width="1"/>
<rect x="712" y="299.23" width="3" height="1.25" fill="#e8180c"/>
<line x1="716.5" y1="297.8" x2="716.5" y2="301.55" stroke="#1c5fd0" stroke-width="1"/>
<rect x="715" y="298.89" width="3" height="1.04" fill="#1c5fd0"/>
<line x1="718.5" y1="298.22" x2="718.5" y2="300.8" stroke="#1c5fd0" stroke-width="1"/>
<rect x="717" y="299.07" width="3" height="1.27" fill="#1c5fd0"/>
<line x1="720.5" y1="296.22" x2="720.5" y2="303.67" stroke="#1c5fd0" stroke-width="1"/>
<rect x="719" y="297.04" width="3" height="5.45" fill="#1c5fd0"/>
<line x1="722.5" y1="297.21" x2="722.5" y2="303.93" stroke="#1c5fd0" stroke-width="1"/>
<rect x="721" y="299.75" width="3" height="1.56" fill="#1c5fd0"/>
<line x1="725.5" y1="294.43" x2="725.5" y2="304.32" stroke="#1c5fd0" stroke-width="1"/>
<rect x="724" y="297.84" width="3" height="3.71" fill="#1c5fd0"/>
<line x1="727.5" y1="299" x2="727.5" y2="305.31" stroke="#1c5fd0" stroke-width="1"/>
<rect x="726" y="303.51" width="3" height="1" fill="#1c5fd0"/>
<line x1="729.5" y1="305.16" x2="729.5" y2="311.06" stroke="#e8180c" stroke-width="1"/>
<rect x="728" y="306.35" width="3" height="1.25" fill="#e8180c"/>
<line x1="731.5" y1="308.52" x2="731.5" y2="314.94" stroke="#1c5fd0" stroke-width="1"/>
<rect x="730" y="309.24" width="3" height="1.35" fill="#1c5fd0"/>
<line x1="733.5" y1="307.67" x2="733.5" y2="315.72" stroke="#1c5fd0" stroke-width="1"/>
<rect x="732" y="309.26" width="3" height="5.89" fill="#1c5fd0"/>
<line x1="736.5" y1="313.93" x2="736.5" y2="319.22" stroke="#1c5fd0" stroke-width="1"/>
<rect x="735" y="315.06" width="3" height="3.44" fill="#1c5fd0"/>
<line x1="738.5" y1="312.92" x2="738.5" y2="318.73" stroke="#e8180c" stroke-width="1"/>
<rect x="737" y="314.1" width="3" height="4.38" fill="#e8180c"/>
<line x1="740.5" y1="315.81" x2="740.5" y2="320.11" stroke="#e8180c" stroke-width="1"/>
<rect x="739" y="315.95" width="3" height="1" fill="#e8180c"/>
<line x1="742.5" y1="312" x2="742.5" y2="316.9" stroke="#e8180c" stroke-width="1"/>
<rect x="741" y="316.05" width="3" height="1" fill="#e8180c"/>
<line x1="745.5" y1="317.54" x2="745.5" y2="322.89" stroke="#1c5fd0" stroke-width="1"/>
<rect x="744" y="318.05" width="3" height="2.91" fill="#1c5fd0"/>
<line x1="747.5" y1="312.99" x2="747.5" y2="325" stroke="#e8180c" stroke-width="1"/>
<rect x="746" y="314.57" width="3" height="8.85" fill="#e8180c"/>
<line x1="749.5" y1="313.46" x2="749.5" y2="315.96" stroke="#e8180c" stroke-width="1"/>
<rect x="748" y="313.67" width="3" height="1" fill="#e8180c"/>
<line x1="751.5" y1="303.76" x2="751.5" y2="315.99" stroke="#e8180c" stroke-width="1"/>
<rect x="750" y="306.9" width="3" height="8.52" fill="#e8180c"/>
<line x1="754.5" y1="300.47" x2="754.5" y2="311.8" stroke="#e8180c" stroke-width="1"/>
<rect x="753" y="305.46" width="3" height="3.1" fill="#e8180c"/>
<line x1="756.5" y1="298.34" x2="756.5" y2="304.38" stroke="#1c5fd0" stroke-width="1"/>
<rect x="755" y="301.08" width="3" height="3.11" fill="#1c5fd0"/>
<line x1="758.5" y1="299.77" x2="758.5" y2="304.51" stroke="#e8180c" stroke-width="1"/>
<rect x="757" y="300.16" width="3" height="3.65" fill="#e8180c"/>
<line x1="760.5" y1="299.43" x2="760.5" y2="306.83" stroke="#e8180c" stroke-width="1"/>
<rect x="759" y="301.99" width="3" height="1" fill="#e8180c"/>
<line x1="763.5" y1="290.87" x2="763.5" y2="307.86" stroke="#e8180c" stroke-width="1"/>
<rect x="762" y="293.12" width="3" height="10.25" fill="#e8180c"/>
<line x1="765.5" y1="291.7" x2="765.5" y2="296.42" stroke="#e8180c" stroke-width="1"/>
<rect x="764" y="292.4" width="3" height="1.26" fill="#e8180c"/>
<line x1="767.5" y1="293" x2="767.5" y2="295.64" stroke="#e8180c" stroke-width="1"/>
<rect x="766" y="294.55" width="3" height="1" fill="#e8180c"/>
<line x1="769.5" y1="291.93" x2="769.5" y2="298.35" stroke="#e8180c" stroke-width="1"/>
<rect x="768" y="293.18" width="3" height="2.8" fill="#e8180c"/>
<line x1="771.5" y1="294.71" x2="771.5" y2="302.51" stroke="#1c5fd0" stroke-width="1"/>
<rect x="770" y="294.75" width="3" height="1" fill="#1c5fd0"/>
<line x1="774.5" y1="293.35" x2="774.5" y2="306.37" stroke="#1c5fd0" stroke-width="1"/>
<rect x="773" y="295.74" width="3" height="7.15" fill="#1c5fd0"/>
<line x1="776.5" y1="300.27" x2="776.5" y2="304.61" stroke="#e8180c" stroke-width="1"/>
<rect x="775" y="302.11" width="3" height="1.53" fill="#e8180c"/>
<line x1="778.5" y1="296.42" x2="778.5" y2="303.07" stroke="#e8180c" stroke-width="1"/>
<rect x="777" y="299.28" width="3" height="1" fill="#e8180c"/>
<line x1="780.5" y1="295.42" x2="780.5" y2="300.18" stroke="#1c5fd0" stroke-width="1"/>
<rect x="779" y="296.41" width="3" height="1.4" fill="#1c5fd0"/>
<line x1="783.5" y1="297.52" x2="783.5" y2="306.95" stroke="#1c5fd0" stroke-width="1"/>
<rect x="782" y="299.36" width="3" height="7" fill="#1c5fd0"/>
<line x1="785.5" y1="305.2" x2="785.5" y2="317.32" stroke="#1c5fd0" stroke-width="1"/>
<rect x="784" y="305.25" width="3" height="9.57" fill="#1c5fd0"/>
<line x1="787.5" y1="308.04" x2="787.5" y2="319.06" stroke="#e8180c" stroke-width="1"/>
<rect x="786" y="310.15" width="3" height="5.68" fill="#e8180c"/>
<line x1="789.5" y1="306.69" x2="789.5" y2="315.01" stroke="#1c5fd0" stroke-width="1"/>
<rect x="788" y="308.25" width="3" height="4.55" fill="#1c5fd0"/>
<line x1="792.5" y1="313.4" x2="792.5" y2="319.6" stroke="#1c5fd0" stroke-width="1"/>
<rect x="791" y="314.29" width="3" height="2.76" fill="#1c5fd0"/>
<line x1="794.5" y1="316.05" x2="794.5" y2="318.59" stroke="#e8180c" stroke-width="1"/>
<rect x="793" y="317.3" width="3" height="1" fill="#e8180c"/>
<line x1="796.5" y1="312.01" x2="796.5" y2="319.72" stroke="#e8180c" stroke-width="1"/>
<rect x="795" y="312.09" width="3" height="6.65" fill="#e8180c"/>
<line x1="798.5" y1="311.42" x2="798.5" y2="320.03" stroke="#1c5fd0" stroke-width="1"/>
<rect x="797" y="311.91" width="3" height="7.46" fill="#1c5fd0"/>
<line x1="801.5" y1="321.59" x2="801.5" y2="327.01" stroke="#1c5fd0" stroke-width="1"/>
<rect x="800" y="322.55" width="3" height="3.03" fill="#1c5fd0"/>
<line x1="803.5" y1="321.79" x2="803.5" y2="328.5" stroke="#1c5fd0" stroke-width="1"/>
<rect x="802" y="324.54" width="3" height="2.71" fill="#1c5fd0"/>
<line x1="805.5" y1="327.06" x2="805.5" y2="330.32" stroke="#1c5fd0" stroke-width="1"/>
<rect x="804" y="327.63" width="3" height="1" fill="#1c5fd0"/>
<line x1="807.5" y1="324.38" x2="807.5" y2="331.78" stroke="#e8180c" stroke-width="1"/>
<rect x="806" y="326.09" width="3" height="3.11" fill="#e8180c"/>
<line x1="809.5" y1="326.41" x2="809.5" y2="329.59" stroke="#1c5fd0" stroke-width="1"/>
<rect x="808" y="328.48" width="3" height="1" fill="#1c5fd0"/>
<line x1="812.5" y1="327.27" x2="812.5" y2="329.07" stroke="#e8180c" stroke-width="1"/>
<rect x="811" y="327.48" width="3" height="1" fill="#e8180c"/>
<line x1="814.5" y1="326.81" x2="814.5" y2="329.96" stroke="#e8180c" stroke-width="1"/>
<rect x="813" y="328.43" width="3" height="1" fill="#e8180c"/>
<line x1="816.5" y1="327.02" x2="816.5" y2="332.88" stroke="#1c5fd0" stroke-width="1"/>
<rect x="815" y="327.17" width="3" height="2.41" fill="#1c5fd0"/>
<line x1="818.5" y1="329" x2="818.5" y2="331.41" stroke="#e8180c" stroke-width="1"/>
<rect x="817" y="330.85" width="3" height="1" fill="#e8180c"/>
<line x1="821.5" y1="328.09" x2="821.5" y2="332.06" stroke="#e8180c" stroke-width="1"/>
<rect x="820" y="328.5" width="3" height="2.84" fill="#e8180c"/>
<line x1="823.5" y1="326.68" x2="823.5" y2="329.44" stroke="#e8180c" stroke-width="1"/>
<rect x="822" y="326.85" width="3" height="2.33" fill="#e8180c"/>
<line x1="825.5" y1="324.81" x2="825.5" y2="329.89" stroke="#1c5fd0" stroke-width="1"/>
<rect x="824" y="324.89" width="3" height="1.75" fill="#1c5fd0"/>
<line x1="827.5" y1="321.31" x2="827.5" y2="327.56" stroke="#1c5fd0" stroke-width="1"/>
<rect x="826" y="324.31" width="3" height="1.4" fill="#1c5fd0"/>
<line x1="830.5" y1="325.24" x2="830.5" y2="325.79" stroke="#e8180c" stroke-width="1"/>
<rect x="829" y="325.48" width="3" height="1" fill="#e8180c"/>
<line x1="832.5" y1="325.42" x2="832.5" y2="327.55" stroke="#e8180c" stroke-width="1"/>
<rect x="831" y="325.54" width="3" height="1" fill="#e8180c"/>
<line x1="834.5" y1="322.41" x2="834.5" y2="324.2" stroke="#e8180c" stroke-width="1"/>
<rect x="833" y="323.36" width="3" height="1" fill="#e8180c"/>
<line x1="836.5" y1="323.81" x2="836.5" y2="326.67" stroke="#e8180c" stroke-width="1"/>
<rect x="835" y="323.91" width="3" height="2.02" fill="#e8180c"/>
<line x1="839.5" y1="322.41" x2="839.5" y2="329.31" stroke="#e8180c" stroke-width="1"/>
<rect x="838" y="324.41" width="3" height="1" fill="#e8180c"/>
<line x1="841.5" y1="322.92" x2="841.5" y2="328.28" stroke="#e8180c" stroke-width="1"/>
<rect x="840" y="323.04" width="3" height="1" fill="#e8180c"/>
<line x1="843.5" y1="320.74" x2="843.5" y2="325.73" stroke="#e8180c" stroke-width="1"/>
<rect x="842" y="321.01" width="3" height="2.07" fill="#e8180c"/>
<line x1="845.5" y1="320.52" x2="845.5" y2="321.86" stroke="#1c5fd0" stroke-width="1"/>
<rect x="844" y="320.83" width="3" height="1" fill="#1c5fd0"/>
<line x1="848.5" y1="318.72" x2="848.5" y2="323.82" stroke="#e8180c" stroke-width="1"/>
<rect x="847" y="321.44" width="3" height="1" fill="#e8180c"/>
<line x1="850.5" y1="318.49" x2="850.5" y2="323.04" stroke="#1c5fd0" stroke-width="1"/>
<rect x="849" y="319.11" width="3" height="3.87" fill="#1c5fd0"/>
<line x1="852.5" y1="322.48" x2="852.5" y2="327.05" stroke="#1c5fd0" stroke-width="1"/>
<rect x="851" y="324.15" width="3" height="1" fill="#1c5fd0"/>
<line x1="854.5" y1="322.04" x2="854.5" y2="328.72" stroke="#1c5fd0" stroke-width="1"/>
<rect x="853" y="323.9" width="3" height="2.44" fill="#1c5fd0"/>
<line x1="856.5" y1="325.73" x2="856.5" y2="329.44" stroke="#1c5fd0" stroke-width="1"/>
<rect x="855" y="327.53" width="3" height="1" fill="#1c5fd0"/>
<line x1="859.5" y1="324.02" x2="859.5" y2="331.14" stroke="#e8180c" stroke-width="1"/>
<rect x="858" y="326.26" width="3" height="2.94" fill="#e8180c"/>
<line x1="861.5" y1="323.16" x2="861.5" y2="326.56" stroke="#1c5fd0" stroke-width="1"/>
<rect x="860" y="324.17" width="3" height="1.1" fill="#1c5fd0"/>
<line x1="863.5" y1="321.4" x2="863.5" y2="327.4" stroke="#e8180c" stroke-width="1"/>
<rect x="862" y="325.65" width="3" height="1" fill="#e8180c"/>
<line x1="865.5" y1="317.06" x2="865.5" y2="327.56" stroke="#e8180c" stroke-width="1"/>
<rect x="864" y="320.31" width="3" height="6.03" fill="#e8180c"/>
<line x1="868.5" y1="302.27" x2="868.5" y2="319.27" stroke="#e8180c" stroke-width="1"/>
<rect x="867" y="306.24" width="3" height="12.46" fill="#e8180c"/>
<line x1="870.5" y1="306.3" x2="870.5" y2="313.93" stroke="#1c5fd0" stroke-width="1"/>
<rect x="869" y="307.34" width="3" height="2.75" fill="#1c5fd0"/>
<line x1="872.5" y1="306.57" x2="872.5" y2="315.13" stroke="#1c5fd0" stroke-width="1"/>
<rect x="871" y="308.71" width="3" height="4.33" fill="#1c5fd0"/>
<line x1="874.5" y1="308.09" x2="874.5" y2="316.14" stroke="#e8180c" stroke-width="1"/>
<rect x="873" y="310.65" width="3" height="4.91" fill="#e8180c"/>
<line x1="877.5" y1="310.27" x2="877.5" y2="313.16" stroke="#1c5fd0" stroke-width="1"/>
<rect x="876" y="311.8" width="3" height="1.35" fill="#1c5fd0"/>
<line x1="879.5" y1="309.77" x2="879.5" y2="316.55" stroke="#e8180c" stroke-width="1"/>
<rect x="878" y="311.01" width="3" height="3.85" fill="#e8180c"/>
<line x1="881.5" y1="310.38" x2="881.5" y2="315.51" stroke="#1c5fd0" stroke-width="1"/>
<rect x="880" y="313.88" width="3" height="1" fill="#1c5fd0"/>
<line x1="883.5" y1="310.03" x2="883.5" y2="318.93" stroke="#1c5fd0" stroke-width="1"/>
<rect x="882" y="313.47" width="3" height="4.13" fill="#1c5fd0"/>
<line x1="886.5" y1="314.5" x2="886.5" y2="320.8" stroke="#e8180c" stroke-width="1"/>
<rect x="885" y="316.51" width="3" height="1.57" fill="#e8180c"/>
<line x1="888.5" y1="310.13" x2="888.5" y2="318.2" stroke="#e8180c" stroke-width="1"/>
<rect x="887" y="314.02" width="3" height="3.72" fill="#e8180c"/>
<line x1="890.5" y1="310.47" x2="890.5" y2="319.7" stroke="#1c5fd0" stroke-width="1"/>
<rect x="889" y="313.52" width="3" height="5.1" fill="#1c5fd0"/>
<line x1="892.5" y1="315.15" x2="892.5" y2="322.24" stroke="#1c5fd0" stroke-width="1"/>
<rect x="891" y="317.93" width="3" height="3.14" fill="#1c5fd0"/>
<line x1="894.5" y1="319.06" x2="894.5" y2="323.11" stroke="#e8180c" stroke-width="1"/>
<rect x="893" y="321.12" width="3" height="1" fill="#e8180c"/>
<line x1="897.5" y1="319.95" x2="897.5" y2="322.08" stroke="#e8180c" stroke-width="1"/>
<rect x="896" y="320.21" width="3" height="1.78" fill="#e8180c"/>
<line x1="899.5" y1="317.51" x2="899.5" y2="323.17" stroke="#1c5fd0" stroke-width="1"/>
<rect x="898" y="318.01" width="3" height="3.3" fill="#1c5fd0"/>
<line x1="901.5" y1="317.69" x2="901.5" y2="323.06" stroke="#1c5fd0" stroke-width="1"/>
<rect x="900" y="319.3" width="3" height="3.59" fill="#1c5fd0"/>
<line x1="903.5" y1="319" x2="903.5" y2="325.56" stroke="#e8180c" stroke-width="1"/>
<rect x="902" y="322.2" width="3" height="1.61" fill="#e8180c"/>
<line x1="906.5" y1="319.68" x2="906.5" y2="325.74" stroke="#1c5fd0" stroke-width="1"/>
<rect x="905" y="321.03" width="3" height="2.49" fill="#1c5fd0"/>
<line x1="908.5" y1="322.88" x2="908.5" y2="325.53" stroke="#1c5fd0" stroke-width="1"/>
<rect x="907" y="323.28" width="3" height="1.25" fill="#1c5fd0"/>
<line x1="910.5" y1="321.33" x2="910.5" y2="325.12" stroke="#e8180c" stroke-width="1"/>
<rect x="909" y="323.68" width="3" height="1" fill="#e8180c"/>
<line x1="912.5" y1="320.81" x2="912.5" y2="324.65" stroke="#1c5fd0" stroke-width="1"/>
<rect x="911" y="322.46" width="3" height="1.03" fill="#1c5fd0"/>
<line x1="915.5" y1="322.88" x2="915.5" y2="327.4" stroke="#1c5fd0" stroke-width="1"/>
<rect x="914" y="323.27" width="3" height="2.57" fill="#1c5fd0"/>
<line x1="917.5" y1="324.1" x2="917.5" y2="328.56" stroke="#1c5fd0" stroke-width="1"/>
<rect x="916" y="325.86" width="3" height="1.31" fill="#1c5fd0"/>
<line x1="919.5" y1="326.15" x2="919.5" y2="330.77" stroke="#1c5fd0" stroke-width="1"/>
<rect x="918" y="327.01" width="3" height="2.61" fill="#1c5fd0"/>
<line x1="921.5" y1="327.81" x2="921.5" y2="330.26" stroke="#e8180c" stroke-width="1"/>
<rect x="920" y="328.12" width="3" height="2.1" fill="#e8180c"/>
<line x1="924.5" y1="323.64" x2="924.5" y2="328.2" stroke="#1c5fd0" stroke-width="1"/>
<rect x="923" y="324.65" width="3" height="2.33" fill="#1c5fd0"/>
<line x1="926.5" y1="326.92" x2="926.5" y2="329.96" stroke="#1c5fd0" stroke-width="1"/>
<rect x="925" y="328" width="3" height="1.48" fill="#1c5fd0"/>
<line x1="928.5" y1="327.36" x2="928.5" y2="331.72" stroke="#e8180c" stroke-width="1"/>
<rect x="927" y="328.94" width="3" height="1" fill="#e8180c"/>
<line x1="930.5" y1="327.98" x2="930.5" y2="334.14" stroke="#1c5fd0" stroke-width="1"/>
<rect x="929" y="329.58" width="3" height="1.08" fill="#1c5fd0"/>
<line x1="932.5" y1="330.27" x2="932.5" y2="331.63" stroke="#1c5fd0" stroke-width="1"/>
<rect x="931" y="330.67" width="3" height="1" fill="#1c5fd0"/>
<line x1="935.5" y1="330.29" x2="935.5" y2="333.98" stroke="#1c5fd0" stroke-width="1"/>
<rect x="934" y="330.69" width="3" height="3.06" fill="#1c5fd0"/>
<line x1="937.5" y1="330.98" x2="937.5" y2="339.15" stroke="#e8180c" stroke-width="1"/>
<rect x="936" y="332.02" width="3" height="3.73" fill="#e8180c"/>
<line x1="939.5" y1="330.91" x2="939.5" y2="335.69" stroke="#1c5fd0" stroke-width="1"/>
<rect x="938" y="331.33" width="3" height="4.09" fill="#1c5fd0"/>
<line x1="941.5" y1="335.51" x2="941.5" y2="340.84" stroke="#1c5fd0" stroke-width="1"/>
<rect x="940" y="336.27" width="3" height="2.16" fill="#1c5fd0"/>
<line x1="944.5" y1="336.66" x2="944.5" y2="340.92" stroke="#1c5fd0" stroke-width="1"/>
<rect x="943" y="336.74" width="3" height="2.52" fill="#1c5fd0"/>
<line x1="946.5" y1="335.1" x2="946.5" y2="341.43" stroke="#e8180c" stroke-width="1"/>
<rect x="945" y="337.65" width="3" height="3.14" fill="#e8180c"/>
<line x1="948.5" y1="337.82" x2="948.5" y2="341.81" stroke="#1c5fd0" stroke-width="1"/>
<rect x="947" y="338.51" width="3" height="3.06" fill="#1c5fd0"/>
<line x1="950.5" y1="337.92" x2="950.5" y2="341.24" stroke="#1c5fd0" stroke-width="1"/>
<rect x="949" y="338.75" width="3" height="2.44" fill="#1c5fd0"/>
<line x1="953.5" y1="340.86" x2="953.5" y2="343.33" stroke="#1c5fd0" stroke-width="1"/>
<rect x="952" y="340.91" width="3" height="1.2" fill="#1c5fd0"/>
<line x1="955.5" y1="338.54" x2="955.5" y2="343.17" stroke="#1c5fd0" stroke-width="1"/>
<rect x="954" y="340.25" width="3" height="2.7" fill="#1c5fd0"/>
<line x1="957.5" y1="342.73" x2="957.5" y2="346.28" stroke="#1c5fd0" stroke-width="1"/>
<rect x="956" y="343.23" width="3" height="1" fill="#1c5fd0"/>
<line x1="959.5" y1="340.33" x2="959.5" y2="346.87" stroke="#e8180c" stroke-width="1"/>
<rect x="958" y="343.81" width="3" height="2.27" fill="#e8180c"/>
<line x1="962.5" y1="343.47" x2="962.5" y2="349.47" stroke="#1c5fd0" stroke-width="1"/>
<rect x="961" y="343.59" width="3" height="2.29" fill="#1c5fd0"/>
<line x1="964.5" y1="345.14" x2="964.5" y2="349.04" stroke="#1c5fd0" stroke-width="1"/>
<rect x="963" y="346.32" width="3" height="1" fill="#1c5fd0"/>
<line x1="966.5" y1="346.85" x2="966.5" y2="349.54" stroke="#1c5fd0" stroke-width="1"/>
<rect x="965" y="347.93" width="3" height="1" fill="#1c5fd0"/>
<line x1="968.5" y1="347.96" x2="968.5" y2="351.67" stroke="#1c5fd0" stroke-width="1"/>
<rect x="967" y="348.72" width="3" height="2.05" fill="#1c5fd0"/>
<line x1="970.5" y1="346.92" x2="970.5" y2="351.58" stroke="#e8180c" stroke-width="1"/>
<rect x="969" y="346.99" width="3" height="3.71" fill="#e8180c"/>
<line x1="973.5" y1="342.93" x2="973.5" y2="347.3" stroke="#e8180c" stroke-width="1"/>
<rect x="972" y="343.17" width="3" height="3.9" fill="#e8180c"/>
<line x1="975.5" y1="334.24" x2="975.5" y2="344.95" stroke="#e8180c" stroke-width="1"/>
<rect x="974" y="338.38" width="3" height="5.62" fill="#e8180c"/>
<line x1="977.5" y1="333.55" x2="977.5" y2="341.21" stroke="#1c5fd0" stroke-width="1"/>
<rect x="976" y="337.79" width="3" height="1" fill="#1c5fd0"/>
<line x1="979.5" y1="339.19" x2="979.5" y2="342.27" stroke="#e8180c" stroke-width="1"/>
<rect x="978" y="340.44" width="3" height="1" fill="#e8180c"/>
<line x1="982.5" y1="335.52" x2="982.5" y2="341.18" stroke="#1c5fd0" stroke-width="1"/>
<rect x="981" y="337.91" width="3" height="1.88" fill="#1c5fd0"/>
<line x1="984.5" y1="338.13" x2="984.5" y2="341.87" stroke="#e8180c" stroke-width="1"/>
<rect x="983" y="339.71" width="3" height="1.67" fill="#e8180c"/>
<line x1="986.5" y1="337.16" x2="986.5" y2="340.16" stroke="#1c5fd0" stroke-width="1"/>
<rect x="985" y="339.03" width="3" height="1" fill="#1c5fd0"/>
<line x1="988.5" y1="335.9" x2="988.5" y2="340.65" stroke="#e8180c" stroke-width="1"/>
<rect x="987" y="336.02" width="3" height="3.99" fill="#e8180c"/>
<line x1="991.5" y1="334.08" x2="991.5" y2="339.04" stroke="#1c5fd0" stroke-width="1"/>
<rect x="990" y="336.43" width="3" height="1" fill="#1c5fd0"/>
<line x1="993.5" y1="334.2" x2="993.5" y2="342.79" stroke="#1c5fd0" stroke-width="1"/>
<rect x="992" y="334.39" width="3" height="6.58" fill="#1c5fd0"/>
<line x1="995.5" y1="339.28" x2="995.5" y2="345.63" stroke="#1c5fd0" stroke-width="1"/>
<rect x="994" y="340.38" width="3" height="4.45" fill="#1c5fd0"/>
<line x1="997.5" y1="340.79" x2="997.5" y2="347.55" stroke="#e8180c" stroke-width="1"/>
<rect x="996" y="341.8" width="3" height="3.98" fill="#e8180c"/>
<line x1="1000.5" y1="333.34" x2="1000.5" y2="346.94" stroke="#e8180c" stroke-width="1"/>
<rect x="999" y="337.06" width="3" height="5.91" fill="#e8180c"/>
<line x1="1002.5" y1="327.23" x2="1002.5" y2="336.01" stroke="#e8180c" stroke-width="1"/>
<rect x="1001" y="331.34" width="3" height="3.14" fill="#e8180c"/>
<line x1="1004.5" y1="330.64" x2="1004.5" y2="334.05" stroke="#1c5fd0" stroke-width="1"/>
<rect x="1003" y="331.86" width="3" height="1" fill="#1c5fd0"/>
<line x1="1006.5" y1="332.15" x2="1006.5" y2="334.05" stroke="#1c5fd0" stroke-width="1"/>
<rect x="1005" y="332.22" width="3" height="1" fill="#1c5fd0"/>
<line x1="1008.5" y1="330.16" x2="1008.5" y2="340.24" stroke="#e8180c" stroke-width="1"/>
<rect x="1007" y="334.71" width="3" height="1.06" fill="#e8180c"/>
<line x1="1011.5" y1="327.76" x2="1011.5" y2="335.76" stroke="#e8180c" stroke-width="1"/>
<rect x="1010" y="329.2" width="3" height="5.55" fill="#e8180c"/>
<line x1="1013.5" y1="328.33" x2="1013.5" y2="331.68" stroke="#1c5fd0" stroke-width="1"/>
<rect x="1012" y="328.76" width="3" height="2.66" fill="#1c5fd0"/>
<line x1="1015.5" y1="330.07" x2="1015.5" y2="332.75" stroke="#e8180c" stroke-width="1"/>
<rect x="1014" y="330.44" width="3" height="2.26" fill="#e8180c"/>
<line x1="1017.5" y1="328.23" x2="1017.5" y2="333.6" stroke="#1c5fd0" stroke-width="1"/>
<rect x="1016" y="329.94" width="3" height="3.58" fill="#1c5fd0"/>
<line x1="1020.5" y1="329.93" x2="1020.5" y2="335.65" stroke="#e8180c" stroke-width="1"/>
<rect x="1019" y="331.18" width="3" height="2.27" fill="#e8180c"/>
<line x1="1022.5" y1="328.54" x2="1022.5" y2="334.17" stroke="#1c5fd0" stroke-width="1"/>
<rect x="1021" y="330.53" width="3" height="2.44" fill="#1c5fd0"/>
<line x1="1024.5" y1="326.19" x2="1024.5" y2="334.04" stroke="#e8180c" stroke-width="1"/>
<rect x="1023" y="327.27" width="3" height="6.25" fill="#e8180c"/>
<line x1="1026.5" y1="322.72" x2="1026.5" y2="328.61" stroke="#1c5fd0" stroke-width="1"/>
<rect x="1025" y="326.07" width="3" height="2.2" fill="#1c5fd0"/>
<line x1="1029.5" y1="328.57" x2="1029.5" y2="335.24" stroke="#1c5fd0" stroke-width="1"/>
<rect x="1028" y="329.31" width="3" height="5.52" fill="#1c5fd0"/>
<line x1="1031.5" y1="330.24" x2="1031.5" y2="336.38" stroke="#e8180c" stroke-width="1"/>
<rect x="1030" y="331.75" width="3" height="4.42" fill="#e8180c"/>
<line x1="1033.5" y1="326.92" x2="1033.5" y2="332.88" stroke="#e8180c" stroke-width="1"/>
<rect x="1032" y="329.45" width="3" height="1.27" fill="#e8180c"/>
<line x1="1035.5" y1="326.34" x2="1035.5" y2="336.48" stroke="#1c5fd0" stroke-width="1"/>
<rect x="1034" y="328.66" width="3" height="7.61" fill="#1c5fd0"/>
<line x1="1038.5" y1="335.65" x2="1038.5" y2="352.08" stroke="#1c5fd0" stroke-width="1"/>
<rect x="1037" y="335.8" width="3" height="14.87" fill="#1c5fd0"/>
<line x1="1040.5" y1="350.36" x2="1040.5" y2="357.21" stroke="#1c5fd0" stroke-width="1"/>
<rect x="1039" y="350.74" width="3" height="6.09" fill="#1c5fd0"/>
<line x1="1042.5" y1="355.96" x2="1042.5" y2="359.25" stroke="#e8180c" stroke-width="1"/>
<rect x="1041" y="357.11" width="3" height="1" fill="#e8180c"/>
<line x1="1044.5" y1="356.51" x2="1044.5" y2="358.18" stroke="#e8180c" stroke-width="1"/>
<rect x="1043" y="356.51" width="3" height="1" fill="#e8180c"/>
<line x1="1047.5" y1="353.07" x2="1047.5" y2="357.47" stroke="#e8180c" stroke-width="1"/>
<rect x="1046" y="353.6" width="3" height="3.33" fill="#e8180c"/>
<line x1="1049.5" y1="350.04" x2="1049.5" y2="353.48" stroke="#e8180c" stroke-width="1"/>
<rect x="1048" y="351.63" width="3" height="1.48" fill="#e8180c"/>
<line x1="1051.5" y1="348.62" x2="1051.5" y2="352.23" stroke="#e8180c" stroke-width="1"/>
<rect x="1050" y="349.46" width="3" height="1.88" fill="#e8180c"/>
<line x1="1053.5" y1="348.61" x2="1053.5" y2="351.6" stroke="#1c5fd0" stroke-width="1"/>
<rect x="1052" y="348.64" width="3" height="1.95" fill="#1c5fd0"/>
<line x1="1055.5" y1="349.32" x2="1055.5" y2="352.78" stroke="#1c5fd0" stroke-width="1"/>
<rect x="1054" y="350.32" width="3" height="1.51" fill="#1c5fd0"/>
<line x1="1058.5" y1="349.77" x2="1058.5" y2="353.93" stroke="#1c5fd0" stroke-width="1"/>
<rect x="1057" y="351.3" width="3" height="2.05" fill="#1c5fd0"/>
<line x1="1060.5" y1="351.5" x2="1060.5" y2="357.15" stroke="#1c5fd0" stroke-width="1"/>
<rect x="1059" y="352.47" width="3" height="3.8" fill="#1c5fd0"/>
<line x1="1062.5" y1="354.37" x2="1062.5" y2="356.06" stroke="#e8180c" stroke-width="1"/>
<rect x="1061" y="354.98" width="3" height="1" fill="#e8180c"/>
<line x1="1064.5" y1="353.63" x2="1064.5" y2="355.27" stroke="#e8180c" stroke-width="1"/>
<rect x="1063" y="354.63" width="3" height="1" fill="#e8180c"/>
<line x1="1067.5" y1="353.79" x2="1067.5" y2="355.32" stroke="#e8180c" stroke-width="1"/>
<rect x="1066" y="353.83" width="3" height="1" fill="#e8180c"/>
<line x1="1069.5" y1="351.88" x2="1069.5" y2="354.29" stroke="#e8180c" stroke-width="1"/>
<rect x="1068" y="352.05" width="3" height="1.88" fill="#e8180c"/>
<line x1="1071.5" y1="349.98" x2="1071.5" y2="352.43" stroke="#e8180c" stroke-width="1"/>
<rect x="1070" y="351.56" width="3" height="1" fill="#e8180c"/>
<line x1="1073.5" y1="351.33" x2="1073.5" y2="353.09" stroke="#1c5fd0" stroke-width="1"/>
<rect x="1072" y="351.51" width="3" height="1.05" fill="#1c5fd0"/>
<line x1="1076.5" y1="351.59" x2="1076.5" y2="356.16" stroke="#1c5fd0" stroke-width="1"/>
<rect x="1075" y="351.71" width="3" height="3.6" fill="#1c5fd0"/>
<line x1="1078.5" y1="355.54" x2="1078.5" y2="356.37" stroke="#1c5fd0" stroke-width="1"/>
<rect x="1077" y="355.64" width="3" height="1" fill="#1c5fd0"/>
<line x1="1080.5" y1="354.48" x2="1080.5" y2="356.54" stroke="#1c5fd0" stroke-width="1"/>
<rect x="1079" y="355.39" width="3" height="1" fill="#1c5fd0"/>
<line x1="1082.5" y1="357" x2="1082.5" y2="356.92" stroke="#e8180c" stroke-width="1"/>
<rect x="1081" y="357" width="3" height="1" fill="#e8180c"/>
<line x1="1085.5" y1="357" x2="1085.5" y2="357.71" stroke="#1c5fd0" stroke-width="1"/>
<rect x="1084" y="357" width="3" height="1" fill="#1c5fd0"/>
<line x1="1087.5" y1="357" x2="1087.5" y2="358.53" stroke="#1c5fd0" stroke-width="1"/>
<rect x="1086" y="357.2" width="3" height="1" fill="#1c5fd0"/>
<line x1="1089.5" y1="357" x2="1089.5" y2="359.04" stroke="#1c5fd0" stroke-width="1"/>
<rect x="1088" y="357.29" width="3" height="1.75" fill="#1c5fd0"/>
<line x1="1091.5" y1="358.26" x2="1091.5" y2="360.86" stroke="#e8180c" stroke-width="1"/>
<rect x="1090" y="359.04" width="3" height="1" fill="#e8180c"/>
<line x1="1093.5" y1="358.34" x2="1093.5" y2="359.94" stroke="#e8180c" stroke-width="1"/>
<rect x="1092" y="358.82" width="3" height="1" fill="#e8180c"/>
<line x1="1096.5" y1="357.04" x2="1096.5" y2="360.43" stroke="#e8180c" stroke-width="1"/>
<rect x="1095" y="358.41" width="3" height="1" fill="#e8180c"/>
<line x1="1098.5" y1="357.68" x2="1098.5" y2="358.45" stroke="#1c5fd0" stroke-width="1"/>
<rect x="1097" y="358.33" width="3" height="1" fill="#1c5fd0"/>
<line x1="1100.5" y1="356.03" x2="1100.5" y2="358.92" stroke="#1c5fd0" stroke-width="1"/>
<rect x="1099" y="357.92" width="3" height="1" fill="#1c5fd0"/>
<line x1="1102.5" y1="356.24" x2="1102.5" y2="360.14" stroke="#1c5fd0" stroke-width="1"/>
<rect x="1101" y="357.7" width="3" height="1.9" fill="#1c5fd0"/>
<line x1="1105.5" y1="357.29" x2="1105.5" y2="360.83" stroke="#e8180c" stroke-width="1"/>
<rect x="1104" y="358.12" width="3" height="2.42" fill="#e8180c"/>
<line x1="1107.5" y1="356.44" x2="1107.5" y2="357.08" stroke="#1c5fd0" stroke-width="1"/>
<rect x="1106" y="356.89" width="3" height="1" fill="#1c5fd0"/>
<line x1="1109.5" y1="356.02" x2="1109.5" y2="357.78" stroke="#1c5fd0" stroke-width="1"/>
<rect x="1108" y="356.49" width="3" height="1" fill="#1c5fd0"/>
<line x1="1111.5" y1="355.24" x2="1111.5" y2="358.3" stroke="#e8180c" stroke-width="1"/>
<rect x="1110" y="355.3" width="3" height="2.17" fill="#e8180c"/>
<line x1="1114.5" y1="353.91" x2="1114.5" y2="355.08" stroke="#e8180c" stroke-width="1"/>
<rect x="1113" y="354.34" width="3" height="1" fill="#e8180c"/>
<line x1="1116.5" y1="353.07" x2="1116.5" y2="355.22" stroke="#1c5fd0" stroke-width="1"/>
<rect x="1115" y="353.33" width="3" height="1" fill="#1c5fd0"/>
<line x1="1118.5" y1="351.82" x2="1118.5" y2="356.1" stroke="#e8180c" stroke-width="1"/>
<rect x="1117" y="352.44" width="3" height="2.08" fill="#e8180c"/>
<line x1="1120.5" y1="352.18" x2="1120.5" y2="353.74" stroke="#1c5fd0" stroke-width="1"/>
<rect x="1119" y="352.32" width="3" height="1.03" fill="#1c5fd0"/>
<line x1="1123.5" y1="353.43" x2="1123.5" y2="354.28" stroke="#e8180c" stroke-width="1"/>
<rect x="1122" y="353.7" width="3" height="1" fill="#e8180c"/>
<line x1="1125.5" y1="353.14" x2="1125.5" y2="355.44" stroke="#e8180c" stroke-width="1"/>
<rect x="1124" y="353.61" width="3" height="1.39" fill="#e8180c"/>
<line x1="1127.5" y1="352.77" x2="1127.5" y2="354.03" stroke="#e8180c" stroke-width="1"/>
<rect x="1126" y="353.61" width="3" height="1" fill="#e8180c"/>
<line x1="1129.5" y1="352.95" x2="1129.5" y2="354.1" stroke="#1c5fd0" stroke-width="1"/>
<rect x="1128" y="353.14" width="3" height="1" fill="#1c5fd0"/>
<line x1="1131.5" y1="352" x2="1131.5" y2="353.65" stroke="#e8180c" stroke-width="1"/>
<rect x="1130" y="352.79" width="3" height="1" fill="#e8180c"/>
<line x1="1134.5" y1="351.83" x2="1134.5" y2="352.38" stroke="#1c5fd0" stroke-width="1"/>
<rect x="1133" y="352.09" width="3" height="1" fill="#1c5fd0"/>
<line x1="1136.5" y1="350.99" x2="1136.5" y2="351.7" stroke="#e8180c" stroke-width="1"/>
<rect x="1135" y="351.44" width="3" height="1" fill="#e8180c"/>
<line x1="1138.5" y1="350.9" x2="1138.5" y2="351.6" stroke="#1c5fd0" stroke-width="1"/>
<rect x="1137" y="351.21" width="3" height="1" fill="#1c5fd0"/>
<line x1="1140.5" y1="350.34" x2="1140.5" y2="351.37" stroke="#e8180c" stroke-width="1"/>
<rect x="1139" y="350.48" width="3" height="1" fill="#e8180c"/>
<line x1="1143.5" y1="342.94" x2="1143.5" y2="351.34" stroke="#e8180c" stroke-width="1"/>
<rect x="1142" y="344.87" width="3" height="6.16" fill="#e8180c"/>
</g>
<text x="346.8" y="101" font-size="12.5" fill="#e01010" text-anchor="start" font-weight="normal" textLength="110" lengthAdjust="spacingAndGlyphs">최고 245,700 (11/22)</text>
<path d="M462 98.5h11" stroke="#e01010" stroke-width="1.3"/><path d="M471 94.5l6 4-6 4z" fill="#e01010"/><path d="M477.5 93v11" stroke="#e01010" stroke-width="1.2"/>
<path d="M538.7 143v13" stroke="#e01010" stroke-width="1.3"/><path d="M533.2 155h11l-5.5 7z" fill="#e01010"/>
<path d="M407.6 250v15" stroke="#e01010" stroke-width="1.3"/><path d="M402 264h11.2l-5.6 6.5z" fill="#e01010"/>
<path d="M377.7 298.5v13" stroke="#e01010" stroke-width="1.3"/><path d="M372.2 311h11l-5.5 7z" fill="#e01010"/>
<path d="M1088.5 336v14" stroke="#e01010" stroke-width="1.3"/><path d="M1083 349.5h11l-5.5 6.5z" fill="#e01010"/>
<path d="M32 375l6.5-5v10z" fill="#0a14e8"/><path d="M38 375h9" stroke="#0a14e8" stroke-width="1.3"/>
<text x="46.3" y="380" font-size="12.5" fill="#1010e0" text-anchor="start" font-weight="normal" textLength="106" lengthAdjust="spacingAndGlyphs">최저 18,743 (01/29)</text>
<g shape-rendering="crispEdges">
<rect x="8" y="552.02" width="2.29" height="1.58" fill="#0000ff"/>
<rect x="10.24" y="550.75" width="2.29" height="2.85" fill="#ff0000"/>
<rect x="12.47" y="550.75" width="2.29" height="2.85" fill="#ff0000"/>
<rect x="14.71" y="550.75" width="2.29" height="2.85" fill="#ff0000"/>
<rect x="16.94" y="552.02" width="2.29" height="1.58" fill="#0000ff"/>
<rect x="19.18" y="549.64" width="2.29" height="3.96" fill="#ff0000"/>
<rect x="21.42" y="551.7" width="2.29" height="1.9" fill="#ff0000"/>
<rect x="23.65" y="551.7" width="2.29" height="1.9" fill="#ff0000"/>
<rect x="25.89" y="551.7" width="2.29" height="1.9" fill="#0000ff"/>
<rect x="28.12" y="551.7" width="2.29" height="1.9" fill="#0000ff"/>
<rect x="30.36" y="551.7" width="2.29" height="1.9" fill="#0000ff"/>
<rect x="32.6" y="550.75" width="2.29" height="2.85" fill="#ff0000"/>
<rect x="34.83" y="550.75" width="2.29" height="2.85" fill="#ff0000"/>
<rect x="37.07" y="551.7" width="2.29" height="1.9" fill="#0000ff"/>
<rect x="39.3" y="551.7" width="2.29" height="1.9" fill="#0000ff"/>
<rect x="41.54" y="551.7" width="2.29" height="1.9" fill="#0000ff"/>
<rect x="43.78" y="551.7" width="2.29" height="1.9" fill="#ff0000"/>
<rect x="46.01" y="551.7" width="2.29" height="1.9" fill="#ff0000"/>
<rect x="48.25" y="541.71" width="2.29" height="11.89" fill="#ff0000"/>
<rect x="50.48" y="548.85" width="2.29" height="4.75" fill="#0000ff"/>
<rect x="52.72" y="548.85" width="2.29" height="4.75" fill="#0000ff"/>
<rect x="54.96" y="550.75" width="2.29" height="2.85" fill="#0000ff"/>
<rect x="57.19" y="549.64" width="2.29" height="3.96" fill="#0000ff"/>
<rect x="59.43" y="550.75" width="2.29" height="2.85" fill="#ff0000"/>
<rect x="61.66" y="551.7" width="2.29" height="1.9" fill="#0000ff"/>
<rect x="63.9" y="550.75" width="2.29" height="2.85" fill="#ff0000"/>
<rect x="66.14" y="551.7" width="2.29" height="1.9" fill="#0000ff"/>
<rect x="68.37" y="551.7" width="2.29" height="1.9" fill="#0000ff"/>
<rect x="70.61" y="551.7" width="2.29" height="1.9" fill="#0000ff"/>
<rect x="72.84" y="551.7" width="2.29" height="1.9" fill="#ff0000"/>
<rect x="75.08" y="551.7" width="2.29" height="1.9" fill="#ff0000"/>
<rect x="77.32" y="551.7" width="2.29" height="1.9" fill="#0000ff"/>
<rect x="79.55" y="551.7" width="2.29" height="1.9" fill="#ff0000"/>
<rect x="81.79" y="551.7" width="2.29" height="1.9" fill="#ff0000"/>
<rect x="84.02" y="548.69" width="2.29" height="4.91" fill="#0000ff"/>
<rect x="86.26" y="548.69" width="2.29" height="4.91" fill="#0000ff"/>
<rect x="88.5" y="550.75" width="2.29" height="2.85" fill="#ff0000"/>
<rect x="90.73" y="551.7" width="2.29" height="1.9" fill="#0000ff"/>
<rect x="92.97" y="551.7" width="2.29" height="1.9" fill="#0000ff"/>
<rect x="95.2" y="549.64" width="2.29" height="3.96" fill="#ff0000"/>
<rect x="97.44" y="551.7" width="2.29" height="1.9" fill="#0000ff"/>
<rect x="99.68" y="551.7" width="2.29" height="1.9" fill="#0000ff"/>
<rect x="101.91" y="550.75" width="2.29" height="2.85" fill="#ff0000"/>
<rect x="104.15" y="542.82" width="2.29" height="10.78" fill="#ff0000"/>
<rect x="106.38" y="547.89" width="2.29" height="5.71" fill="#ff0000"/>
<rect x="108.62" y="549.64" width="2.29" height="3.96" fill="#0000ff"/>
<rect x="110.86" y="549.64" width="2.29" height="3.96" fill="#0000ff"/>
<rect x="113.09" y="545.68" width="2.29" height="7.92" fill="#ff0000"/>
<rect x="115.33" y="547.89" width="2.29" height="5.71" fill="#0000ff"/>
<rect x="117.56" y="547.89" width="2.29" height="5.71" fill="#ff0000"/>
<rect x="119.8" y="549.64" width="2.29" height="3.96" fill="#0000ff"/>
<rect x="122.04" y="549.16" width="2.29" height="4.44" fill="#ff0000"/>
<rect x="124.27" y="549.16" width="2.29" height="4.44" fill="#ff0000"/>
<rect x="126.51" y="544.73" width="2.29" height="8.87" fill="#0000ff"/>
<rect x="128.74" y="547.89" width="2.29" height="5.71" fill="#0000ff"/>
<rect x="130.98" y="547.89" width="2.29" height="5.71" fill="#0000ff"/>
<rect x="133.22" y="550.75" width="2.29" height="2.85" fill="#ff0000"/>
<rect x="135.45" y="549.64" width="2.29" height="3.96" fill="#ff0000"/>
<rect x="137.69" y="550.75" width="2.29" height="2.85" fill="#0000ff"/>
<rect x="139.92" y="550.75" width="2.29" height="2.85" fill="#0000ff"/>
<rect x="142.16" y="550.75" width="2.29" height="2.85" fill="#0000ff"/>
<rect x="144.4" y="550.75" width="2.29" height="2.85" fill="#ff0000"/>
<rect x="146.63" y="547.89" width="2.29" height="5.71" fill="#0000ff"/>
<rect x="148.87" y="550.75" width="2.29" height="2.85" fill="#0000ff"/>
<rect x="151.1" y="550.75" width="2.29" height="2.85" fill="#0000ff"/>
<rect x="153.34" y="550.75" width="2.29" height="2.85" fill="#0000ff"/>
<rect x="155.58" y="549.64" width="2.29" height="3.96" fill="#0000ff"/>
<rect x="157.81" y="551.7" width="2.29" height="1.9" fill="#0000ff"/>
<rect x="160.05" y="551.7" width="2.29" height="1.9" fill="#0000ff"/>
<rect x="162.28" y="551.7" width="2.29" height="1.9" fill="#0000ff"/>
<rect x="164.52" y="551.7" width="2.29" height="1.9" fill="#0000ff"/>
<rect x="166.76" y="551.7" width="2.29" height="1.9" fill="#0000ff"/>
<rect x="168.99" y="551.7" width="2.29" height="1.9" fill="#0000ff"/>
<rect x="171.23" y="551.7" width="2.29" height="1.9" fill="#0000ff"/>
<rect x="173.46" y="550.75" width="2.29" height="2.85" fill="#ff0000"/>
<rect x="175.7" y="551.7" width="2.29" height="1.9" fill="#0000ff"/>
<rect x="177.94" y="551.7" width="2.29" height="1.9" fill="#0000ff"/>
<rect x="180.17" y="549.64" width="2.29" height="3.96" fill="#ff0000"/>
<rect x="182.41" y="549.95" width="2.29" height="3.65" fill="#ff0000"/>
<rect x="184.64" y="548.85" width="2.29" height="4.75" fill="#0000ff"/>
<rect x="186.88" y="548.85" width="2.29" height="4.75" fill="#ff0000"/>
<rect x="189.12" y="549.95" width="2.29" height="3.65" fill="#0000ff"/>
<rect x="191.35" y="551.7" width="2.29" height="1.9" fill="#ff0000"/>
<rect x="193.59" y="551.7" width="2.29" height="1.9" fill="#ff0000"/>
<rect x="195.82" y="551.7" width="2.29" height="1.9" fill="#ff0000"/>
<rect x="198.06" y="551.7" width="2.29" height="1.9" fill="#0000ff"/>
<rect x="200.3" y="551.7" width="2.29" height="1.9" fill="#ff0000"/>
<rect x="202.53" y="549.95" width="2.29" height="3.65" fill="#ff0000"/>
<rect x="204.77" y="550.75" width="2.29" height="2.85" fill="#ff0000"/>
<rect x="207" y="550.75" width="2.29" height="2.85" fill="#ff0000"/>
<rect x="209.24" y="550.75" width="2.29" height="2.85" fill="#ff0000"/>
<rect x="211.48" y="551.7" width="2.29" height="1.9" fill="#ff0000"/>
<rect x="213.71" y="551.7" width="2.29" height="1.9" fill="#ff0000"/>
<rect x="215.95" y="551.7" width="2.29" height="1.9" fill="#0000ff"/>
<rect x="218.18" y="550.75" width="2.29" height="2.85" fill="#ff0000"/>
<rect x="220.42" y="550.75" width="2.29" height="2.85" fill="#0000ff"/>
<rect x="222.66" y="550.75" width="2.29" height="2.85" fill="#0000ff"/>
<rect x="224.89" y="551.7" width="2.29" height="1.9" fill="#ff0000"/>
<rect x="227.13" y="551.7" width="2.29" height="1.9" fill="#0000ff"/>
<rect x="229.36" y="551.7" width="2.29" height="1.9" fill="#0000ff"/>
<rect x="231.6" y="550.75" width="2.29" height="2.85" fill="#ff0000"/>
<rect x="233.84" y="550.75" width="2.29" height="2.85" fill="#ff0000"/>
<rect x="236.07" y="551.7" width="2.29" height="1.9" fill="#ff0000"/>
<rect x="238.31" y="551.7" width="2.29" height="1.9" fill="#0000ff"/>
<rect x="240.54" y="551.7" width="2.29" height="1.9" fill="#ff0000"/>
<rect x="242.78" y="551.7" width="2.29" height="1.9" fill="#0000ff"/>
<rect x="245.02" y="549.64" width="2.29" height="3.96" fill="#0000ff"/>
<rect x="247.25" y="549.64" width="2.29" height="3.96" fill="#0000ff"/>
<rect x="249.49" y="551.7" width="2.29" height="1.9" fill="#ff0000"/>
<rect x="251.72" y="551.7" width="2.29" height="1.9" fill="#ff0000"/>
<rect x="253.96" y="551.7" width="2.29" height="1.9" fill="#0000ff"/>
<rect x="256.2" y="551.7" width="2.29" height="1.9" fill="#0000ff"/>
<rect x="258.43" y="544.73" width="2.29" height="8.87" fill="#0000ff"/>
<rect x="260.67" y="550.75" width="2.29" height="2.85" fill="#ff0000"/>
<rect x="262.9" y="548.85" width="2.29" height="4.75" fill="#0000ff"/>
<rect x="265.14" y="545.68" width="2.29" height="7.92" fill="#ff0000"/>
<rect x="267.38" y="547.89" width="2.29" height="5.71" fill="#0000ff"/>
<rect x="269.61" y="550.75" width="2.29" height="2.85" fill="#0000ff"/>
<rect x="271.85" y="550.75" width="2.29" height="2.85" fill="#0000ff"/>
<rect x="274.08" y="550.75" width="2.29" height="2.85" fill="#0000ff"/>
<rect x="276.32" y="549.64" width="2.29" height="3.96" fill="#0000ff"/>
<rect x="278.56" y="550.75" width="2.29" height="2.85" fill="#ff0000"/>
<rect x="280.79" y="551.7" width="2.29" height="1.9" fill="#ff0000"/>
<rect x="283.03" y="551.7" width="2.29" height="1.9" fill="#ff0000"/>
<rect x="285.26" y="547.89" width="2.29" height="5.71" fill="#ff0000"/>
<rect x="287.5" y="534.9" width="2.29" height="18.7" fill="#0000ff"/>
<rect x="289.74" y="545.68" width="2.29" height="7.92" fill="#ff0000"/>
<rect x="291.97" y="547.89" width="2.29" height="5.71" fill="#0000ff"/>
<rect x="294.21" y="546.94" width="2.29" height="6.66" fill="#0000ff"/>
<rect x="296.44" y="549.95" width="2.29" height="3.65" fill="#0000ff"/>
<rect x="298.68" y="549.95" width="2.29" height="3.65" fill="#0000ff"/>
<rect x="300.92" y="549.95" width="2.29" height="3.65" fill="#0000ff"/>
<rect x="303.15" y="549.95" width="2.29" height="3.65" fill="#0000ff"/>
<rect x="305.39" y="549.64" width="2.29" height="3.96" fill="#0000ff"/>
<rect x="307.62" y="550.75" width="2.29" height="2.85" fill="#ff0000"/>
<rect x="309.86" y="550.75" width="2.29" height="2.85" fill="#0000ff"/>
<rect x="312.1" y="550.75" width="2.29" height="2.85" fill="#ff0000"/>
<rect x="314.33" y="539.65" width="2.29" height="13.95" fill="#0000ff"/>
<rect x="316.57" y="550.75" width="2.29" height="2.85" fill="#0000ff"/>
<rect x="318.8" y="549.64" width="2.29" height="3.96" fill="#0000ff"/>
<rect x="321.04" y="550.75" width="2.29" height="2.85" fill="#0000ff"/>
<rect x="323.28" y="550.75" width="2.29" height="2.85" fill="#0000ff"/>
<rect x="325.51" y="548.85" width="2.29" height="4.75" fill="#ff0000"/>
<rect x="327.75" y="548.85" width="2.29" height="4.75" fill="#ff0000"/>
<rect x="329.98" y="542.82" width="2.29" height="10.78" fill="#ff0000"/>
<rect x="332.22" y="545.68" width="2.29" height="7.92" fill="#ff0000"/>
<rect x="334.46" y="521.75" width="2.29" height="31.85" fill="#ff0000"/>
<rect x="336.69" y="543.77" width="2.29" height="9.83" fill="#0000ff"/>
<rect x="338.93" y="543.77" width="2.29" height="9.83" fill="#0000ff"/>
<rect x="341.16" y="545.68" width="2.29" height="7.92" fill="#ff0000"/>
<rect x="343.4" y="545.68" width="2.29" height="7.92" fill="#ff0000"/>
<rect x="345.64" y="547.58" width="2.29" height="6.02" fill="#0000ff"/>
<rect x="347.87" y="547.58" width="2.29" height="6.02" fill="#0000ff"/>
<rect x="350.11" y="534.9" width="2.29" height="18.7" fill="#0000ff"/>
<rect x="352.34" y="526.66" width="2.29" height="26.94" fill="#0000ff"/>
<rect x="354.58" y="513.66" width="2.29" height="39.94" fill="#ff0000"/>
<rect x="356.82" y="465.92" width="2.29" height="87.68" fill="#ff0000"/>
<rect x="359.05" y="461.9" width="2.29" height="91.7" fill="#ff0000"/>
<rect x="361.29" y="532.05" width="2.29" height="21.55" fill="#0000ff"/>
<rect x="363.52" y="478.81" width="2.29" height="74.79" fill="#ff0000"/>
<rect x="365.76" y="522.96" width="2.29" height="30.64" fill="#0000ff"/>
<rect x="368" y="536.91" width="2.29" height="16.69" fill="#0000ff"/>
<rect x="370.23" y="528.88" width="2.29" height="24.72" fill="#0000ff"/>
<rect x="372.47" y="515.15" width="2.29" height="38.45" fill="#ff0000"/>
<rect x="374.7" y="529.94" width="2.29" height="23.66" fill="#0000ff"/>
<rect x="376.94" y="541.98" width="2.29" height="11.62" fill="#0000ff"/>
<rect x="379.18" y="514.09" width="2.29" height="39.51" fill="#ff0000"/>
<rect x="381.41" y="536.27" width="2.29" height="17.33" fill="#ff0000"/>
<rect x="383.65" y="522.96" width="2.29" height="30.64" fill="#ff0000"/>
<rect x="385.88" y="526.77" width="2.29" height="26.83" fill="#ff0000"/>
<rect x="388.12" y="541.13" width="2.29" height="12.47" fill="#0000ff"/>
<rect x="390.36" y="538.39" width="2.29" height="15.21" fill="#0000ff"/>
<rect x="392.59" y="536.27" width="2.29" height="17.33" fill="#0000ff"/>
<rect x="394.83" y="530.99" width="2.29" height="22.61" fill="#ff0000"/>
<rect x="397.06" y="539.02" width="2.29" height="14.58" fill="#ff0000"/>
<rect x="399.3" y="544.94" width="2.29" height="8.66" fill="#0000ff"/>
<rect x="401.54" y="505.01" width="2.29" height="48.59" fill="#ff0000"/>
<rect x="403.77" y="484.93" width="2.29" height="68.67" fill="#ff0000"/>
<rect x="406.01" y="500.99" width="2.29" height="52.61" fill="#ff0000"/>
<rect x="408.24" y="524.02" width="2.29" height="29.58" fill="#0000ff"/>
<rect x="410.48" y="530.99" width="2.29" height="22.61" fill="#0000ff"/>
<rect x="412.72" y="525.92" width="2.29" height="27.68" fill="#0000ff"/>
<rect x="414.95" y="537.75" width="2.29" height="15.85" fill="#ff0000"/>
<rect x="417.19" y="447.96" width="2.29" height="105.64" fill="#ff0000"/>
<rect x="419.42" y="494.02" width="2.29" height="59.58" fill="#ff0000"/>
<rect x="421.66" y="515.78" width="2.29" height="37.82" fill="#ff0000"/>
<rect x="423.9" y="465.07" width="2.29" height="88.53" fill="#ff0000"/>
<rect x="426.13" y="510.92" width="2.29" height="42.68" fill="#0000ff"/>
<rect x="428.37" y="515.78" width="2.29" height="37.82" fill="#ff0000"/>
<rect x="430.6" y="520.01" width="2.29" height="33.59" fill="#0000ff"/>
<rect x="432.84" y="532.05" width="2.29" height="21.55" fill="#ff0000"/>
<rect x="435.08" y="465.92" width="2.29" height="87.68" fill="#ff0000"/>
<rect x="437.31" y="472.89" width="2.29" height="80.71" fill="#ff0000"/>
<rect x="439.55" y="507.12" width="2.29" height="46.48" fill="#0000ff"/>
<rect x="441.78" y="446.9" width="2.29" height="106.7" fill="#ff0000"/>
<rect x="444.02" y="498.88" width="2.29" height="54.72" fill="#ff0000"/>
<rect x="446.26" y="516.63" width="2.29" height="36.97" fill="#0000ff"/>
<rect x="448.49" y="439.08" width="2.29" height="114.52" fill="#ff0000"/>
<rect x="450.73" y="440.14" width="2.29" height="113.46" fill="#0000ff"/>
<rect x="452.96" y="476.06" width="2.29" height="77.54" fill="#ff0000"/>
<rect x="455.2" y="497.82" width="2.29" height="55.78" fill="#ff0000"/>
<rect x="457.44" y="507.75" width="2.29" height="45.85" fill="#ff0000"/>
<rect x="459.67" y="505.64" width="2.29" height="47.96" fill="#ff0000"/>
<rect x="461.91" y="505.64" width="2.29" height="47.96" fill="#ff0000"/>
<rect x="464.14" y="480.92" width="2.29" height="72.68" fill="#ff0000"/>
<rect x="466.38" y="515.15" width="2.29" height="38.45" fill="#0000ff"/>
<rect x="468.62" y="479.86" width="2.29" height="73.74" fill="#ff0000"/>
<rect x="470.85" y="516.63" width="2.29" height="36.97" fill="#ff0000"/>
<rect x="473.09" y="457.04" width="2.29" height="96.56" fill="#ff0000"/>
<rect x="475.32" y="446.9" width="2.29" height="106.7" fill="#ff0000"/>
<rect x="477.56" y="479.23" width="2.29" height="74.37" fill="#ff0000"/>
<rect x="479.8" y="423.24" width="2.29" height="130.36" fill="#0000ff"/>
<rect x="482.03" y="410.98" width="2.29" height="142.62" fill="#ff0000"/>
<rect x="484.27" y="477.12" width="2.29" height="76.48" fill="#0000ff"/>
<rect x="486.5" y="476.06" width="2.29" height="77.54" fill="#0000ff"/>
<rect x="488.74" y="416.9" width="2.29" height="136.7" fill="#ff0000"/>
<rect x="490.98" y="489.16" width="2.29" height="64.44" fill="#0000ff"/>
<rect x="493.21" y="489.16" width="2.29" height="64.44" fill="#0000ff"/>
<rect x="495.45" y="440.14" width="2.29" height="113.46" fill="#0000ff"/>
<rect x="497.68" y="465.07" width="2.29" height="88.53" fill="#ff0000"/>
<rect x="499.92" y="489.79" width="2.29" height="63.81" fill="#0000ff"/>
<rect x="502.16" y="483.03" width="2.29" height="70.57" fill="#0000ff"/>
<rect x="504.39" y="479.86" width="2.29" height="73.74" fill="#ff0000"/>
<rect x="506.63" y="498.88" width="2.29" height="54.72" fill="#ff0000"/>
<rect x="508.86" y="523.6" width="2.29" height="30" fill="#ff0000"/>
<rect x="511.1" y="509.86" width="2.29" height="43.74" fill="#0000ff"/>
<rect x="513.34" y="510.92" width="2.29" height="42.68" fill="#ff0000"/>
<rect x="515.57" y="528.88" width="2.29" height="24.72" fill="#0000ff"/>
<rect x="517.81" y="509.86" width="2.29" height="43.74" fill="#ff0000"/>
<rect x="520.04" y="526.13" width="2.29" height="27.47" fill="#ff0000"/>
<rect x="522.28" y="533.53" width="2.29" height="20.07" fill="#0000ff"/>
<rect x="524.52" y="503.53" width="2.29" height="50.07" fill="#ff0000"/>
<rect x="526.75" y="483.03" width="2.29" height="70.57" fill="#ff0000"/>
<rect x="528.99" y="514.09" width="2.29" height="39.51" fill="#0000ff"/>
<rect x="531.22" y="498.88" width="2.29" height="54.72" fill="#0000ff"/>
<rect x="533.46" y="515.78" width="2.29" height="37.82" fill="#0000ff"/>
<rect x="535.7" y="471.83" width="2.29" height="81.77" fill="#ff0000"/>
<rect x="537.93" y="477.12" width="2.29" height="76.48" fill="#0000ff"/>
<rect x="540.17" y="526.13" width="2.29" height="27.47" fill="#0000ff"/>
<rect x="542.4" y="506.7" width="2.29" height="46.9" fill="#ff0000"/>
<rect x="544.64" y="496.13" width="2.29" height="57.47" fill="#0000ff"/>
<rect x="546.88" y="506.7" width="2.29" height="46.9" fill="#0000ff"/>
<rect x="549.11" y="487.68" width="2.29" height="65.92" fill="#0000ff"/>
<rect x="551.35" y="487.68" width="2.29" height="65.92" fill="#ff0000"/>
<rect x="553.58" y="522.96" width="2.29" height="30.64" fill="#ff0000"/>
<rect x="555.82" y="450.07" width="2.29" height="103.53" fill="#0000ff"/>
<rect x="558.06" y="487.68" width="2.29" height="65.92" fill="#ff0000"/>
<rect x="560.29" y="526.13" width="2.29" height="27.47" fill="#0000ff"/>
<rect x="562.53" y="525.08" width="2.29" height="28.52" fill="#ff0000"/>
<rect x="564.76" y="536.91" width="2.29" height="16.69" fill="#ff0000"/>
<rect x="567" y="524.02" width="2.29" height="29.58" fill="#0000ff"/>
<rect x="569.24" y="530.99" width="2.29" height="22.61" fill="#0000ff"/>
<rect x="571.47" y="529.94" width="2.29" height="23.66" fill="#ff0000"/>
<rect x="573.71" y="529.94" width="2.29" height="23.66" fill="#ff0000"/>
<rect x="575.94" y="528.88" width="2.29" height="24.72" fill="#0000ff"/>
<rect x="578.18" y="522.12" width="2.29" height="31.48" fill="#0000ff"/>
<rect x="580.42" y="503.1" width="2.29" height="50.5" fill="#ff0000"/>
<rect x="582.65" y="530.99" width="2.29" height="22.61" fill="#0000ff"/>
<rect x="584.89" y="503.95" width="2.29" height="49.65" fill="#0000ff"/>
<rect x="587.12" y="528.88" width="2.29" height="24.72" fill="#0000ff"/>
<rect x="589.36" y="513.03" width="2.29" height="40.57" fill="#ff0000"/>
<rect x="591.6" y="520.85" width="2.29" height="32.75" fill="#0000ff"/>
<rect x="593.83" y="503.95" width="2.29" height="49.65" fill="#ff0000"/>
<rect x="596.07" y="495.07" width="2.29" height="58.53" fill="#0000ff"/>
<rect x="598.3" y="423.24" width="2.29" height="130.36" fill="#0000ff"/>
<rect x="600.54" y="482.4" width="2.29" height="71.2" fill="#0000ff"/>
<rect x="602.78" y="515.78" width="2.29" height="37.82" fill="#ff0000"/>
<rect x="605.01" y="532.05" width="2.29" height="21.55" fill="#0000ff"/>
<rect x="607.25" y="498.88" width="2.29" height="54.72" fill="#ff0000"/>
<rect x="609.48" y="516.84" width="2.29" height="36.76" fill="#0000ff"/>
<rect x="611.72" y="533.74" width="2.29" height="19.86" fill="#ff0000"/>
<rect x="613.96" y="538.81" width="2.29" height="14.79" fill="#ff0000"/>
<rect x="616.19" y="537.75" width="2.29" height="15.85" fill="#0000ff"/>
<rect x="618.43" y="541.98" width="2.29" height="11.62" fill="#0000ff"/>
<rect x="620.66" y="539.87" width="2.29" height="13.73" fill="#0000ff"/>
<rect x="622.9" y="541.98" width="2.29" height="11.62" fill="#0000ff"/>
<rect x="625.14" y="527.82" width="2.29" height="25.78" fill="#ff0000"/>
<rect x="627.37" y="537.75" width="2.29" height="15.85" fill="#0000ff"/>
<rect x="629.61" y="540.5" width="2.29" height="13.1" fill="#0000ff"/>
<rect x="631.84" y="537.75" width="2.29" height="15.85" fill="#0000ff"/>
<rect x="634.08" y="543.04" width="2.29" height="10.56" fill="#ff0000"/>
<rect x="636.32" y="543.04" width="2.29" height="10.56" fill="#ff0000"/>
<rect x="638.55" y="538.81" width="2.29" height="14.79" fill="#0000ff"/>
<rect x="640.79" y="545.78" width="2.29" height="7.82" fill="#ff0000"/>
<rect x="643.02" y="541.98" width="2.29" height="11.62" fill="#0000ff"/>
<rect x="645.26" y="543.04" width="2.29" height="10.56" fill="#0000ff"/>
<rect x="647.5" y="543.04" width="2.29" height="10.56" fill="#0000ff"/>
<rect x="649.73" y="538.81" width="2.29" height="14.79" fill="#ff0000"/>
<rect x="651.97" y="538.81" width="2.29" height="14.79" fill="#ff0000"/>
<rect x="654.2" y="546.84" width="2.29" height="6.76" fill="#0000ff"/>
<rect x="656.44" y="540.92" width="2.29" height="12.68" fill="#ff0000"/>
<rect x="658.68" y="537.75" width="2.29" height="15.85" fill="#0000ff"/>
<rect x="660.91" y="539.87" width="2.29" height="13.73" fill="#ff0000"/>
<rect x="663.15" y="538.81" width="2.29" height="14.79" fill="#0000ff"/>
<rect x="665.38" y="544.73" width="2.29" height="8.87" fill="#0000ff"/>
<rect x="667.62" y="547.26" width="2.29" height="6.34" fill="#0000ff"/>
<rect x="669.86" y="546.84" width="2.29" height="6.76" fill="#0000ff"/>
<rect x="672.09" y="541.98" width="2.29" height="11.62" fill="#ff0000"/>
<rect x="674.33" y="546.84" width="2.29" height="6.76" fill="#0000ff"/>
<rect x="676.56" y="543.04" width="2.29" height="10.56" fill="#ff0000"/>
<rect x="678.8" y="540.92" width="2.29" height="12.68" fill="#ff0000"/>
<rect x="681.04" y="521.91" width="2.29" height="31.69" fill="#ff0000"/>
<rect x="683.27" y="538.81" width="2.29" height="14.79" fill="#0000ff"/>
<rect x="685.51" y="543.04" width="2.29" height="10.56" fill="#0000ff"/>
<rect x="687.74" y="543.04" width="2.29" height="10.56" fill="#0000ff"/>
<rect x="689.98" y="526.13" width="2.29" height="27.47" fill="#0000ff"/>
<rect x="692.22" y="541.98" width="2.29" height="11.62" fill="#0000ff"/>
<rect x="694.45" y="538.81" width="2.29" height="14.79" fill="#ff0000"/>
<rect x="696.69" y="545.78" width="2.29" height="7.82" fill="#ff0000"/>
<rect x="698.92" y="547.26" width="2.29" height="6.34" fill="#0000ff"/>
<rect x="701.16" y="547.26" width="2.29" height="6.34" fill="#0000ff"/>
<rect x="703.4" y="547.9" width="2.29" height="5.7" fill="#0000ff"/>
<rect x="705.63" y="547.9" width="2.29" height="5.7" fill="#0000ff"/>
<rect x="707.87" y="545.96" width="2.29" height="7.64" fill="#ff0000"/>
<rect x="710.1" y="547.83" width="2.29" height="5.77" fill="#0000ff"/>
<rect x="712.34" y="547.83" width="2.29" height="5.77" fill="#ff0000"/>
<rect x="714.58" y="544.95" width="2.29" height="8.65" fill="#ff0000"/>
<rect x="716.81" y="548.84" width="2.29" height="4.76" fill="#0000ff"/>
<rect x="719.05" y="546.82" width="2.29" height="6.78" fill="#0000ff"/>
<rect x="721.28" y="545.96" width="2.29" height="7.64" fill="#ff0000"/>
<rect x="723.52" y="545.96" width="2.29" height="7.64" fill="#ff0000"/>
<rect x="725.76" y="539.9" width="2.29" height="13.7" fill="#0000ff"/>
<rect x="727.99" y="539.9" width="2.29" height="13.7" fill="#0000ff"/>
<rect x="730.23" y="547.83" width="2.29" height="5.77" fill="#ff0000"/>
<rect x="732.46" y="543.94" width="2.29" height="9.66" fill="#ff0000"/>
<rect x="734.7" y="547.83" width="2.29" height="5.77" fill="#ff0000"/>
<rect x="736.94" y="538.89" width="2.29" height="14.71" fill="#0000ff"/>
<rect x="739.17" y="544.95" width="2.29" height="8.65" fill="#ff0000"/>
<rect x="741.41" y="547.83" width="2.29" height="5.77" fill="#0000ff"/>
<rect x="743.64" y="549.99" width="2.29" height="3.61" fill="#ff0000"/>
<rect x="745.88" y="548.84" width="2.29" height="4.76" fill="#0000ff"/>
<rect x="748.12" y="548.84" width="2.29" height="4.76" fill="#ff0000"/>
<rect x="750.35" y="546.82" width="2.29" height="6.78" fill="#ff0000"/>
<rect x="752.59" y="514.94" width="2.29" height="38.66" fill="#ff0000"/>
<rect x="754.82" y="537.73" width="2.29" height="15.87" fill="#0000ff"/>
<rect x="757.06" y="517.11" width="2.29" height="36.49" fill="#ff0000"/>
<rect x="759.3" y="525.04" width="2.29" height="28.56" fill="#0000ff"/>
<rect x="761.53" y="538.89" width="2.29" height="14.71" fill="#0000ff"/>
<rect x="763.77" y="514.94" width="2.29" height="38.66" fill="#ff0000"/>
<rect x="766" y="537.01" width="2.29" height="16.59" fill="#0000ff"/>
<rect x="768.24" y="541.77" width="2.29" height="11.83" fill="#0000ff"/>
<rect x="770.48" y="545.96" width="2.29" height="7.64" fill="#0000ff"/>
<rect x="772.71" y="547.83" width="2.29" height="5.77" fill="#0000ff"/>
<rect x="774.95" y="547.83" width="2.29" height="5.77" fill="#0000ff"/>
<rect x="777.18" y="546.82" width="2.29" height="6.78" fill="#ff0000"/>
<rect x="779.42" y="541.77" width="2.29" height="11.83" fill="#ff0000"/>
<rect x="781.66" y="544.95" width="2.29" height="8.65" fill="#0000ff"/>
<rect x="783.89" y="530.81" width="2.29" height="22.79" fill="#0000ff"/>
<rect x="786.13" y="541.77" width="2.29" height="11.83" fill="#0000ff"/>
<rect x="788.36" y="543.94" width="2.29" height="9.66" fill="#0000ff"/>
<rect x="790.6" y="546.82" width="2.29" height="6.78" fill="#ff0000"/>
<rect x="792.84" y="546.82" width="2.29" height="6.78" fill="#0000ff"/>
<rect x="795.07" y="543.94" width="2.29" height="9.66" fill="#ff0000"/>
<rect x="797.31" y="543.94" width="2.29" height="9.66" fill="#0000ff"/>
<rect x="799.54" y="522.88" width="2.29" height="30.72" fill="#0000ff"/>
<rect x="801.78" y="537.01" width="2.29" height="16.59" fill="#ff0000"/>
<rect x="804.02" y="542.78" width="2.29" height="10.82" fill="#0000ff"/>
<rect x="806.25" y="541.77" width="2.29" height="11.83" fill="#ff0000"/>
<rect x="808.49" y="537.01" width="2.29" height="16.59" fill="#0000ff"/>
<rect x="810.72" y="544.95" width="2.29" height="8.65" fill="#0000ff"/>
<rect x="812.96" y="542.78" width="2.29" height="10.82" fill="#0000ff"/>
<rect x="815.2" y="541.77" width="2.29" height="11.83" fill="#0000ff"/>
<rect x="817.43" y="543.94" width="2.29" height="9.66" fill="#ff0000"/>
<rect x="819.67" y="544.95" width="2.29" height="8.65" fill="#ff0000"/>
<rect x="821.9" y="545.96" width="2.29" height="7.64" fill="#ff0000"/>
<rect x="824.14" y="547.83" width="2.29" height="5.77" fill="#0000ff"/>
<rect x="826.38" y="547.83" width="2.29" height="5.77" fill="#0000ff"/>
<rect x="828.61" y="548.84" width="2.29" height="4.76" fill="#0000ff"/>
<rect x="830.85" y="546.82" width="2.29" height="6.78" fill="#ff0000"/>
<rect x="833.08" y="547.83" width="2.29" height="5.77" fill="#ff0000"/>
<rect x="835.32" y="547.83" width="2.29" height="5.77" fill="#0000ff"/>
<rect x="837.56" y="547.83" width="2.29" height="5.77" fill="#0000ff"/>
<rect x="839.79" y="549.99" width="2.29" height="3.61" fill="#ff0000"/>
<rect x="842.03" y="542.78" width="2.29" height="10.82" fill="#0000ff"/>
<rect x="844.26" y="543.94" width="2.29" height="9.66" fill="#ff0000"/>
<rect x="846.5" y="546.82" width="2.29" height="6.78" fill="#0000ff"/>
<rect x="848.74" y="543.94" width="2.29" height="9.66" fill="#ff0000"/>
<rect x="850.97" y="548.84" width="2.29" height="4.76" fill="#ff0000"/>
<rect x="853.21" y="541.77" width="2.29" height="11.83" fill="#0000ff"/>
<rect x="855.44" y="546.82" width="2.29" height="6.78" fill="#ff0000"/>
<rect x="857.68" y="547.83" width="2.29" height="5.77" fill="#ff0000"/>
<rect x="859.92" y="549.99" width="2.29" height="3.61" fill="#0000ff"/>
<rect x="862.15" y="548.84" width="2.29" height="4.76" fill="#0000ff"/>
<rect x="864.39" y="546.82" width="2.29" height="6.78" fill="#ff0000"/>
<rect x="866.62" y="468.79" width="2.29" height="84.81" fill="#ff0000"/>
<rect x="868.86" y="516.82" width="2.29" height="36.78" fill="#ff0000"/>
<rect x="871.1" y="541.77" width="2.29" height="11.83" fill="#0000ff"/>
<rect x="873.33" y="532.97" width="2.29" height="20.63" fill="#ff0000"/>
<rect x="875.57" y="544.95" width="2.29" height="8.65" fill="#0000ff"/>
<rect x="877.8" y="545.96" width="2.29" height="7.64" fill="#0000ff"/>
<rect x="880.04" y="547.83" width="2.29" height="5.77" fill="#0000ff"/>
<rect x="882.28" y="546.82" width="2.29" height="6.78" fill="#ff0000"/>
<rect x="884.51" y="548.26" width="2.29" height="5.34" fill="#0000ff"/>
<rect x="886.75" y="548.26" width="2.29" height="5.34" fill="#0000ff"/>
<rect x="888.98" y="548.26" width="2.29" height="5.34" fill="#0000ff"/>
<rect x="891.22" y="549.99" width="2.29" height="3.61" fill="#ff0000"/>
<rect x="893.46" y="549.99" width="2.29" height="3.61" fill="#0000ff"/>
<rect x="895.69" y="549.99" width="2.29" height="3.61" fill="#ff0000"/>
<rect x="897.93" y="549.99" width="2.29" height="3.61" fill="#ff0000"/>
<rect x="900.16" y="549.99" width="2.29" height="3.61" fill="#0000ff"/>
<rect x="902.4" y="550.72" width="2.29" height="2.88" fill="#ff0000"/>
<rect x="904.64" y="550.72" width="2.29" height="2.88" fill="#ff0000"/>
<rect x="906.87" y="550.72" width="2.29" height="2.88" fill="#ff0000"/>
<rect x="909.11" y="549.99" width="2.29" height="3.61" fill="#0000ff"/>
<rect x="911.34" y="549.99" width="2.29" height="3.61" fill="#0000ff"/>
<rect x="913.58" y="549.99" width="2.29" height="3.61" fill="#0000ff"/>
<rect x="915.82" y="551" width="2.29" height="2.6" fill="#ff0000"/>
<rect x="918.05" y="549.99" width="2.29" height="3.61" fill="#0000ff"/>
<rect x="920.29" y="549.99" width="2.29" height="3.61" fill="#0000ff"/>
<rect x="922.52" y="548.84" width="2.29" height="4.76" fill="#ff0000"/>
<rect x="924.76" y="551" width="2.29" height="2.6" fill="#0000ff"/>
<rect x="927" y="551" width="2.29" height="2.6" fill="#0000ff"/>
<rect x="929.23" y="549.99" width="2.29" height="3.61" fill="#0000ff"/>
<rect x="931.47" y="551" width="2.29" height="2.6" fill="#0000ff"/>
<rect x="933.7" y="551" width="2.29" height="2.6" fill="#0000ff"/>
<rect x="935.94" y="551" width="2.29" height="2.6" fill="#0000ff"/>
<rect x="938.18" y="549.99" width="2.29" height="3.61" fill="#0000ff"/>
<rect x="940.41" y="549.99" width="2.29" height="3.61" fill="#0000ff"/>
<rect x="942.65" y="548.84" width="2.29" height="4.76" fill="#ff0000"/>
<rect x="944.88" y="548.84" width="2.29" height="4.76" fill="#ff0000"/>
<rect x="947.12" y="549.99" width="2.29" height="3.61" fill="#0000ff"/>
<rect x="949.36" y="549.99" width="2.29" height="3.61" fill="#0000ff"/>
<rect x="951.59" y="551" width="2.29" height="2.6" fill="#ff0000"/>
<rect x="953.83" y="551" width="2.29" height="2.6" fill="#ff0000"/>
<rect x="956.06" y="549.99" width="2.29" height="3.61" fill="#0000ff"/>
<rect x="958.3" y="551.72" width="2.29" height="1.88" fill="#ff0000"/>
<rect x="960.54" y="549.99" width="2.29" height="3.61" fill="#0000ff"/>
<rect x="962.77" y="549.99" width="2.29" height="3.61" fill="#0000ff"/>
<rect x="965.01" y="551" width="2.29" height="2.6" fill="#ff0000"/>
<rect x="967.24" y="551" width="2.29" height="2.6" fill="#0000ff"/>
<rect x="969.48" y="542.78" width="2.29" height="10.82" fill="#ff0000"/>
<rect x="971.72" y="545.96" width="2.29" height="7.64" fill="#ff0000"/>
<rect x="973.95" y="522.88" width="2.29" height="30.72" fill="#ff0000"/>
<rect x="976.19" y="526.92" width="2.29" height="26.68" fill="#ff0000"/>
<rect x="978.42" y="539.9" width="2.29" height="13.7" fill="#0000ff"/>
<rect x="980.66" y="532.97" width="2.29" height="20.63" fill="#ff0000"/>
<rect x="982.9" y="532.97" width="2.29" height="20.63" fill="#ff0000"/>
<rect x="985.13" y="545.96" width="2.29" height="7.64" fill="#0000ff"/>
<rect x="987.37" y="525.91" width="2.29" height="27.69" fill="#ff0000"/>
<rect x="989.6" y="527.64" width="2.29" height="25.96" fill="#ff0000"/>
<rect x="991.84" y="515.81" width="2.29" height="37.79" fill="#0000ff"/>
<rect x="994.08" y="543.94" width="2.29" height="9.66" fill="#0000ff"/>
<rect x="996.31" y="540.91" width="2.29" height="12.69" fill="#ff0000"/>
<rect x="998.55" y="477.88" width="2.29" height="75.72" fill="#ff0000"/>
<rect x="1000.78" y="538.89" width="2.29" height="14.71" fill="#0000ff"/>
<rect x="1003.02" y="541.77" width="2.29" height="11.83" fill="#0000ff"/>
<rect x="1005.26" y="534.85" width="2.29" height="18.75" fill="#ff0000"/>
<rect x="1007.49" y="530.81" width="2.29" height="22.79" fill="#0000ff"/>
<rect x="1009.73" y="540.91" width="2.29" height="12.69" fill="#ff0000"/>
<rect x="1011.96" y="535.86" width="2.29" height="17.74" fill="#ff0000"/>
<rect x="1014.2" y="525.04" width="2.29" height="28.56" fill="#ff0000"/>
<rect x="1016.44" y="541.77" width="2.29" height="11.83" fill="#0000ff"/>
<rect x="1018.67" y="542.78" width="2.29" height="10.82" fill="#ff0000"/>
<rect x="1020.91" y="543.94" width="2.29" height="9.66" fill="#0000ff"/>
<rect x="1023.14" y="537.01" width="2.29" height="16.59" fill="#0000ff"/>
<rect x="1025.38" y="547.83" width="2.29" height="5.77" fill="#0000ff"/>
<rect x="1027.62" y="549.27" width="2.29" height="4.33" fill="#0000ff"/>
<rect x="1029.85" y="549.27" width="2.29" height="4.33" fill="#0000ff"/>
<rect x="1032.09" y="545.96" width="2.29" height="7.64" fill="#ff0000"/>
<rect x="1034.32" y="534.85" width="2.29" height="18.75" fill="#0000ff"/>
<rect x="1036.56" y="548.84" width="2.29" height="4.76" fill="#ff0000"/>
<rect x="1038.8" y="506" width="2.29" height="47.6" fill="#0000ff"/>
<rect x="1041.03" y="521.87" width="2.29" height="31.73" fill="#ff0000"/>
<rect x="1043.27" y="538.8" width="2.29" height="14.8" fill="#ff0000"/>
<rect x="1045.5" y="515.94" width="2.29" height="37.66" fill="#ff0000"/>
<rect x="1047.74" y="481.84" width="2.29" height="71.76" fill="#ff0000"/>
<rect x="1049.98" y="527.83" width="2.29" height="25.77" fill="#0000ff"/>
<rect x="1052.21" y="539.72" width="2.29" height="13.88" fill="#0000ff"/>
<rect x="1054.45" y="522.94" width="2.29" height="30.66" fill="#0000ff"/>
<rect x="1056.68" y="517.92" width="2.29" height="35.68" fill="#0000ff"/>
<rect x="1058.92" y="501" width="2.29" height="52.6" fill="#ff0000"/>
<rect x="1061.16" y="527.83" width="2.29" height="25.77" fill="#ff0000"/>
<rect x="1063.39" y="539.72" width="2.29" height="13.88" fill="#0000ff"/>
<rect x="1065.63" y="522.94" width="2.29" height="30.66" fill="#ff0000"/>
<rect x="1067.86" y="538.8" width="2.29" height="14.8" fill="#0000ff"/>
<rect x="1070.1" y="543.82" width="2.29" height="9.78" fill="#ff0000"/>
<rect x="1072.34" y="546.99" width="2.29" height="6.61" fill="#0000ff"/>
<rect x="1074.57" y="547.92" width="2.29" height="5.68" fill="#0000ff"/>
<rect x="1076.81" y="547.92" width="2.29" height="5.68" fill="#0000ff"/>
<rect x="1079.04" y="548.97" width="2.29" height="4.63" fill="#0000ff"/>
<rect x="1081.28" y="548.97" width="2.29" height="4.63" fill="#0000ff"/>
<rect x="1083.52" y="550.03" width="2.29" height="3.57" fill="#ff0000"/>
<rect x="1085.75" y="550.03" width="2.29" height="3.57" fill="#0000ff"/>
<rect x="1087.99" y="550.03" width="2.29" height="3.57" fill="#0000ff"/>
<rect x="1090.22" y="541.97" width="2.29" height="11.63" fill="#0000ff"/>
<rect x="1092.46" y="550.96" width="2.29" height="2.64" fill="#0000ff"/>
<rect x="1094.7" y="550.03" width="2.29" height="3.57" fill="#ff0000"/>
<rect x="1096.93" y="546.99" width="2.29" height="6.61" fill="#ff0000"/>
<rect x="1099.17" y="547.92" width="2.29" height="5.68" fill="#ff0000"/>
<rect x="1101.4" y="550.03" width="2.29" height="3.57" fill="#ff0000"/>
<rect x="1103.64" y="547.92" width="2.29" height="5.68" fill="#ff0000"/>
<rect x="1105.88" y="547.92" width="2.29" height="5.68" fill="#ff0000"/>
<rect x="1108.11" y="550.03" width="2.29" height="3.57" fill="#0000ff"/>
<rect x="1110.35" y="550.03" width="2.29" height="3.57" fill="#0000ff"/>
<rect x="1112.58" y="547.92" width="2.29" height="5.68" fill="#ff0000"/>
<rect x="1114.82" y="543.82" width="2.29" height="9.78" fill="#ff0000"/>
<rect x="1117.06" y="542.76" width="2.29" height="10.84" fill="#0000ff"/>
<rect x="1119.29" y="547.92" width="2.29" height="5.68" fill="#0000ff"/>
<rect x="1121.53" y="548.97" width="2.29" height="4.63" fill="#0000ff"/>
<rect x="1123.76" y="548.97" width="2.29" height="4.63" fill="#0000ff"/>
<rect x="1126" y="547.92" width="2.29" height="5.68" fill="#ff0000"/>
<rect x="1128.24" y="548.97" width="2.29" height="4.63" fill="#0000ff"/>
<rect x="1130.47" y="548.97" width="2.29" height="4.63" fill="#0000ff"/>
<rect x="1132.71" y="543.82" width="2.29" height="9.78" fill="#0000ff"/>
<rect x="1134.94" y="544.88" width="2.29" height="8.72" fill="#ff0000"/>
<rect x="1137.18" y="546.99" width="2.29" height="6.61" fill="#0000ff"/>
<rect x="1139.42" y="545.94" width="2.29" height="7.66" fill="#ff0000"/>
<rect x="1141.65" y="509.99" width="2.29" height="43.61" fill="#ff0000"/>
</g>
<g shape-rendering="crispEdges">
<rect x="8" y="706.48" width="2.29" height="6.32" fill="#e81c10"/>
<rect x="10.24" y="701.66" width="2.29" height="11.14" fill="#e81c10"/>
<rect x="12.47" y="701.68" width="2.29" height="11.12" fill="#1a5fcc"/>
<rect x="14.71" y="701.78" width="2.29" height="11.02" fill="#1a5fcc"/>
<rect x="16.94" y="706.69" width="2.29" height="6.11" fill="#1a5fcc"/>
<rect x="19.18" y="697.83" width="2.29" height="14.97" fill="#e81c10"/>
<rect x="21.42" y="705.8" width="2.29" height="7" fill="#1a5fcc"/>
<rect x="23.65" y="705.81" width="2.29" height="6.99" fill="#1a5fcc"/>
<rect x="25.89" y="705.91" width="2.29" height="6.89" fill="#1a5fcc"/>
<rect x="28.12" y="705.88" width="2.29" height="6.92" fill="#e81c10"/>
<rect x="30.36" y="705.93" width="2.29" height="6.87" fill="#1a5fcc"/>
<rect x="32.6" y="702.53" width="2.29" height="10.27" fill="#e81c10"/>
<rect x="34.83" y="702.34" width="2.29" height="10.46" fill="#e81c10"/>
<rect x="37.07" y="706.08" width="2.29" height="6.72" fill="#1a5fcc"/>
<rect x="39.3" y="706.08" width="2.29" height="6.72" fill="#e81c10"/>
<rect x="41.54" y="706.05" width="2.29" height="6.75" fill="#e81c10"/>
<rect x="43.78" y="705.83" width="2.29" height="6.97" fill="#e81c10"/>
<rect x="46.01" y="705.8" width="2.29" height="7" fill="#e81c10"/>
<rect x="48.25" y="669.33" width="2.29" height="43.47" fill="#e81c10"/>
<rect x="50.48" y="695.43" width="2.29" height="17.37" fill="#1a5fcc"/>
<rect x="52.72" y="695.53" width="2.29" height="17.27" fill="#1a5fcc"/>
<rect x="54.96" y="702.35" width="2.29" height="10.45" fill="#1a5fcc"/>
<rect x="57.19" y="698.33" width="2.29" height="14.47" fill="#e81c10"/>
<rect x="59.43" y="702.19" width="2.29" height="10.61" fill="#1a5fcc"/>
<rect x="61.66" y="705.81" width="2.29" height="6.99" fill="#1a5fcc"/>
<rect x="63.9" y="702.33" width="2.29" height="10.47" fill="#e81c10"/>
<rect x="66.14" y="705.72" width="2.29" height="7.08" fill="#1a5fcc"/>
<rect x="68.37" y="705.94" width="2.29" height="6.86" fill="#1a5fcc"/>
<rect x="70.61" y="705.83" width="2.29" height="6.97" fill="#e81c10"/>
<rect x="72.84" y="705.89" width="2.29" height="6.91" fill="#1a5fcc"/>
<rect x="75.08" y="705.73" width="2.29" height="7.07" fill="#e81c10"/>
<rect x="77.32" y="705.72" width="2.29" height="7.08" fill="#e81c10"/>
<rect x="79.55" y="705.76" width="2.29" height="7.04" fill="#1a5fcc"/>
<rect x="81.79" y="705.79" width="2.29" height="7.01" fill="#1a5fcc"/>
<rect x="84.02" y="694.88" width="2.29" height="17.92" fill="#e81c10"/>
<rect x="86.26" y="694.81" width="2.29" height="17.99" fill="#e81c10"/>
<rect x="88.5" y="702.27" width="2.29" height="10.53" fill="#1a5fcc"/>
<rect x="90.73" y="705.74" width="2.29" height="7.06" fill="#1a5fcc"/>
<rect x="92.97" y="705.79" width="2.29" height="7.01" fill="#1a5fcc"/>
<rect x="95.2" y="698.55" width="2.29" height="14.25" fill="#e81c10"/>
<rect x="97.44" y="705.78" width="2.29" height="7.02" fill="#1a5fcc"/>
<rect x="99.68" y="706.02" width="2.29" height="6.78" fill="#1a5fcc"/>
<rect x="101.91" y="703.16" width="2.29" height="9.64" fill="#e81c10"/>
<rect x="104.15" y="677.2" width="2.29" height="35.6" fill="#e81c10"/>
<rect x="106.38" y="695.18" width="2.29" height="17.62" fill="#1a5fcc"/>
<rect x="108.62" y="701.13" width="2.29" height="11.67" fill="#1a5fcc"/>
<rect x="110.86" y="700.94" width="2.29" height="11.86" fill="#e81c10"/>
<rect x="113.09" y="690.25" width="2.29" height="22.55" fill="#e81c10"/>
<rect x="115.33" y="697.23" width="2.29" height="15.57" fill="#1a5fcc"/>
<rect x="117.56" y="697.68" width="2.29" height="15.12" fill="#1a5fcc"/>
<rect x="119.8" y="702.73" width="2.29" height="10.07" fill="#1a5fcc"/>
<rect x="122.04" y="701.66" width="2.29" height="11.14" fill="#e81c10"/>
<rect x="124.27" y="701.66" width="2.29" height="11.14" fill="#1a5fcc"/>
<rect x="126.51" y="690.69" width="2.29" height="22.11" fill="#e81c10"/>
<rect x="128.74" y="697.97" width="2.29" height="14.83" fill="#1a5fcc"/>
<rect x="130.98" y="697.79" width="2.29" height="15.01" fill="#e81c10"/>
<rect x="133.22" y="705.38" width="2.29" height="7.42" fill="#1a5fcc"/>
<rect x="135.45" y="702.39" width="2.29" height="10.41" fill="#e81c10"/>
<rect x="137.69" y="705.28" width="2.29" height="7.52" fill="#1a5fcc"/>
<rect x="139.92" y="705.13" width="2.29" height="7.67" fill="#e81c10"/>
<rect x="142.16" y="705.33" width="2.29" height="7.47" fill="#1a5fcc"/>
<rect x="144.4" y="705.3" width="2.29" height="7.5" fill="#e81c10"/>
<rect x="146.63" y="698.02" width="2.29" height="14.78" fill="#e81c10"/>
<rect x="148.87" y="705.24" width="2.29" height="7.56" fill="#1a5fcc"/>
<rect x="151.1" y="705.16" width="2.29" height="7.64" fill="#e81c10"/>
<rect x="153.34" y="705.1" width="2.29" height="7.7" fill="#e81c10"/>
<rect x="155.58" y="702.26" width="2.29" height="10.54" fill="#e81c10"/>
<rect x="157.81" y="707.45" width="2.29" height="5.35" fill="#1a5fcc"/>
<rect x="160.05" y="707.43" width="2.29" height="5.37" fill="#e81c10"/>
<rect x="162.28" y="707.49" width="2.29" height="5.31" fill="#1a5fcc"/>
<rect x="164.52" y="707.51" width="2.29" height="5.29" fill="#1a5fcc"/>
<rect x="166.76" y="707.38" width="2.29" height="5.42" fill="#e81c10"/>
<rect x="168.99" y="707.11" width="2.29" height="5.69" fill="#e81c10"/>
<rect x="171.23" y="707" width="2.29" height="5.8" fill="#e81c10"/>
<rect x="173.46" y="704.53" width="2.29" height="8.27" fill="#e81c10"/>
<rect x="175.7" y="707.26" width="2.29" height="5.54" fill="#1a5fcc"/>
<rect x="177.94" y="707.28" width="2.29" height="5.52" fill="#1a5fcc"/>
<rect x="180.17" y="701.73" width="2.29" height="11.07" fill="#e81c10"/>
<rect x="182.41" y="702.57" width="2.29" height="10.23" fill="#1a5fcc"/>
<rect x="184.64" y="699.15" width="2.29" height="13.65" fill="#e81c10"/>
<rect x="186.88" y="699.04" width="2.29" height="13.76" fill="#e81c10"/>
<rect x="189.12" y="702.17" width="2.29" height="10.63" fill="#1a5fcc"/>
<rect x="191.35" y="707.33" width="2.29" height="5.47" fill="#1a5fcc"/>
<rect x="193.59" y="707.27" width="2.29" height="5.53" fill="#e81c10"/>
<rect x="195.82" y="707.27" width="2.29" height="5.53" fill="#1a5fcc"/>
<rect x="198.06" y="707.29" width="2.29" height="5.51" fill="#1a5fcc"/>
<rect x="200.3" y="707.16" width="2.29" height="5.64" fill="#e81c10"/>
<rect x="202.53" y="702.63" width="2.29" height="10.17" fill="#e81c10"/>
<rect x="204.77" y="704.96" width="2.29" height="7.84" fill="#1a5fcc"/>
<rect x="207" y="705.07" width="2.29" height="7.73" fill="#1a5fcc"/>
<rect x="209.24" y="704.95" width="2.29" height="7.85" fill="#e81c10"/>
<rect x="211.48" y="707.68" width="2.29" height="5.12" fill="#1a5fcc"/>
<rect x="213.71" y="707.8" width="2.29" height="5" fill="#1a5fcc"/>
<rect x="215.95" y="707.61" width="2.29" height="5.19" fill="#e81c10"/>
<rect x="218.18" y="705.21" width="2.29" height="7.59" fill="#e81c10"/>
<rect x="220.42" y="705.33" width="2.29" height="7.47" fill="#1a5fcc"/>
<rect x="222.66" y="705.05" width="2.29" height="7.75" fill="#e81c10"/>
<rect x="224.89" y="707.83" width="2.29" height="4.97" fill="#1a5fcc"/>
<rect x="227.13" y="707.74" width="2.29" height="5.06" fill="#e81c10"/>
<rect x="229.36" y="707.67" width="2.29" height="5.13" fill="#e81c10"/>
<rect x="231.6" y="705.18" width="2.29" height="7.62" fill="#e81c10"/>
<rect x="233.84" y="705.24" width="2.29" height="7.56" fill="#1a5fcc"/>
<rect x="236.07" y="707.74" width="2.29" height="5.06" fill="#1a5fcc"/>
<rect x="238.31" y="707.82" width="2.29" height="4.98" fill="#1a5fcc"/>
<rect x="240.54" y="707.68" width="2.29" height="5.12" fill="#e81c10"/>
<rect x="242.78" y="707.56" width="2.29" height="5.24" fill="#e81c10"/>
<rect x="245.02" y="701.8" width="2.29" height="11" fill="#e81c10"/>
<rect x="247.25" y="701.32" width="2.29" height="11.48" fill="#e81c10"/>
<rect x="249.49" y="707.15" width="2.29" height="5.65" fill="#1a5fcc"/>
<rect x="251.72" y="707.34" width="2.29" height="5.46" fill="#1a5fcc"/>
<rect x="253.96" y="707.43" width="2.29" height="5.37" fill="#1a5fcc"/>
<rect x="256.2" y="707.34" width="2.29" height="5.46" fill="#e81c10"/>
<rect x="258.43" y="687.47" width="2.29" height="25.33" fill="#e81c10"/>
<rect x="260.67" y="704.95" width="2.29" height="7.85" fill="#1a5fcc"/>
<rect x="262.9" y="699.94" width="2.29" height="12.86" fill="#e81c10"/>
<rect x="265.14" y="691.69" width="2.29" height="21.11" fill="#e81c10"/>
<rect x="267.38" y="697.91" width="2.29" height="14.89" fill="#1a5fcc"/>
<rect x="269.61" y="705.06" width="2.29" height="7.74" fill="#1a5fcc"/>
<rect x="271.85" y="705.28" width="2.29" height="7.52" fill="#1a5fcc"/>
<rect x="274.08" y="704.96" width="2.29" height="7.84" fill="#e81c10"/>
<rect x="276.32" y="701.91" width="2.29" height="10.89" fill="#e81c10"/>
<rect x="278.56" y="705.06" width="2.29" height="7.74" fill="#1a5fcc"/>
<rect x="280.79" y="707.64" width="2.29" height="5.16" fill="#1a5fcc"/>
<rect x="283.03" y="707.65" width="2.29" height="5.15" fill="#1a5fcc"/>
<rect x="285.26" y="697.51" width="2.29" height="15.29" fill="#e81c10"/>
<rect x="287.5" y="663.43" width="2.29" height="49.37" fill="#e81c10"/>
<rect x="289.74" y="692.17" width="2.29" height="20.63" fill="#1a5fcc"/>
<rect x="291.97" y="698.09" width="2.29" height="14.71" fill="#1a5fcc"/>
<rect x="294.21" y="695.51" width="2.29" height="17.29" fill="#e81c10"/>
<rect x="296.44" y="703.43" width="2.29" height="9.37" fill="#1a5fcc"/>
<rect x="298.68" y="703.47" width="2.29" height="9.33" fill="#1a5fcc"/>
<rect x="300.92" y="703.36" width="2.29" height="9.44" fill="#e81c10"/>
<rect x="303.15" y="703.44" width="2.29" height="9.36" fill="#1a5fcc"/>
<rect x="305.39" y="702.57" width="2.29" height="10.23" fill="#e81c10"/>
<rect x="307.62" y="705.57" width="2.29" height="7.23" fill="#1a5fcc"/>
<rect x="309.86" y="705.2" width="2.29" height="7.6" fill="#e81c10"/>
<rect x="312.1" y="704.9" width="2.29" height="7.9" fill="#e81c10"/>
<rect x="314.33" y="673.11" width="2.29" height="39.69" fill="#e81c10"/>
<rect x="316.57" y="704.6" width="2.29" height="8.2" fill="#1a5fcc"/>
<rect x="318.8" y="701.48" width="2.29" height="11.32" fill="#e81c10"/>
<rect x="321.04" y="704.43" width="2.29" height="8.37" fill="#1a5fcc"/>
<rect x="323.28" y="704.45" width="2.29" height="8.35" fill="#1a5fcc"/>
<rect x="325.51" y="699.73" width="2.29" height="13.07" fill="#e81c10"/>
<rect x="327.75" y="699.45" width="2.29" height="13.35" fill="#e81c10"/>
<rect x="329.98" y="685.26" width="2.29" height="27.54" fill="#e81c10"/>
<rect x="332.22" y="694.7" width="2.29" height="18.1" fill="#1a5fcc"/>
<rect x="334.46" y="645.2" width="2.29" height="67.6" fill="#e81c10"/>
<rect x="336.69" y="692.51" width="2.29" height="20.29" fill="#1a5fcc"/>
<rect x="338.93" y="692.73" width="2.29" height="20.07" fill="#1a5fcc"/>
<rect x="341.16" y="696.94" width="2.29" height="15.86" fill="#1a5fcc"/>
<rect x="343.4" y="696.57" width="2.29" height="16.23" fill="#e81c10"/>
<rect x="345.64" y="699.94" width="2.29" height="12.86" fill="#1a5fcc"/>
<rect x="347.87" y="701.1" width="2.29" height="11.7" fill="#1a5fcc"/>
<rect x="350.11" y="673.79" width="2.29" height="39.01" fill="#e81c10"/>
<rect x="352.34" y="655.62" width="2.29" height="57.18" fill="#e81c10"/>
<rect x="354.58" y="636.33" width="2.29" height="76.47" fill="#e81c10"/>
<rect x="356.82" y="574.54" width="2.29" height="138.26" fill="#e81c10"/>
<rect x="359.05" y="583.76" width="2.29" height="129.04" fill="#1a5fcc"/>
<rect x="361.29" y="681.78" width="2.29" height="31.02" fill="#1a5fcc"/>
<rect x="363.52" y="620.9" width="2.29" height="91.9" fill="#e81c10"/>
<rect x="365.76" y="678.05" width="2.29" height="34.75" fill="#1a5fcc"/>
<rect x="368" y="691.29" width="2.29" height="21.51" fill="#1a5fcc"/>
<rect x="370.23" y="681.04" width="2.29" height="31.76" fill="#e81c10"/>
<rect x="372.47" y="665.85" width="2.29" height="46.95" fill="#e81c10"/>
<rect x="374.7" y="684.72" width="2.29" height="28.08" fill="#1a5fcc"/>
<rect x="376.94" y="699.77" width="2.29" height="13.03" fill="#1a5fcc"/>
<rect x="379.18" y="666.47" width="2.29" height="46.33" fill="#e81c10"/>
<rect x="381.41" y="695.02" width="2.29" height="17.78" fill="#1a5fcc"/>
<rect x="383.65" y="682.66" width="2.29" height="30.14" fill="#e81c10"/>
<rect x="385.88" y="686.96" width="2.29" height="25.84" fill="#1a5fcc"/>
<rect x="388.12" y="700.8" width="2.29" height="12" fill="#1a5fcc"/>
<rect x="390.36" y="695.11" width="2.29" height="17.69" fill="#e81c10"/>
<rect x="392.59" y="694.81" width="2.29" height="17.99" fill="#e81c10"/>
<rect x="394.83" y="685.6" width="2.29" height="27.2" fill="#e81c10"/>
<rect x="397.06" y="696.9" width="2.29" height="15.9" fill="#1a5fcc"/>
<rect x="399.3" y="703.05" width="2.29" height="9.75" fill="#1a5fcc"/>
<rect x="401.54" y="671.78" width="2.29" height="41.02" fill="#e81c10"/>
<rect x="403.77" y="659.47" width="2.29" height="53.33" fill="#e81c10"/>
<rect x="406.01" y="670.42" width="2.29" height="42.38" fill="#1a5fcc"/>
<rect x="408.24" y="689.66" width="2.29" height="23.14" fill="#1a5fcc"/>
<rect x="410.48" y="695.33" width="2.29" height="17.47" fill="#1a5fcc"/>
<rect x="412.72" y="690.35" width="2.29" height="22.45" fill="#e81c10"/>
<rect x="414.95" y="699.53" width="2.29" height="13.27" fill="#1a5fcc"/>
<rect x="417.19" y="635.77" width="2.29" height="77.03" fill="#e81c10"/>
<rect x="419.42" y="674.16" width="2.29" height="38.64" fill="#1a5fcc"/>
<rect x="421.66" y="690.13" width="2.29" height="22.67" fill="#1a5fcc"/>
<rect x="423.9" y="668.8" width="2.29" height="44" fill="#e81c10"/>
<rect x="426.13" y="689.6" width="2.29" height="23.2" fill="#1a5fcc"/>
<rect x="428.37" y="694.62" width="2.29" height="18.18" fill="#1a5fcc"/>
<rect x="430.6" y="696.37" width="2.29" height="16.43" fill="#1a5fcc"/>
<rect x="432.84" y="702.76" width="2.29" height="10.04" fill="#1a5fcc"/>
<rect x="435.08" y="674.28" width="2.29" height="38.52" fill="#e81c10"/>
<rect x="437.31" y="677.73" width="2.29" height="35.07" fill="#1a5fcc"/>
<rect x="439.55" y="693.09" width="2.29" height="19.71" fill="#1a5fcc"/>
<rect x="441.78" y="663.77" width="2.29" height="49.03" fill="#e81c10"/>
<rect x="444.02" y="687.78" width="2.29" height="25.02" fill="#1a5fcc"/>
<rect x="446.26" y="697.36" width="2.29" height="15.44" fill="#1a5fcc"/>
<rect x="448.49" y="660.33" width="2.29" height="52.47" fill="#e81c10"/>
<rect x="450.73" y="658.36" width="2.29" height="54.44" fill="#e81c10"/>
<rect x="452.96" y="675.6" width="2.29" height="37.2" fill="#1a5fcc"/>
<rect x="455.2" y="689.47" width="2.29" height="23.33" fill="#1a5fcc"/>
<rect x="457.44" y="693.79" width="2.29" height="19.01" fill="#1a5fcc"/>
<rect x="459.67" y="693.81" width="2.29" height="18.99" fill="#1a5fcc"/>
<rect x="461.91" y="691.91" width="2.29" height="20.89" fill="#e81c10"/>
<rect x="464.14" y="682.43" width="2.29" height="30.37" fill="#e81c10"/>
<rect x="466.38" y="696.43" width="2.29" height="16.37" fill="#1a5fcc"/>
<rect x="468.62" y="684.52" width="2.29" height="28.28" fill="#e81c10"/>
<rect x="470.85" y="699.77" width="2.29" height="13.03" fill="#1a5fcc"/>
<rect x="473.09" y="677.72" width="2.29" height="35.08" fill="#e81c10"/>
<rect x="475.32" y="679.04" width="2.29" height="33.76" fill="#1a5fcc"/>
<rect x="477.56" y="688.31" width="2.29" height="24.49" fill="#1a5fcc"/>
<rect x="479.8" y="665.5" width="2.29" height="47.3" fill="#e81c10"/>
<rect x="482.03" y="654.47" width="2.29" height="58.33" fill="#e81c10"/>
<rect x="484.27" y="684.78" width="2.29" height="28.02" fill="#1a5fcc"/>
<rect x="486.5" y="682.21" width="2.29" height="30.59" fill="#e81c10"/>
<rect x="488.74" y="658.71" width="2.29" height="54.09" fill="#e81c10"/>
<rect x="490.98" y="688.82" width="2.29" height="23.98" fill="#1a5fcc"/>
<rect x="493.21" y="687.79" width="2.29" height="25.01" fill="#e81c10"/>
<rect x="495.45" y="668.55" width="2.29" height="44.25" fill="#e81c10"/>
<rect x="497.68" y="672.37" width="2.29" height="40.43" fill="#1a5fcc"/>
<rect x="499.92" y="685.07" width="2.29" height="27.73" fill="#1a5fcc"/>
<rect x="502.16" y="682.27" width="2.29" height="30.53" fill="#e81c10"/>
<rect x="504.39" y="680.7" width="2.29" height="32.1" fill="#e81c10"/>
<rect x="506.63" y="687.64" width="2.29" height="25.16" fill="#1a5fcc"/>
<rect x="508.86" y="698.81" width="2.29" height="13.99" fill="#1a5fcc"/>
<rect x="511.1" y="692.91" width="2.29" height="19.89" fill="#e81c10"/>
<rect x="513.34" y="692.03" width="2.29" height="20.77" fill="#e81c10"/>
<rect x="515.57" y="701.05" width="2.29" height="11.75" fill="#1a5fcc"/>
<rect x="517.81" y="693.21" width="2.29" height="19.59" fill="#e81c10"/>
<rect x="520.04" y="699.52" width="2.29" height="13.28" fill="#1a5fcc"/>
<rect x="522.28" y="702.51" width="2.29" height="10.29" fill="#1a5fcc"/>
<rect x="524.52" y="690.23" width="2.29" height="22.57" fill="#e81c10"/>
<rect x="526.75" y="679.83" width="2.29" height="32.97" fill="#e81c10"/>
<rect x="528.99" y="696.12" width="2.29" height="16.68" fill="#1a5fcc"/>
<rect x="531.22" y="689.11" width="2.29" height="23.69" fill="#e81c10"/>
<rect x="533.46" y="695.98" width="2.29" height="16.82" fill="#1a5fcc"/>
<rect x="535.7" y="677.68" width="2.29" height="35.12" fill="#e81c10"/>
<rect x="537.93" y="681.15" width="2.29" height="31.65" fill="#1a5fcc"/>
<rect x="540.17" y="701.07" width="2.29" height="11.73" fill="#1a5fcc"/>
<rect x="542.4" y="693.48" width="2.29" height="19.32" fill="#e81c10"/>
<rect x="544.64" y="686.68" width="2.29" height="26.12" fill="#e81c10"/>
<rect x="546.88" y="690.98" width="2.29" height="21.82" fill="#1a5fcc"/>
<rect x="549.11" y="680.34" width="2.29" height="32.46" fill="#e81c10"/>
<rect x="551.35" y="679.89" width="2.29" height="32.91" fill="#e81c10"/>
<rect x="553.58" y="695.89" width="2.29" height="16.91" fill="#1a5fcc"/>
<rect x="555.82" y="658.69" width="2.29" height="54.11" fill="#e81c10"/>
<rect x="558.06" y="674.51" width="2.29" height="38.29" fill="#1a5fcc"/>
<rect x="560.29" y="696.99" width="2.29" height="15.81" fill="#1a5fcc"/>
<rect x="562.53" y="695.22" width="2.29" height="17.58" fill="#e81c10"/>
<rect x="564.76" y="703.71" width="2.29" height="9.09" fill="#1a5fcc"/>
<rect x="567" y="694.99" width="2.29" height="17.81" fill="#e81c10"/>
<rect x="569.24" y="699.76" width="2.29" height="13.04" fill="#1a5fcc"/>
<rect x="571.47" y="699.05" width="2.29" height="13.75" fill="#e81c10"/>
<rect x="573.71" y="699.11" width="2.29" height="13.69" fill="#1a5fcc"/>
<rect x="575.94" y="698.06" width="2.29" height="14.74" fill="#e81c10"/>
<rect x="578.18" y="694.28" width="2.29" height="18.52" fill="#e81c10"/>
<rect x="580.42" y="683.93" width="2.29" height="28.87" fill="#e81c10"/>
<rect x="582.65" y="698.44" width="2.29" height="14.36" fill="#1a5fcc"/>
<rect x="584.89" y="681.63" width="2.29" height="31.17" fill="#e81c10"/>
<rect x="587.12" y="698.02" width="2.29" height="14.78" fill="#1a5fcc"/>
<rect x="589.36" y="688.38" width="2.29" height="24.42" fill="#e81c10"/>
<rect x="591.6" y="693.7" width="2.29" height="19.1" fill="#1a5fcc"/>
<rect x="593.83" y="685.64" width="2.29" height="27.16" fill="#e81c10"/>
<rect x="596.07" y="681.48" width="2.29" height="31.32" fill="#e81c10"/>
<rect x="598.3" y="623.52" width="2.29" height="89.28" fill="#e81c10"/>
<rect x="600.54" y="659.65" width="2.29" height="53.15" fill="#1a5fcc"/>
<rect x="602.78" y="685.08" width="2.29" height="27.72" fill="#1a5fcc"/>
<rect x="605.01" y="697.11" width="2.29" height="15.69" fill="#1a5fcc"/>
<rect x="607.25" y="672.2" width="2.29" height="40.6" fill="#e81c10"/>
<rect x="609.48" y="686.48" width="2.29" height="26.32" fill="#1a5fcc"/>
<rect x="611.72" y="698.32" width="2.29" height="14.48" fill="#1a5fcc"/>
<rect x="613.96" y="701.49" width="2.29" height="11.31" fill="#1a5fcc"/>
<rect x="616.19" y="700.48" width="2.29" height="12.32" fill="#e81c10"/>
<rect x="618.43" y="703.82" width="2.29" height="8.98" fill="#1a5fcc"/>
<rect x="620.66" y="702.59" width="2.29" height="10.21" fill="#e81c10"/>
<rect x="622.9" y="703.91" width="2.29" height="8.89" fill="#1a5fcc"/>
<rect x="625.14" y="693.23" width="2.29" height="19.57" fill="#e81c10"/>
<rect x="627.37" y="701.05" width="2.29" height="11.75" fill="#1a5fcc"/>
<rect x="629.61" y="702.91" width="2.29" height="9.89" fill="#1a5fcc"/>
<rect x="631.84" y="701.01" width="2.29" height="11.79" fill="#e81c10"/>
<rect x="634.08" y="704.47" width="2.29" height="8.33" fill="#1a5fcc"/>
<rect x="636.32" y="704.82" width="2.29" height="7.98" fill="#1a5fcc"/>
<rect x="638.55" y="700.94" width="2.29" height="11.86" fill="#e81c10"/>
<rect x="640.79" y="706.86" width="2.29" height="5.94" fill="#1a5fcc"/>
<rect x="643.02" y="703.55" width="2.29" height="9.25" fill="#e81c10"/>
<rect x="645.26" y="703.96" width="2.29" height="8.84" fill="#1a5fcc"/>
<rect x="647.5" y="704.6" width="2.29" height="8.2" fill="#1a5fcc"/>
<rect x="649.73" y="701.18" width="2.29" height="11.62" fill="#e81c10"/>
<rect x="651.97" y="700.73" width="2.29" height="12.07" fill="#e81c10"/>
<rect x="654.2" y="707.5" width="2.29" height="5.3" fill="#1a5fcc"/>
<rect x="656.44" y="703.18" width="2.29" height="9.62" fill="#e81c10"/>
<rect x="658.68" y="700.8" width="2.29" height="12" fill="#e81c10"/>
<rect x="660.91" y="702.9" width="2.29" height="9.9" fill="#1a5fcc"/>
<rect x="663.15" y="701.94" width="2.29" height="10.86" fill="#e81c10"/>
<rect x="665.38" y="706.16" width="2.29" height="6.64" fill="#1a5fcc"/>
<rect x="667.62" y="707.97" width="2.29" height="4.83" fill="#1a5fcc"/>
<rect x="669.86" y="707.77" width="2.29" height="5.03" fill="#e81c10"/>
<rect x="672.09" y="704.05" width="2.29" height="8.75" fill="#e81c10"/>
<rect x="674.33" y="707.69" width="2.29" height="5.11" fill="#1a5fcc"/>
<rect x="676.56" y="704.45" width="2.29" height="8.35" fill="#e81c10"/>
<rect x="678.8" y="703.53" width="2.29" height="9.27" fill="#e81c10"/>
<rect x="681.04" y="689.93" width="2.29" height="22.87" fill="#e81c10"/>
<rect x="683.27" y="701.56" width="2.29" height="11.24" fill="#1a5fcc"/>
<rect x="685.51" y="704.5" width="2.29" height="8.3" fill="#1a5fcc"/>
<rect x="687.74" y="704.56" width="2.29" height="8.24" fill="#1a5fcc"/>
<rect x="689.98" y="688.28" width="2.29" height="24.52" fill="#e81c10"/>
<rect x="692.22" y="702.45" width="2.29" height="10.35" fill="#1a5fcc"/>
<rect x="694.45" y="700.28" width="2.29" height="12.52" fill="#e81c10"/>
<rect x="696.69" y="705.69" width="2.29" height="7.11" fill="#1a5fcc"/>
<rect x="698.92" y="707.19" width="2.29" height="5.61" fill="#1a5fcc"/>
<rect x="701.16" y="707.27" width="2.29" height="5.53" fill="#1a5fcc"/>
<rect x="703.4" y="707.54" width="2.29" height="5.26" fill="#1a5fcc"/>
<rect x="705.63" y="707.54" width="2.29" height="5.26" fill="#1a5fcc"/>
<rect x="707.87" y="705.74" width="2.29" height="7.06" fill="#e81c10"/>
<rect x="710.1" y="707.22" width="2.29" height="5.58" fill="#1a5fcc"/>
<rect x="712.34" y="707.28" width="2.29" height="5.52" fill="#1a5fcc"/>
<rect x="714.58" y="704.46" width="2.29" height="8.34" fill="#e81c10"/>
<rect x="716.81" y="708.19" width="2.29" height="4.61" fill="#1a5fcc"/>
<rect x="719.05" y="706.09" width="2.29" height="6.71" fill="#e81c10"/>
<rect x="721.28" y="705.33" width="2.29" height="7.47" fill="#e81c10"/>
<rect x="723.52" y="705.31" width="2.29" height="7.49" fill="#e81c10"/>
<rect x="725.76" y="699" width="2.29" height="13.8" fill="#e81c10"/>
<rect x="727.99" y="698.68" width="2.29" height="14.12" fill="#e81c10"/>
<rect x="730.23" y="706.58" width="2.29" height="6.22" fill="#1a5fcc"/>
<rect x="732.46" y="701.81" width="2.29" height="10.99" fill="#e81c10"/>
<rect x="734.7" y="705.97" width="2.29" height="6.83" fill="#1a5fcc"/>
<rect x="736.94" y="696.28" width="2.29" height="16.52" fill="#e81c10"/>
<rect x="739.17" y="702.87" width="2.29" height="9.93" fill="#1a5fcc"/>
<rect x="741.41" y="706.17" width="2.29" height="6.63" fill="#1a5fcc"/>
<rect x="743.64" y="708.4" width="2.29" height="4.4" fill="#1a5fcc"/>
<rect x="745.88" y="707.43" width="2.29" height="5.37" fill="#e81c10"/>
<rect x="748.12" y="707.48" width="2.29" height="5.32" fill="#1a5fcc"/>
<rect x="750.35" y="705.77" width="2.29" height="7.03" fill="#e81c10"/>
<rect x="752.59" y="673.35" width="2.29" height="39.45" fill="#e81c10"/>
<rect x="754.82" y="696.82" width="2.29" height="15.98" fill="#1a5fcc"/>
<rect x="757.06" y="677.53" width="2.29" height="35.27" fill="#e81c10"/>
<rect x="759.3" y="684.69" width="2.29" height="28.11" fill="#1a5fcc"/>
<rect x="761.53" y="699.52" width="2.29" height="13.28" fill="#1a5fcc"/>
<rect x="763.77" y="678.13" width="2.29" height="34.67" fill="#e81c10"/>
<rect x="766" y="697.62" width="2.29" height="15.18" fill="#1a5fcc"/>
<rect x="768.24" y="702.11" width="2.29" height="10.69" fill="#1a5fcc"/>
<rect x="770.48" y="705.74" width="2.29" height="7.06" fill="#1a5fcc"/>
<rect x="772.71" y="707.07" width="2.29" height="5.73" fill="#1a5fcc"/>
<rect x="774.95" y="707.11" width="2.29" height="5.69" fill="#1a5fcc"/>
<rect x="777.18" y="706.31" width="2.29" height="6.49" fill="#e81c10"/>
<rect x="779.42" y="701.63" width="2.29" height="11.17" fill="#e81c10"/>
<rect x="781.66" y="703.88" width="2.29" height="8.92" fill="#1a5fcc"/>
<rect x="783.89" y="686.99" width="2.29" height="25.81" fill="#e81c10"/>
<rect x="786.13" y="700.1" width="2.29" height="12.7" fill="#1a5fcc"/>
<rect x="788.36" y="702.11" width="2.29" height="10.69" fill="#1a5fcc"/>
<rect x="790.6" y="704.92" width="2.29" height="7.88" fill="#1a5fcc"/>
<rect x="792.84" y="704.89" width="2.29" height="7.91" fill="#e81c10"/>
<rect x="795.07" y="702.2" width="2.29" height="10.6" fill="#e81c10"/>
<rect x="797.31" y="701.24" width="2.29" height="11.56" fill="#e81c10"/>
<rect x="799.54" y="672.99" width="2.29" height="39.81" fill="#e81c10"/>
<rect x="801.78" y="690.82" width="2.29" height="21.98" fill="#1a5fcc"/>
<rect x="804.02" y="698.19" width="2.29" height="14.61" fill="#1a5fcc"/>
<rect x="806.25" y="697.37" width="2.29" height="15.43" fill="#e81c10"/>
<rect x="808.49" y="690.32" width="2.29" height="22.48" fill="#e81c10"/>
<rect x="810.72" y="701.29" width="2.29" height="11.51" fill="#1a5fcc"/>
<rect x="812.96" y="698.23" width="2.29" height="14.57" fill="#e81c10"/>
<rect x="815.2" y="696.61" width="2.29" height="16.19" fill="#e81c10"/>
<rect x="817.43" y="699.33" width="2.29" height="13.47" fill="#1a5fcc"/>
<rect x="819.67" y="701.13" width="2.29" height="11.67" fill="#1a5fcc"/>
<rect x="821.9" y="702.72" width="2.29" height="10.08" fill="#1a5fcc"/>
<rect x="824.14" y="705.22" width="2.29" height="7.58" fill="#1a5fcc"/>
<rect x="826.38" y="705.31" width="2.29" height="7.49" fill="#1a5fcc"/>
<rect x="828.61" y="706.64" width="2.29" height="6.16" fill="#1a5fcc"/>
<rect x="830.85" y="704.02" width="2.29" height="8.78" fill="#e81c10"/>
<rect x="833.08" y="705.54" width="2.29" height="7.26" fill="#1a5fcc"/>
<rect x="835.32" y="705.49" width="2.29" height="7.31" fill="#e81c10"/>
<rect x="837.56" y="705.44" width="2.29" height="7.36" fill="#e81c10"/>
<rect x="839.79" y="708.28" width="2.29" height="4.52" fill="#1a5fcc"/>
<rect x="842.03" y="699.59" width="2.29" height="13.21" fill="#e81c10"/>
<rect x="844.26" y="700.98" width="2.29" height="11.82" fill="#1a5fcc"/>
<rect x="846.5" y="704.48" width="2.29" height="8.32" fill="#1a5fcc"/>
<rect x="848.74" y="700.7" width="2.29" height="12.1" fill="#e81c10"/>
<rect x="850.97" y="706.71" width="2.29" height="6.09" fill="#1a5fcc"/>
<rect x="853.21" y="697.32" width="2.29" height="15.48" fill="#e81c10"/>
<rect x="855.44" y="703.69" width="2.29" height="9.11" fill="#1a5fcc"/>
<rect x="857.68" y="705.26" width="2.29" height="7.54" fill="#1a5fcc"/>
<rect x="859.92" y="708.15" width="2.29" height="4.65" fill="#1a5fcc"/>
<rect x="862.15" y="706.63" width="2.29" height="6.17" fill="#e81c10"/>
<rect x="864.39" y="704.6" width="2.29" height="8.2" fill="#e81c10"/>
<rect x="866.62" y="625.53" width="2.29" height="87.27" fill="#e81c10"/>
<rect x="868.86" y="673.34" width="2.29" height="39.46" fill="#1a5fcc"/>
<rect x="871.1" y="699.68" width="2.29" height="13.12" fill="#1a5fcc"/>
<rect x="873.33" y="690.53" width="2.29" height="22.27" fill="#e81c10"/>
<rect x="875.57" y="703.19" width="2.29" height="9.61" fill="#1a5fcc"/>
<rect x="877.8" y="704.51" width="2.29" height="8.29" fill="#1a5fcc"/>
<rect x="880.04" y="706.29" width="2.29" height="6.51" fill="#1a5fcc"/>
<rect x="882.28" y="704.87" width="2.29" height="7.93" fill="#e81c10"/>
<rect x="884.51" y="706.63" width="2.29" height="6.17" fill="#1a5fcc"/>
<rect x="886.75" y="706.81" width="2.29" height="5.99" fill="#1a5fcc"/>
<rect x="888.98" y="706.47" width="2.29" height="6.33" fill="#e81c10"/>
<rect x="891.22" y="708.39" width="2.29" height="4.41" fill="#1a5fcc"/>
<rect x="893.46" y="708.39" width="2.29" height="4.41" fill="#e81c10"/>
<rect x="895.69" y="708.44" width="2.29" height="4.36" fill="#1a5fcc"/>
<rect x="897.93" y="708.38" width="2.29" height="4.42" fill="#e81c10"/>
<rect x="900.16" y="708.29" width="2.29" height="4.51" fill="#e81c10"/>
<rect x="902.4" y="709.22" width="2.29" height="3.58" fill="#1a5fcc"/>
<rect x="904.64" y="709.16" width="2.29" height="3.64" fill="#e81c10"/>
<rect x="906.87" y="709.11" width="2.29" height="3.69" fill="#e81c10"/>
<rect x="909.11" y="708.24" width="2.29" height="4.56" fill="#e81c10"/>
<rect x="911.34" y="708.26" width="2.29" height="4.54" fill="#1a5fcc"/>
<rect x="913.58" y="708.11" width="2.29" height="4.69" fill="#e81c10"/>
<rect x="915.82" y="709.36" width="2.29" height="3.44" fill="#1a5fcc"/>
<rect x="918.05" y="707.86" width="2.29" height="4.94" fill="#e81c10"/>
<rect x="920.29" y="707.96" width="2.29" height="4.84" fill="#1a5fcc"/>
<rect x="922.52" y="706.51" width="2.29" height="6.29" fill="#e81c10"/>
<rect x="924.76" y="709.25" width="2.29" height="3.55" fill="#1a5fcc"/>
<rect x="927" y="709.28" width="2.29" height="3.52" fill="#1a5fcc"/>
<rect x="929.23" y="707.79" width="2.29" height="5.01" fill="#e81c10"/>
<rect x="931.47" y="709.15" width="2.29" height="3.65" fill="#1a5fcc"/>
<rect x="933.7" y="709.02" width="2.29" height="3.78" fill="#e81c10"/>
<rect x="935.94" y="709.12" width="2.29" height="3.68" fill="#1a5fcc"/>
<rect x="938.18" y="707.42" width="2.29" height="5.38" fill="#e81c10"/>
<rect x="940.41" y="707.16" width="2.29" height="5.64" fill="#e81c10"/>
<rect x="942.65" y="705.25" width="2.29" height="7.55" fill="#e81c10"/>
<rect x="944.88" y="705.44" width="2.29" height="7.36" fill="#1a5fcc"/>
<rect x="947.12" y="706.85" width="2.29" height="5.95" fill="#1a5fcc"/>
<rect x="949.36" y="706.89" width="2.29" height="5.91" fill="#1a5fcc"/>
<rect x="951.59" y="708.48" width="2.29" height="4.32" fill="#1a5fcc"/>
<rect x="953.83" y="708.42" width="2.29" height="4.38" fill="#e81c10"/>
<rect x="956.06" y="706.58" width="2.29" height="6.22" fill="#e81c10"/>
<rect x="958.3" y="709.59" width="2.29" height="3.21" fill="#1a5fcc"/>
<rect x="960.54" y="706.38" width="2.29" height="6.42" fill="#e81c10"/>
<rect x="962.77" y="706.27" width="2.29" height="6.53" fill="#e81c10"/>
<rect x="965.01" y="707.93" width="2.29" height="4.87" fill="#1a5fcc"/>
<rect x="967.24" y="707.72" width="2.29" height="5.08" fill="#e81c10"/>
<rect x="969.48" y="693.15" width="2.29" height="19.65" fill="#e81c10"/>
<rect x="971.72" y="699.84" width="2.29" height="12.96" fill="#1a5fcc"/>
<rect x="973.95" y="664.75" width="2.29" height="48.05" fill="#e81c10"/>
<rect x="976.19" y="670.91" width="2.29" height="41.89" fill="#1a5fcc"/>
<rect x="978.42" y="690.63" width="2.29" height="22.17" fill="#1a5fcc"/>
<rect x="980.66" y="679.79" width="2.29" height="33.01" fill="#e81c10"/>
<rect x="982.9" y="679.83" width="2.29" height="32.97" fill="#1a5fcc"/>
<rect x="985.13" y="700.63" width="2.29" height="12.17" fill="#1a5fcc"/>
<rect x="987.37" y="671.08" width="2.29" height="41.72" fill="#e81c10"/>
<rect x="989.6" y="673.29" width="2.29" height="39.51" fill="#1a5fcc"/>
<rect x="991.84" y="651.12" width="2.29" height="61.68" fill="#e81c10"/>
<rect x="994.08" y="695.93" width="2.29" height="16.87" fill="#1a5fcc"/>
<rect x="996.31" y="691.79" width="2.29" height="21.01" fill="#e81c10"/>
<rect x="998.55" y="596.85" width="2.29" height="115.95" fill="#e81c10"/>
<rect x="1000.78" y="692.14" width="2.29" height="20.66" fill="#1a5fcc"/>
<rect x="1003.02" y="695.94" width="2.29" height="16.86" fill="#1a5fcc"/>
<rect x="1005.26" y="685.95" width="2.29" height="26.85" fill="#e81c10"/>
<rect x="1007.49" y="679.16" width="2.29" height="33.64" fill="#e81c10"/>
<rect x="1009.73" y="695.52" width="2.29" height="17.28" fill="#1a5fcc"/>
<rect x="1011.96" y="687.86" width="2.29" height="24.94" fill="#e81c10"/>
<rect x="1014.2" y="673.22" width="2.29" height="39.58" fill="#e81c10"/>
<rect x="1016.44" y="695.65" width="2.29" height="17.15" fill="#1a5fcc"/>
<rect x="1018.67" y="697.65" width="2.29" height="15.15" fill="#1a5fcc"/>
<rect x="1020.91" y="698.9" width="2.29" height="13.9" fill="#1a5fcc"/>
<rect x="1023.14" y="690.81" width="2.29" height="21.99" fill="#e81c10"/>
<rect x="1025.38" y="705.05" width="2.29" height="7.75" fill="#1a5fcc"/>
<rect x="1027.62" y="706.4" width="2.29" height="6.4" fill="#1a5fcc"/>
<rect x="1029.85" y="706.69" width="2.29" height="6.11" fill="#1a5fcc"/>
<rect x="1032.09" y="702.35" width="2.29" height="10.45" fill="#e81c10"/>
<rect x="1034.32" y="684.44" width="2.29" height="28.36" fill="#e81c10"/>
<rect x="1036.56" y="703.51" width="2.29" height="9.29" fill="#1a5fcc"/>
<rect x="1038.8" y="606.7" width="2.29" height="106.1" fill="#e81c10"/>
<rect x="1041.03" y="641.62" width="2.29" height="71.18" fill="#1a5fcc"/>
<rect x="1043.27" y="680.05" width="2.29" height="32.75" fill="#1a5fcc"/>
<rect x="1045.5" y="634.67" width="2.29" height="78.13" fill="#e81c10"/>
<rect x="1047.74" y="569.96" width="2.29" height="142.84" fill="#e81c10"/>
<rect x="1049.98" y="663.7" width="2.29" height="49.1" fill="#1a5fcc"/>
<rect x="1052.21" y="685.76" width="2.29" height="27.04" fill="#1a5fcc"/>
<rect x="1054.45" y="651.52" width="2.29" height="61.28" fill="#e81c10"/>
<rect x="1056.68" y="639.16" width="2.29" height="73.64" fill="#e81c10"/>
<rect x="1058.92" y="597.08" width="2.29" height="115.72" fill="#e81c10"/>
<rect x="1061.16" y="657.7" width="2.29" height="55.1" fill="#1a5fcc"/>
<rect x="1063.39" y="683.37" width="2.29" height="29.43" fill="#1a5fcc"/>
<rect x="1065.63" y="648.88" width="2.29" height="63.92" fill="#e81c10"/>
<rect x="1067.86" y="683.08" width="2.29" height="29.72" fill="#1a5fcc"/>
<rect x="1070.1" y="693.36" width="2.29" height="19.44" fill="#1a5fcc"/>
<rect x="1072.34" y="699.39" width="2.29" height="13.41" fill="#1a5fcc"/>
<rect x="1074.57" y="700.56" width="2.29" height="12.24" fill="#1a5fcc"/>
<rect x="1076.81" y="700.37" width="2.29" height="12.43" fill="#e81c10"/>
<rect x="1079.04" y="702.65" width="2.29" height="10.15" fill="#1a5fcc"/>
<rect x="1081.28" y="702.45" width="2.29" height="10.35" fill="#e81c10"/>
<rect x="1083.52" y="704.75" width="2.29" height="8.05" fill="#1a5fcc"/>
<rect x="1085.75" y="704.68" width="2.29" height="8.12" fill="#e81c10"/>
<rect x="1087.99" y="704.42" width="2.29" height="8.38" fill="#e81c10"/>
<rect x="1090.22" y="685.49" width="2.29" height="27.31" fill="#e81c10"/>
<rect x="1092.46" y="706.63" width="2.29" height="6.17" fill="#1a5fcc"/>
<rect x="1094.7" y="704.55" width="2.29" height="8.25" fill="#e81c10"/>
<rect x="1096.93" y="697.51" width="2.29" height="15.29" fill="#e81c10"/>
<rect x="1099.17" y="699.75" width="2.29" height="13.05" fill="#1a5fcc"/>
<rect x="1101.4" y="704.3" width="2.29" height="8.5" fill="#1a5fcc"/>
<rect x="1103.64" y="699.75" width="2.29" height="13.05" fill="#e81c10"/>
<rect x="1105.88" y="700.06" width="2.29" height="12.74" fill="#1a5fcc"/>
<rect x="1108.11" y="704.77" width="2.29" height="8.03" fill="#1a5fcc"/>
<rect x="1110.35" y="705.12" width="2.29" height="7.68" fill="#1a5fcc"/>
<rect x="1112.58" y="700.82" width="2.29" height="11.98" fill="#e81c10"/>
<rect x="1114.82" y="692.25" width="2.29" height="20.55" fill="#e81c10"/>
<rect x="1117.06" y="690.87" width="2.29" height="21.93" fill="#e81c10"/>
<rect x="1119.29" y="701.07" width="2.29" height="11.73" fill="#1a5fcc"/>
<rect x="1121.53" y="703.18" width="2.29" height="9.62" fill="#1a5fcc"/>
<rect x="1123.76" y="703.2" width="2.29" height="9.6" fill="#1a5fcc"/>
<rect x="1126" y="701.01" width="2.29" height="11.79" fill="#e81c10"/>
<rect x="1128.24" y="703.18" width="2.29" height="9.62" fill="#1a5fcc"/>
<rect x="1130.47" y="703.37" width="2.29" height="9.43" fill="#1a5fcc"/>
<rect x="1132.71" y="693.07" width="2.29" height="19.73" fill="#e81c10"/>
<rect x="1134.94" y="695.51" width="2.29" height="17.29" fill="#1a5fcc"/>
<rect x="1137.18" y="699.72" width="2.29" height="13.08" fill="#1a5fcc"/>
<rect x="1139.42" y="697.9" width="2.29" height="14.9" fill="#e81c10"/>
<rect x="1141.65" y="636.6" width="2.29" height="76.2" fill="#e81c10"/>
</g>
<polyline points="9.12,706.48 11.35,706.44 13.59,706.4 15.83,706.36 18.06,706.37 20.3,706.29 22.53,706.29 24.77,706.28 27.01,706.28 29.24,706.27 31.48,706.27 33.71,706.24 35.95,706.2 38.19,706.2 40.42,706.19 42.66,706.19 44.89,706.19 47.13,706.18 49.37,705.87 51.6,705.78 53.84,705.69 56.07,705.65 58.31,705.58 60.55,705.55 62.78,705.54 65.02,705.51 67.25,705.5 69.49,705.5 71.73,705.49 73.96,705.49 76.2,705.48 78.43,705.47 80.67,705.47 82.91,705.46 85.14,705.37 87.38,705.27 89.61,705.23 91.85,705.23 94.09,705.22 96.32,705.16 98.56,705.15 100.79,705.15 103.03,705.12 105.27,704.87 107.5,704.78 109.74,704.73 111.97,704.69 114.21,704.55 116.45,704.48 118.68,704.4 120.92,704.37 123.15,704.33 125.39,704.29 127.63,704.16 129.86,704.09 132.1,704.02 134.33,704.01 136.57,703.97 138.81,703.96 141.04,703.95 143.28,703.94 145.51,703.93 147.75,703.86 149.99,703.85 152.22,703.84 154.46,703.83 156.69,703.79 158.93,703.8 161.17,703.81 163.4,703.82 165.64,703.83 167.87,703.83 170.11,703.84 172.35,703.84 174.58,703.83 176.82,703.83 179.05,703.84 181.29,703.8 183.53,703.77 185.76,703.71 188,703.64 190.23,703.61 192.47,703.62 194.71,703.62 196.94,703.63 199.18,703.64 201.41,703.64 203.65,703.61 205.89,703.6 208.12,703.58 210.36,703.57 212.59,703.58 214.83,703.59 217.07,703.6 219.3,703.59 221.54,703.58 223.77,703.57 226.01,703.58 228.25,703.59 230.48,703.6 232.72,703.59 234.95,703.58 237.19,703.59 239.43,703.6 241.66,703.61 243.9,703.62 246.13,703.58 248.37,703.54 250.61,703.54 252.84,703.55 255.08,703.56 257.31,703.57 259.55,703.41 261.79,703.4 264.02,703.34 266.26,703.22 268.49,703.15 270.73,703.13 272.97,703.12 275.2,703.11 277.44,703.07 279.67,703.1 281.91,703.15 284.15,703.2 286.38,703.12 288.62,702.84 290.85,702.72 293.09,702.66 295.33,702.57 297.56,702.55 299.8,702.53 302.03,702.54 304.27,702.55 306.51,702.52 308.74,702.51 310.98,702.51 313.21,702.5 315.45,702.23 317.69,702.52 319.92,702.57 322.16,702.64 324.39,702.66 326.63,702.67 328.87,702.65 331.1,702.48 333.34,702.42 335.57,701.91 337.81,701.8 340.05,701.69 342.28,701.62 344.52,701.54 346.75,701.49 348.99,701.45 351.23,701.19 353.46,700.86 355.7,700.37 357.93,699.31 360.17,698.29 362.41,698.09 364.64,697.44 366.88,697.21 369.11,697.09 371.35,696.91 373.59,696.81 375.82,696.72 378.06,696.71 380.29,696.43 382.53,696.47 384.77,696.34 387,696.25 389.24,696.24 391.47,696.18 393.71,696.13 395.95,696.08 398.18,696.08 400.42,696.12 402.65,695.84 404.89,695.48 407.13,695.19 409.36,695.06 411.6,694.98 413.83,694.85 416.07,694.87 418.31,694.29 420.54,694.03 422.78,693.9 425.01,693.63 427.25,693.48 429.49,693.37 431.72,693.28 433.96,693.24 436.19,692.96 438.43,692.72 440.67,692.6 442.9,692.26 445.14,692.1 447.37,692.02 449.61,691.67 451.85,691.3 454.08,691.11 456.32,691.03 458.55,690.96 460.79,690.84 463.03,690.72 465.26,690.51 467.5,690.42 469.73,690.23 471.97,690.21 474.21,689.98 476.44,689.76 478.68,689.62 480.91,689.27 483.15,688.83 485.39,688.64 487.62,688.45 489.86,688.06 492.09,687.92 494.33,687.76 496.57,687.43 498.8,687.13 501.04,686.97 503.27,686.78 505.51,686.55 507.75,686.38 509.98,686.31 512.22,686.19 514.45,686.1 516.69,686.1 518.93,685.99 521.16,685.92 523.4,685.88 525.63,685.74 527.87,685.67 530.11,685.6 532.34,685.51 534.58,685.55 536.81,685.38 539.05,685.18 541.29,685.14 543.52,685.05 545.76,684.92 547.99,684.8 550.23,684.58 552.47,684.34 554.7,684.33 556.94,684.29 559.17,684.14 561.41,684.14 563.65,684.13 565.88,684.13 568.12,684.06 570.35,684.03 572.59,684 574.83,683.97 577.06,683.91 579.3,683.82 581.53,683.64 583.77,683.85 586.01,683.66 588.24,683.63 590.48,683.5 592.71,683.41 594.95,683.29 597.19,683.14 599.42,682.63 601.66,682.33 603.89,682.67 606.13,682.71 608.37,682.53 610.6,682.45 612.84,682.46 615.07,682.47 617.31,682.47 619.55,682.72 621.78,683.11 624.02,683.67 626.25,684.66 628.49,685.64 630.73,685.82 632.96,686.48 635.2,686.7 637.43,686.82 639.67,686.98 641.91,687.32 644.14,687.48 646.38,687.52 648.61,687.83 650.85,687.89 653.09,688.04 655.32,688.21 657.56,688.23 659.79,688.27 662.03,688.34 664.27,688.48 666.5,688.56 668.74,688.6 670.97,688.9 673.21,689.27 675.45,689.58 677.68,689.7 679.92,689.77 682.15,689.77 684.39,689.78 686.63,690.36 688.86,690.61 691.1,690.59 693.33,690.87 695.57,690.96 697.81,691.06 700.04,691.15 702.28,691.18 704.51,691.46 706.75,691.71 708.99,691.81 711.22,692.18 713.46,692.34 715.69,692.4 717.93,692.8 720.17,693.19 722.4,693.44 724.64,693.57 726.87,693.62 729.11,693.66 731.35,693.78 733.58,693.94 735.82,694.02 738.05,694.12 740.29,694.15 742.53,694.38 744.76,694.63 747,694.79 749.23,695.14 751.47,695.56 753.71,695.47 755.94,695.59 758.18,695.75 760.41,695.71 762.65,695.81 764.89,695.89 767.12,696.1 769.36,696.24 771.59,696.44 773.83,696.66 776.07,696.82 778.3,696.88 780.54,696.96 782.77,697.05 785.01,696.94 787.25,696.99 789.48,697.02 791.72,697.04 793.95,697.16 796.19,697.35 798.43,697.39 800.66,697.25 802.9,697.21 805.13,697.38 807.37,697.52 809.61,697.43 811.84,697.49 814.08,697.59 816.31,697.64 818.55,697.79 820.79,697.97 823.02,698.03 825.26,698.42 827.49,698.67 829.73,698.75 831.97,698.83 834.2,698.84 836.44,698.93 838.67,698.98 840.91,699.05 843.15,699.06 845.38,699.08 847.62,699.17 849.85,699.31 852.09,699.37 854.33,699.51 856.56,699.55 858.8,699.69 861.03,699.81 863.27,699.99 865.51,700.18 867.74,700.2 869.98,700.31 872.21,700.43 874.45,700.38 876.69,700.64 878.92,700.79 881.16,700.85 883.39,700.88 885.63,700.93 887.87,700.96 890.1,700.99 892.34,701.03 894.57,701.15 896.81,701.22 899.05,701.26 901.28,701.32 903.52,701.36 905.75,701.4 907.99,701.47 910.23,701.48 912.46,701.52 914.7,701.55 916.93,701.59 919.17,701.65 921.41,701.71 923.64,701.7 925.88,701.75 928.11,701.82 930.35,701.86 932.59,701.92 934.82,701.94 937.06,701.95 939.29,701.95 941.53,701.98 943.77,701.96 946,701.97 948.24,701.99 950.47,702.13 952.71,702.19 954.95,702.22 957.18,702.24 959.42,702.42 961.65,702.45 963.89,702.5 966.13,702.52 968.36,702.52 970.6,702.41 972.83,702.34 975.07,701.99 977.31,701.7 979.54,701.56 981.78,701.33 984.01,701.12 986.25,701.06 988.49,700.77 990.72,700.5 992.96,700.05 995.19,700.02 997.43,699.97 999.67,699.05 1001.9,698.97 1004.14,698.89 1006.37,698.8 1008.61,698.6 1010.85,698.52 1013.08,698.35 1015.32,698.06 1017.55,697.96 1019.79,697.89 1022.03,698.11 1024.26,698.06 1026.5,698.29 1028.73,698.47 1030.97,698.53 1033.21,698.73 1035.44,698.62 1037.68,698.63 1039.91,697.8 1042.15,697.26 1044.39,697.03 1046.62,696.44 1048.86,695.34 1051.09,695 1053.33,694.99 1055.57,694.59 1057.8,694.06 1060.04,693.17 1062.27,692.77 1064.51,692.62 1066.75,692.18 1068.98,692.26 1071.22,692.29 1073.45,692.3 1075.69,692.32 1077.93,692.41 1080.16,692.42 1082.4,692.45 1084.63,692.52 1086.87,692.56 1089.11,692.59 1091.34,692.45 1093.58,692.46 1095.81,692.45 1098.05,692.38 1100.29,692.34 1102.52,692.33 1104.76,692.28 1106.99,692.24 1109.23,692.21 1111.47,692.26 1113.7,692.25 1115.94,692.15 1118.17,692.07 1120.41,692.02 1122.65,692.07 1124.88,692.07 1127.12,692.03 1129.35,691.99 1131.59,691.96 1133.83,691.87 1136.06,692.45 1138.3,692.67 1140.53,692.66 1142.77,692.21" fill="none" stroke="#808080" stroke-width="1" stroke-linejoin="round" shape-rendering="crispEdges"/>
<polyline points="9.12,706.48 11.35,706.4 13.59,706.32 15.83,706.25 18.06,706.25 20.3,706.1 22.53,706.09 24.77,706.08 27.01,706.07 29.24,706.06 31.48,706.05 33.71,705.99 35.95,705.92 38.19,705.91 40.42,705.9 42.66,705.9 44.89,705.89 47.13,705.88 49.37,705.26 51.6,705.07 53.84,704.89 56.07,704.82 58.31,704.68 60.55,704.61 62.78,704.6 65.02,704.53 67.25,704.52 69.49,704.51 71.73,704.5 73.96,704.49 76.2,704.48 78.43,704.46 80.67,704.45 82.91,704.44 85.14,704.25 87.38,704.05 89.61,703.98 91.85,703.97 94.09,703.96 96.32,703.83 98.56,703.81 100.79,703.81 103.03,703.75 105.27,703.26 107.5,703.07 109.74,702.99 111.97,702.89 114.21,702.62 116.45,702.47 118.68,702.32 120.92,702.26 123.15,702.18 125.39,702.1 127.63,701.84 129.86,701.69 132.1,701.55 134.33,701.53 136.57,701.46 138.81,701.44 141.04,701.42 143.28,701.4 145.51,701.46 147.75,701.4 149.99,701.46 152.22,701.43 154.46,701.55 156.69,701.49 158.93,701.52 161.17,701.55 163.4,701.57 165.64,701.6 167.87,701.68 170.11,701.76 172.35,701.77 174.58,701.75 176.82,701.77 179.05,701.79 181.29,701.73 183.53,702.28 185.76,702.34 188,702.4 190.23,702.4 192.47,702.55 194.71,702.63 196.94,702.66 199.18,702.74 201.41,702.76 203.65,702.71 205.89,702.69 208.12,702.68 210.36,702.67 212.59,702.7 214.83,702.73 217.07,702.76 219.3,702.94 221.54,703.11 223.77,703.16 226.01,703.19 228.25,703.22 230.48,703.38 232.72,703.37 234.95,703.35 237.19,703.43 239.43,703.94 241.66,704.15 243.9,704.26 246.13,704.27 248.37,704.45 250.61,704.62 252.84,704.78 255.08,704.86 257.31,704.95 259.55,704.72 261.79,704.96 264.02,704.99 266.26,704.89 268.49,704.76 270.73,704.81 272.97,704.81 275.2,704.8 277.44,704.75 279.67,704.74 281.91,704.9 284.15,704.94 286.38,704.82 288.62,704.12 290.85,703.95 293.09,703.8 295.33,703.6 297.56,703.53 299.8,703.46 302.03,703.4 304.27,703.34 306.51,703.26 308.74,703.28 310.98,703.24 313.21,703.2 315.45,702.73 317.69,702.76 319.92,702.8 322.16,702.89 324.39,702.93 326.63,702.8 328.87,702.67 331.1,702.3 333.34,702.09 335.57,701.06 337.81,700.89 340.05,700.69 342.28,700.55 344.52,700.41 346.75,700.28 348.99,700.17 351.23,699.61 353.46,698.78 355.7,697.63 357.93,695.46 360.17,693.39 362.41,692.96 364.64,691.51 366.88,691.06 369.11,690.83 371.35,690.38 373.59,689.68 375.82,689.3 378.06,689.17 380.29,688.58 382.53,688.48 384.77,688.07 387,687.73 389.24,687.62 391.47,687.41 393.71,687.54 395.95,687.21 398.18,687.16 400.42,687.35 402.65,686.92 404.89,686.16 407.13,685.57 409.36,685.32 411.6,685.21 413.83,684.97 416.07,684.83 418.31,683.63 420.54,683.24 422.78,683.69 425.01,683.3 427.25,683.16 429.49,683.14 431.72,683.02 433.96,683.01 436.19,682.53 438.43,682.1 440.67,681.94 442.9,681.25 445.14,680.95 447.37,680.83 449.61,680.62 451.85,679.85 454.08,679.41 456.32,679.16 458.55,678.99 460.79,678.89 463.03,678.76 465.26,678.72 467.5,678.74 469.73,679.4 471.97,679.52 474.21,679.27 476.44,678.97 478.68,678.83 480.91,678.26 483.15,677.48 485.39,677.67 487.62,678.11 489.86,678.48 492.09,680.39 494.33,682.12 496.57,681.9 498.8,682.76 501.04,682.88 503.27,682.73 505.51,682.72 507.75,683.08 509.98,683.32 512.22,683.2 514.45,683.63 516.69,683.73 518.93,683.91 521.16,684.12 523.4,684.14 525.63,684.06 527.87,683.81 530.11,683.99 532.34,683.86 534.58,683.74 536.81,683.84 539.05,684.2 541.29,684.71 543.52,684.77 545.76,684.63 547.99,684.64 550.23,684.32 552.47,685.06 554.7,685.42 556.94,684.89 559.17,684.99 561.41,685.11 563.65,685.12 565.88,685.25 568.12,685.12 570.35,685.54 572.59,685.9 574.83,686 577.06,686.57 579.3,686.68 581.53,686.45 583.77,687.09 586.01,687.48 588.24,687.85 590.48,687.83 592.71,687.83 594.95,687.69 597.19,687.52 599.42,686.54 601.66,685.92 603.89,685.93 606.13,685.89 608.37,685.8 610.6,685.92 612.84,686.09 615.07,686.69 617.31,687.45 619.55,687.77 621.78,688.11 624.02,688.87 626.25,688.94 628.49,689.16 630.73,689.73 632.96,690.21 635.2,690.53 637.43,690.91 639.67,691.25 641.91,691.57 644.14,691.65 646.38,691.83 648.61,692.04 650.85,692.04 653.09,692.17 655.32,692.3 657.56,692.31 659.79,692.49 662.03,692.87 664.27,692.97 666.5,693.25 668.74,693.45 670.97,693.95 673.21,694.34 675.45,694.45 677.68,694.63 679.92,694.91 682.15,694.89 684.39,695.25 686.63,695.66 688.86,695.8 691.1,696.29 693.33,696.76 695.57,696.81 697.81,696.99 700.04,697.05 702.28,697.25 704.51,697.38 706.75,697.52 708.99,697.63 711.22,697.79 713.46,698 715.69,698.34 717.93,698.51 720.17,698.91 722.4,699.04 724.64,699.32 726.87,699.41 729.11,699.62 731.35,700.04 733.58,701.35 735.82,702.12 738.05,702.31 740.29,702.4 742.53,702.97 744.76,703.33 747,703.49 749.23,703.59 751.47,703.67 753.71,703.17 755.94,703.07 758.18,702.63 760.41,702.49 762.65,702.46 764.89,702.05 767.12,701.99 769.36,701.95 771.59,701.97 773.83,702.07 776.07,702.07 778.3,702.12 780.54,702.08 782.77,702.07 785.01,701.83 787.25,701.82 789.48,701.73 791.72,701.76 793.95,701.83 796.19,701.82 798.43,701.81 800.66,701.25 802.9,700.97 805.13,700.81 807.37,700.7 809.61,700.41 811.84,700.36 814.08,700.27 816.31,700.38 818.55,700.34 820.79,700.28 823.02,700.25 825.26,700.54 827.49,700.58 829.73,700.69 831.97,700.66 834.2,700.64 836.44,700.61 838.67,700.57 840.91,700.58 843.15,700.48 845.38,700.38 847.62,700.33 849.85,700.27 852.09,700.24 854.33,700.1 856.56,700.07 858.8,700.07 861.03,700.22 863.27,700.35 865.51,700.32 867.74,699.05 869.98,698.5 872.21,698.56 874.45,698.36 876.69,698.31 878.92,698.24 881.16,698.22 883.39,698.18 885.63,698.19 887.87,698.75 890.1,698.91 892.34,699.43 894.57,699.82 896.81,699.97 899.05,700.47 901.28,700.65 903.52,700.77 905.75,700.83 907.99,700.86 910.23,700.88 912.46,700.91 914.7,701.02 916.93,701.11 919.17,701.46 921.41,701.59 923.64,701.66 925.88,701.74 928.11,701.81 930.35,701.9 932.59,702.03 934.82,702.64 937.06,702.94 939.29,703.09 941.53,703.26 943.77,703.51 946,703.57 948.24,703.72 950.47,703.89 952.71,704.04 954.95,704.16 957.18,704.23 959.42,704.3 961.65,704.32 963.89,704.31 966.13,704.38 968.36,704.41 970.6,704.21 972.83,704.12 975.07,703.39 977.31,702.91 979.54,702.74 981.78,702.33 984.01,701.98 986.25,701.88 988.49,701.44 990.72,700.93 992.96,700.03 995.19,699.83 997.43,699.58 999.67,697.79 1001.9,698.9 1004.14,699.27 1006.37,699.04 1008.61,698.85 1010.85,698.73 1013.08,698.45 1015.32,697.9 1017.55,697.74 1019.79,697.59 1022.03,697.46 1024.26,697.2 1026.5,697.15 1028.73,697.11 1030.97,697.08 1033.21,696.98 1035.44,696.59 1037.68,696.49 1039.91,694.78 1042.15,693.66 1044.39,693.19 1046.62,691.96 1048.86,689.66 1051.09,688.9 1053.33,688.53 1055.57,687.59 1057.8,686.47 1060.04,684.6 1062.27,683.74 1064.51,683.33 1066.75,682.32 1068.98,681.89 1071.22,681.63 1073.45,681.5 1075.69,681.39 1077.93,681.3 1080.16,681.26 1082.4,681.18 1084.63,681.15 1086.87,681.09 1089.11,681.02 1091.34,680.67 1093.58,680.62 1095.81,680.59 1098.05,680.44 1100.29,680.31 1102.52,680.25 1104.76,680.36 1106.99,680.36 1109.23,681.03 1111.47,681.6 1113.7,681.77 1115.94,681.98 1118.17,682.16 1120.41,682.17 1122.65,682.7 1124.88,683.2 1127.12,684.03 1129.35,684.15 1131.59,684.35 1133.83,685.95 1136.06,686.01 1138.3,686.07 1140.53,686.27 1142.77,685.56" fill="none" stroke="#109030" stroke-width="1" stroke-linejoin="round" shape-rendering="crispEdges"/>
<polyline points="9.12,706.48 11.35,706.24 13.59,706 15.83,705.77 18.06,705.78 20.3,705.35 22.53,705.31 24.77,705.28 27.01,705.25 29.24,705.22 31.48,705.19 33.71,704.99 35.95,704.79 38.19,704.77 40.42,704.75 42.66,704.72 44.89,704.69 47.13,704.66 49.37,702.8 51.6,702.25 53.84,701.7 56.07,701.73 58.31,701.57 60.55,701.59 62.78,701.54 65.02,701.77 67.25,701.76 69.49,701.77 71.73,701.77 73.96,701.77 76.2,701.76 78.43,701.92 80.67,702.09 82.91,702.07 85.14,701.51 87.38,700.95 89.61,700.77 91.85,700.77 94.09,702.59 96.32,702.75 98.56,703.26 100.79,703.44 103.03,703.68 105.27,702.44 107.5,701.9 109.74,701.84 111.97,701.6 114.21,700.82 116.45,700.39 118.68,699.98 120.92,699.83 123.15,699.63 125.39,699.42 127.63,698.67 129.86,698.82 132.1,698.97 134.33,699.13 136.57,698.96 138.81,698.93 141.04,699.26 143.28,699.24 145.51,699.2 147.75,698.95 149.99,700.35 152.22,700.85 154.46,701.05 156.69,701.11 158.93,701.97 161.17,702.48 163.4,702.97 165.64,703.21 167.87,703.5 170.11,703.77 172.35,704.59 174.58,704.91 176.82,705.39 179.05,705.48 181.29,705.45 183.53,705.31 185.76,705.01 188,704.7 190.23,704.54 192.47,705.01 194.71,705.11 196.94,705.22 199.18,705.33 201.41,705.57 203.65,705.33 205.89,705.21 208.12,705.09 210.36,704.96 212.59,704.97 214.83,705.01 217.07,705.04 219.3,705.07 221.54,704.98 223.77,704.86 226.01,705.17 228.25,705.43 230.48,705.85 232.72,706.16 234.95,706.31 237.19,706.33 239.43,706.36 241.66,706.38 243.9,706.4 246.13,706.13 248.37,706.06 250.61,706.17 252.84,706.28 255.08,706.41 257.31,706.39 259.55,705.38 261.79,705.24 264.02,704.98 266.26,704.3 268.49,703.94 270.73,703.8 272.97,703.68 275.2,703.54 277.44,703.38 279.67,703.37 281.91,703.37 284.15,703.36 286.38,702.85 288.62,700.64 290.85,700.16 293.09,700 295.33,699.42 297.56,699.22 299.8,699.02 302.03,698.82 304.27,699.62 306.51,699.5 308.74,699.78 310.98,700.46 313.21,700.81 315.45,699.21 317.69,699.18 319.92,699 322.16,699.13 324.39,699.1 326.63,698.7 328.87,698.29 331.1,697.68 333.34,699.25 335.57,696.9 337.81,696.62 340.05,696.48 342.28,696.15 344.52,695.81 346.75,695.64 348.99,695.52 351.23,694.08 353.46,691.59 355.7,688.14 357.93,681.62 360.17,677.16 362.41,676.01 364.64,671.99 366.88,670.67 369.11,670.01 371.35,669.07 373.59,667.39 375.82,667.37 378.06,667.62 380.29,668.68 382.53,668.81 384.77,668.31 387,667.81 389.24,668.02 391.47,667.78 393.71,667.46 395.95,668.05 398.18,670.12 400.42,673.45 402.65,678.31 404.89,682.1 407.13,681.53 409.36,684.97 411.6,685.83 413.83,685.79 416.07,686.71 418.31,685.21 420.54,684.68 422.78,684.2 425.01,684.31 427.25,684.04 429.49,684.64 431.72,685.11 433.96,685.21 436.19,684.17 438.43,683.32 440.67,683.69 442.9,682.03 445.14,681.27 447.37,682.55 449.61,682.59 451.85,681.99 454.08,681.29 456.32,680.99 458.55,681.16 460.79,680.88 463.03,683.69 465.26,684.1 467.5,684.41 469.73,685.2 471.97,685.71 474.21,684.86 476.44,684 478.68,683.27 480.91,682.84 483.15,681.67 485.39,681.26 487.62,682.18 489.86,680.73 492.09,680.3 494.33,681.67 496.57,682.18 498.8,682.02 501.04,681.8 503.27,681.22 505.51,680.57 507.75,680.36 509.98,681.17 512.22,681 514.45,681.37 516.69,681.44 518.93,682.21 521.16,683.24 523.4,683.95 525.63,685.18 527.87,686.45 530.11,687.02 532.34,687.36 534.58,689.23 536.81,688.67 539.05,688.34 541.29,689.96 543.52,691.02 545.76,691.1 547.99,691.53 550.23,691.52 552.47,691.13 554.7,690.98 556.94,689.27 559.17,688.4 561.41,688.19 563.65,688.29 565.88,688.5 568.12,688.13 570.35,688.6 572.59,689.56 574.83,689.71 577.06,690.16 579.3,690.08 581.53,690.39 583.77,691.25 586.01,690.28 588.24,690.51 590.48,690.59 592.71,690.73 594.95,690.99 597.19,691.07 599.42,687.46 601.66,687.5 603.89,688.03 606.13,688.04 608.37,686.89 610.6,686.03 612.84,686.19 615.07,686.28 617.31,686.35 619.55,686.58 621.78,686.81 624.02,687.29 626.25,687.76 628.49,687.89 630.73,688.95 632.96,689.1 635.2,689.91 637.43,690.46 639.67,691.23 641.91,692.5 644.14,696.5 646.38,698.71 648.61,699.69 650.85,699.89 653.09,701.32 655.32,702.37 657.56,702.61 659.79,702.58 662.03,702.7 664.27,702.61 666.5,702.79 668.74,702.99 670.97,703.72 673.21,703.87 675.45,704.1 677.68,704.28 679.92,704.23 682.15,703.48 684.39,703.52 686.63,703.4 688.86,703.45 691.1,702.66 693.33,702.56 695.57,702.51 697.81,702.76 700.04,702.74 702.28,702.95 704.51,703.29 706.75,703.52 708.99,703.71 711.22,703.76 713.46,703.73 715.69,703.56 717.93,703.77 720.17,703.69 722.4,703.73 724.64,703.82 726.87,704.27 729.11,704.13 731.35,704.23 733.58,704.1 735.82,704.98 738.05,704.67 740.29,704.8 742.53,704.83 744.76,704.89 747,704.89 749.23,704.89 751.47,704.8 753.71,703.18 755.94,702.66 758.18,701.18 760.41,700.19 762.65,699.75 764.89,698.36 767.12,697.97 769.36,697.81 771.59,698.15 773.83,698.57 776.07,698.59 778.3,698.82 780.54,698.6 782.77,698.98 785.01,698.19 787.25,697.88 789.48,697.57 791.72,697.44 793.95,697.32 796.19,697.14 798.43,698.53 800.66,697.34 802.9,698 805.13,698.68 807.37,698.57 809.61,699.18 811.84,699.36 814.08,699.17 816.31,698.71 818.55,698.33 820.79,698.03 823.02,697.85 825.26,698.03 827.49,698.1 829.73,699.08 831.97,699.28 834.2,699.45 836.44,699.48 838.67,699.51 840.91,699.81 843.15,699.73 845.38,701.13 847.62,701.81 849.85,701.93 852.09,702.4 854.33,702.75 856.56,702.87 858.8,703.22 861.03,703.8 863.27,704.16 865.51,704.34 867.74,700.48 869.98,698.88 872.21,698.6 874.45,697.8 876.69,697.76 878.92,697.7 881.16,697.74 883.39,697.72 885.63,697.63 887.87,697.99 890.1,698.27 892.34,698.46 894.57,698.85 896.81,698.94 899.05,699.49 901.28,699.72 903.52,699.92 905.75,699.97 907.99,700.09 910.23,700.27 912.46,704.41 914.7,706.15 916.93,706.63 919.17,707.5 921.41,707.74 923.64,707.84 925.88,707.99 928.11,708.21 930.35,708.27 932.59,708.38 934.82,708.51 937.06,708.55 939.29,708.5 941.53,708.43 943.77,708.28 946,708.13 948.24,708.02 950.47,707.9 952.71,707.87 954.95,707.88 957.18,707.8 959.42,707.87 961.65,707.72 963.89,707.64 966.13,707.64 968.36,707.7 970.6,706.89 972.83,706.42 975.07,704.27 977.31,702.36 979.54,701.44 981.78,699.97 984.01,698.59 986.25,698.27 988.49,696.56 990.72,694.95 992.96,692.16 995.19,691.62 997.43,690.78 999.67,685.2 1001.9,684.48 1004.14,683.8 1006.37,682.78 1008.61,681.42 1010.85,680.8 1013.08,679.81 1015.32,678.81 1017.55,678.6 1019.79,680.25 1022.03,681.65 1024.26,681.66 1026.5,682.92 1028.73,684.25 1030.97,684.55 1033.21,686.11 1035.44,686.67 1037.68,689.29 1039.91,684.83 1042.15,682.32 1044.39,686.48 1046.62,683.61 1048.86,677.31 1051.09,676.19 1053.33,676.52 1055.57,674.32 1057.8,671.89 1060.04,668.08 1062.27,666.19 1064.51,665.47 1066.75,662.97 1068.98,662.58 1071.22,662 1073.45,661.65 1075.69,661.34 1077.93,661.24 1080.16,662.15 1082.4,662.1 1084.63,667 1086.87,670.16 1089.11,671.37 1091.34,673.92 1093.58,680.75 1095.81,682.79 1098.05,683.38 1100.29,685.79 1102.52,689.05 1104.76,694.18 1106.99,696.3 1109.23,697.37 1111.47,700.18 1113.7,701.07 1115.94,701.01 1118.17,700.59 1120.41,700.61 1122.65,700.75 1124.88,700.78 1127.12,700.71 1129.35,700.63 1131.59,700.56 1133.83,700 1136.06,700.5 1138.3,700.15 1140.53,699.82 1142.77,696.77" fill="none" stroke="#f0a800" stroke-width="1" stroke-linejoin="round" shape-rendering="crispEdges"/>
<polyline points="9.12,706.48 11.35,705.52 13.59,704.56 15.83,703.62 18.06,703.66 20.3,701.93 22.53,702.76 24.77,703.58 27.01,704.41 29.24,704.25 31.48,705.87 33.71,705.21 35.95,704.52 38.19,704.55 40.42,704.59 42.66,704.62 44.89,705.28 47.13,705.97 49.37,698.62 51.6,696.49 53.84,694.38 56.07,693.69 58.31,692.19 60.55,698.77 62.78,700.84 65.02,702.2 67.25,702.88 69.49,704.4 71.73,705.13 73.96,705.14 76.2,705.82 78.43,705.82 80.67,705.78 82.91,705.78 85.14,703.57 87.38,701.39 89.61,700.7 91.85,700.7 94.09,700.7 96.32,701.43 98.56,703.63 100.79,704.38 103.03,703.86 105.27,698.14 107.5,697.47 109.74,696.54 111.97,695.52 114.21,692.94 116.45,696.95 118.68,697.45 120.92,697.77 123.15,697.91 125.39,700.19 127.63,698.89 129.86,698.94 132.1,697.96 134.33,698.7 136.57,698.84 138.81,701.76 141.04,703.19 143.28,704.7 145.51,704.68 147.75,703.81 149.99,703.8 152.22,703.81 154.46,703.76 156.69,703.16 158.93,705.04 161.17,705.48 163.4,705.95 165.64,706.43 167.87,707.45 170.11,707.38 172.35,707.3 174.58,706.71 176.82,706.65 179.05,706.64 181.29,705.56 183.53,704.67 185.76,703.6 188,701.96 190.23,700.93 192.47,702.05 194.71,702.99 196.94,704.62 199.18,706.27 201.41,707.26 203.65,706.32 205.89,705.86 208.12,705.42 210.36,704.96 212.59,705.06 214.83,706.09 217.07,706.62 219.3,706.65 221.54,706.73 223.77,706.2 226.01,706.21 228.25,706.23 230.48,706.72 232.72,706.69 234.95,706.73 237.19,706.71 239.43,706.73 241.66,706.73 243.9,707.21 246.13,706.52 248.37,705.24 250.61,705.1 252.84,705.03 255.08,705.01 257.31,706.12 259.55,703.35 261.79,702.91 264.02,701.43 266.26,698.28 268.49,696.39 270.73,699.91 272.97,699.98 275.2,700.98 277.44,703.02 279.67,704.45 281.91,704.97 284.15,705.44 286.38,703.95 288.62,696.26 290.85,693.68 293.09,691.77 295.33,689.34 297.56,690.52 299.8,698.53 302.03,700.77 304.27,701.84 306.51,703.25 308.74,703.68 310.98,704.03 313.21,704.34 315.45,698.27 317.69,698.68 319.92,697.86 322.16,697.7 324.39,697.61 326.63,702.94 328.87,701.91 331.1,698.66 333.34,696.72 335.57,684.87 337.81,683.42 340.05,682.08 342.28,684.42 344.52,684.79 346.75,695.74 348.99,697.46 351.23,693.67 353.46,685.4 355.7,673.36 357.93,648.28 360.17,624.81 362.41,626.41 364.64,619.46 366.88,627.8 369.11,651.15 371.35,670.61 373.59,667.42 375.82,680.19 378.06,684.53 380.29,679.57 382.53,682.36 384.77,685.73 387,686.17 389.24,686.38 391.47,692.11 393.71,692.07 395.95,692.66 398.18,694.64 400.42,695.09 402.65,690.43 404.89,683.36 407.13,680.32 409.36,678.88 411.6,677.33 413.83,681.05 416.07,689.06 418.31,682.13 420.54,679.03 422.78,677.99 425.01,673.67 427.25,671.69 429.49,683.46 431.72,687.9 433.96,690.43 436.19,691.53 438.43,689.15 440.67,688.85 442.9,682.33 445.14,679.33 447.37,683.95 449.61,680.47 451.85,673.52 454.08,675.89 456.32,676.22 458.55,675.51 460.79,682.21 463.03,688.92 465.26,690.28 467.5,691.67 469.73,689.82 471.97,691.01 474.21,688.17 476.44,687.49 478.68,685.87 480.91,682.07 483.15,673.01 485.39,674.42 487.62,675.05 489.86,669.14 492.09,673.8 494.33,680.46 496.57,677.22 498.8,675.25 501.04,680.52 503.27,679.21 505.51,677.79 507.75,681.61 509.98,686.9 512.22,688.47 514.45,690.42 516.69,694.49 518.93,695.6 521.16,695.75 523.4,697.66 525.63,697.3 527.87,693.06 530.11,693.64 532.34,691.56 534.58,690.25 536.81,687.74 539.05,688.01 541.29,689 543.52,689.87 545.76,688.01 547.99,690.67 550.23,690.51 552.47,686.27 554.7,686.76 556.94,681.16 559.17,677.86 561.41,681.19 563.65,684.26 565.88,685.82 568.12,693.08 570.35,698.13 572.59,698.54 574.83,699.32 577.06,698.19 579.3,698.05 581.53,694.89 583.77,694.76 586.01,691.27 588.24,691.26 590.48,690.08 592.71,692.03 594.95,689.47 597.19,689.44 599.42,674.54 601.66,668.8 603.89,667.07 606.13,669.37 608.37,667.51 610.6,680.1 612.84,687.84 615.07,691.12 617.31,691.79 619.55,698.12 621.78,701.34 624.02,702.46 626.25,700.81 628.49,700.92 630.73,700.74 632.96,700.42 635.2,700.54 637.43,702.85 639.67,702.83 641.91,703.62 644.14,704.13 646.38,704.03 648.61,703.98 650.85,704.03 653.09,702.8 655.32,703.59 657.56,703.44 659.79,702.68 662.03,703.02 664.27,703.26 666.5,703 668.74,703.96 670.97,705.35 673.21,705.58 675.45,706.73 677.68,706.39 679.92,705.5 682.15,701.93 684.39,701.43 686.63,700.79 688.86,700.82 691.1,697.77 693.33,700.27 695.57,700.01 697.81,700.25 700.04,700.78 702.28,704.58 704.51,705.59 706.75,707.05 708.99,707.05 711.22,707.06 713.46,707.06 715.69,706.45 717.93,706.58 720.17,706.65 722.4,706.27 724.64,705.87 726.87,704.78 729.11,702.88 731.35,702.98 733.58,702.28 735.82,702.41 738.05,701.86 740.29,702.7 742.53,702.62 744.76,703.94 747,704.23 749.23,706.47 751.47,707.05 753.71,700.49 755.94,698.17 758.18,692.19 760.41,687.63 762.65,686.38 764.89,687.34 767.12,687.5 769.36,692.41 771.59,696.62 773.83,698.13 776.07,703.93 778.3,705.67 780.54,705.57 782.77,705.2 785.01,701.19 787.25,699.78 789.48,698.94 791.72,699.6 793.95,699.8 796.19,702.84 798.43,703.07 800.66,697.25 802.9,694.43 805.13,693.09 807.37,692.12 809.61,689.94 811.84,695.6 814.08,697.08 816.31,696.76 818.55,697.16 820.79,699.32 823.02,699.6 825.26,701 827.49,702.74 829.73,704.2 831.97,704.78 834.2,705.35 836.44,705.4 838.67,705.43 840.91,705.75 843.15,704.87 845.38,703.96 847.62,703.75 849.85,702.81 852.09,702.49 854.33,702.04 856.56,702.58 858.8,702.74 861.03,704.22 863.27,704.21 865.51,705.66 867.74,690.03 869.98,683.65 872.21,681.95 874.45,678.73 876.69,678.45 878.92,694.25 881.16,700.84 883.39,701.88 885.63,705.1 887.87,705.82 890.1,706.22 892.34,706.64 894.57,707.34 896.81,707.7 899.05,708.02 901.28,708.38 903.52,708.55 905.75,708.7 907.99,708.83 910.23,708.81 912.46,708.8 914.7,708.58 916.93,708.62 919.17,708.37 921.41,708.31 923.64,707.96 925.88,708.19 928.11,708.17 930.35,708.16 932.59,708.4 934.82,708.9 937.06,708.87 939.29,708.5 941.53,708.37 943.77,707.59 946,706.88 948.24,706.42 950.47,706.32 952.71,706.58 954.95,707.22 957.18,707.45 959.42,707.99 961.65,707.89 963.89,707.45 966.13,707.35 968.36,707.58 970.6,704.29 972.83,702.98 975.07,694.68 977.31,687.27 979.54,683.86 981.78,681.19 984.01,677.18 986.25,684.36 988.49,684.4 990.72,680.93 992.96,675.19 995.19,678.41 997.43,676.64 999.67,661.79 1001.9,665.56 1004.14,674.53 1006.37,672.53 1008.61,670.01 1010.85,689.74 1013.08,688.88 1015.32,684.34 1017.55,686.28 1019.79,689.98 1022.03,690.66 1024.26,691.25 1026.5,697.61 1028.73,699.76 1030.97,701.57 1033.21,702.26 1035.44,700.99 1037.68,700.68 1039.91,680.74 1042.15,667.72 1044.39,663.26 1046.62,653.31 1048.86,626.6 1051.09,638 1053.33,646.83 1055.57,641.12 1057.8,642.02 1060.04,647.44 1062.27,646.24 1064.51,645.77 1066.75,645.24 1068.98,654.02 1071.22,673.28 1073.45,681.62 1075.69,685.06 1077.93,695.35 1080.16,699.27 1082.4,701.08 1084.63,702.15 1086.87,702.98 1089.11,703.79 1091.34,700.36 1093.58,701.19 1095.81,701.15 1098.05,699.72 1100.29,698.78 1102.52,702.55 1104.76,701.17 1106.99,700.28 1109.23,701.73 1111.47,702.8 1113.7,702.1 1115.94,700.6 1118.17,698.76 1120.41,698.03 1122.65,697.64 1124.88,698.12 1127.12,699.87 1129.35,702.33 1131.59,702.79 1133.83,700.77 1136.06,699.23 1138.3,698.97 1140.53,697.91 1142.77,684.56" fill="none" stroke="#e020d0" stroke-width="1" stroke-linejoin="round" shape-rendering="crispEdges"/>
<g shape-rendering="crispEdges">
<line x1="8" y1="396.5" x2="1240.5" y2="396.5" stroke="#8c8c8c" stroke-width="1.5"/>
<line x1="8" y1="555.5" x2="1240.5" y2="555.5" stroke="#8c8c8c" stroke-width="1.5"/>
<line x1="8" y1="714.5" x2="1240.5" y2="714.5" stroke="#8c8c8c" stroke-width="1"/>
<line x1="8" y1="732" x2="1240.5" y2="732" stroke="#8c8c8c" stroke-width="1"/>
<line x1="1175.5" y1="78" x2="1175.5" y2="732" stroke="#8c8c8c" stroke-width="1"/>
<line x1="1240.5" y1="77" x2="1240.5" y2="732" stroke="#8c8c8c" stroke-width="1"/>
</g>
<g shape-rendering="crispEdges">
<line x1="1175.5" y1="89.5" x2="1181.5" y2="89.5" stroke="#808080" stroke-width="1"/>
<line x1="1175.5" y1="96.5" x2="1178" y2="96.5" stroke="#808080" stroke-width="1"/>
<line x1="1175.5" y1="102.5" x2="1178" y2="102.5" stroke="#808080" stroke-width="1"/>
<line x1="1175.5" y1="108.5" x2="1178" y2="108.5" stroke="#808080" stroke-width="1"/>
<line x1="1175.5" y1="114.5" x2="1178" y2="114.5" stroke="#808080" stroke-width="1"/>
<line x1="1175.5" y1="120.5" x2="1181.5" y2="120.5" stroke="#808080" stroke-width="1"/>
<line x1="1175.5" y1="127.5" x2="1178" y2="127.5" stroke="#808080" stroke-width="1"/>
<line x1="1175.5" y1="133.5" x2="1178" y2="133.5" stroke="#808080" stroke-width="1"/>
<line x1="1175.5" y1="139.5" x2="1178" y2="139.5" stroke="#808080" stroke-width="1"/>
<line x1="1175.5" y1="145.5" x2="1178" y2="145.5" stroke="#808080" stroke-width="1"/>
<line x1="1175.5" y1="151.5" x2="1181.5" y2="151.5" stroke="#808080" stroke-width="1"/>
<line x1="1175.5" y1="158.5" x2="1178" y2="158.5" stroke="#808080" stroke-width="1"/>
<line x1="1175.5" y1="164.5" x2="1178" y2="164.5" stroke="#808080" stroke-width="1"/>
<line x1="1175.5" y1="170.5" x2="1178" y2="170.5" stroke="#808080" stroke-width="1"/>
<line x1="1175.5" y1="176.5" x2="1178" y2="176.5" stroke="#808080" stroke-width="1"/>
<line x1="1175.5" y1="183.5" x2="1181.5" y2="183.5" stroke="#808080" stroke-width="1"/>
<line x1="1175.5" y1="189.5" x2="1178" y2="189.5" stroke="#808080" stroke-width="1"/>
<line x1="1175.5" y1="195.5" x2="1178" y2="195.5" stroke="#808080" stroke-width="1"/>
<line x1="1175.5" y1="201.5" x2="1178" y2="201.5" stroke="#808080" stroke-width="1"/>
<line x1="1175.5" y1="207.5" x2="1178" y2="207.5" stroke="#808080" stroke-width="1"/>
<line x1="1175.5" y1="214.5" x2="1181.5" y2="214.5" stroke="#808080" stroke-width="1"/>
<line x1="1175.5" y1="220.5" x2="1178" y2="220.5" stroke="#808080" stroke-width="1"/>
<line x1="1175.5" y1="226.5" x2="1178" y2="226.5" stroke="#808080" stroke-width="1"/>
<line x1="1175.5" y1="232.5" x2="1178" y2="232.5" stroke="#808080" stroke-width="1"/>
<line x1="1175.5" y1="239.5" x2="1178" y2="239.5" stroke="#808080" stroke-width="1"/>
<line x1="1175.5" y1="245.5" x2="1181.5" y2="245.5" stroke="#808080" stroke-width="1"/>
<line x1="1175.5" y1="251.5" x2="1178" y2="251.5" stroke="#808080" stroke-width="1"/>
<line x1="1175.5" y1="257.5" x2="1178" y2="257.5" stroke="#808080" stroke-width="1"/>
<line x1="1175.5" y1="263.5" x2="1178" y2="263.5" stroke="#808080" stroke-width="1"/>
<line x1="1175.5" y1="270.5" x2="1178" y2="270.5" stroke="#808080" stroke-width="1"/>
<line x1="1175.5" y1="276.5" x2="1181.5" y2="276.5" stroke="#808080" stroke-width="1"/>
<line x1="1175.5" y1="282.5" x2="1178" y2="282.5" stroke="#808080" stroke-width="1"/>
<line x1="1175.5" y1="288.5" x2="1178" y2="288.5" stroke="#808080" stroke-width="1"/>
<line x1="1175.5" y1="295.5" x2="1178" y2="295.5" stroke="#808080" stroke-width="1"/>
<line x1="1175.5" y1="301.5" x2="1178" y2="301.5" stroke="#808080" stroke-width="1"/>
<line x1="1175.5" y1="307.5" x2="1181.5" y2="307.5" stroke="#808080" stroke-width="1"/>
<line x1="1175.5" y1="313.5" x2="1178" y2="313.5" stroke="#808080" stroke-width="1"/>
<line x1="1175.5" y1="319.5" x2="1178" y2="319.5" stroke="#808080" stroke-width="1"/>
<line x1="1175.5" y1="326.5" x2="1178" y2="326.5" stroke="#808080" stroke-width="1"/>
<line x1="1175.5" y1="332.5" x2="1178" y2="332.5" stroke="#808080" stroke-width="1"/>
<line x1="1175.5" y1="338.5" x2="1181.5" y2="338.5" stroke="#808080" stroke-width="1"/>
<line x1="1175.5" y1="344.5" x2="1178" y2="344.5" stroke="#808080" stroke-width="1"/>
<line x1="1175.5" y1="350.5" x2="1178" y2="350.5" stroke="#808080" stroke-width="1"/>
<line x1="1175.5" y1="357.5" x2="1178" y2="357.5" stroke="#808080" stroke-width="1"/>
<line x1="1175.5" y1="363.5" x2="1178" y2="363.5" stroke="#808080" stroke-width="1"/>
<line x1="1175.5" y1="369.5" x2="1181.5" y2="369.5" stroke="#808080" stroke-width="1"/>
<line x1="1175.5" y1="375.5" x2="1178" y2="375.5" stroke="#808080" stroke-width="1"/>
<line x1="1175.5" y1="382.5" x2="1178" y2="382.5" stroke="#808080" stroke-width="1"/>
<line x1="1175.5" y1="388.5" x2="1178" y2="388.5" stroke="#808080" stroke-width="1"/>
<line x1="1175.5" y1="394.5" x2="1178" y2="394.5" stroke="#808080" stroke-width="1"/>
<line x1="1175.5" y1="554.5" x2="1181.5" y2="554.5" stroke="#808080" stroke-width="1"/>
<line x1="1175.5" y1="546.5" x2="1178" y2="546.5" stroke="#808080" stroke-width="1"/>
<line x1="1175.5" y1="539.5" x2="1178" y2="539.5" stroke="#808080" stroke-width="1"/>
<line x1="1175.5" y1="532.5" x2="1178" y2="532.5" stroke="#808080" stroke-width="1"/>
<line x1="1175.5" y1="525.5" x2="1178" y2="525.5" stroke="#808080" stroke-width="1"/>
<line x1="1175.5" y1="518.5" x2="1181.5" y2="518.5" stroke="#808080" stroke-width="1"/>
<line x1="1175.5" y1="511.5" x2="1178" y2="511.5" stroke="#808080" stroke-width="1"/>
<line x1="1175.5" y1="504.5" x2="1178" y2="504.5" stroke="#808080" stroke-width="1"/>
<line x1="1175.5" y1="497.5" x2="1178" y2="497.5" stroke="#808080" stroke-width="1"/>
<line x1="1175.5" y1="490.5" x2="1178" y2="490.5" stroke="#808080" stroke-width="1"/>
<line x1="1175.5" y1="482.5" x2="1181.5" y2="482.5" stroke="#808080" stroke-width="1"/>
<line x1="1175.5" y1="475.5" x2="1178" y2="475.5" stroke="#808080" stroke-width="1"/>
<line x1="1175.5" y1="468.5" x2="1178" y2="468.5" stroke="#808080" stroke-width="1"/>
<line x1="1175.5" y1="461.5" x2="1178" y2="461.5" stroke="#808080" stroke-width="1"/>
<line x1="1175.5" y1="454.5" x2="1178" y2="454.5" stroke="#808080" stroke-width="1"/>
<line x1="1175.5" y1="447.5" x2="1181.5" y2="447.5" stroke="#808080" stroke-width="1"/>
<line x1="1175.5" y1="440.5" x2="1178" y2="440.5" stroke="#808080" stroke-width="1"/>
<line x1="1175.5" y1="433.5" x2="1178" y2="433.5" stroke="#808080" stroke-width="1"/>
<line x1="1175.5" y1="425.5" x2="1178" y2="425.5" stroke="#808080" stroke-width="1"/>
<line x1="1175.5" y1="418.5" x2="1178" y2="418.5" stroke="#808080" stroke-width="1"/>
<line x1="1175.5" y1="411.5" x2="1181.5" y2="411.5" stroke="#808080" stroke-width="1"/>
<line x1="1175.5" y1="404.5" x2="1178" y2="404.5" stroke="#808080" stroke-width="1"/>
<line x1="1175.5" y1="713.5" x2="1181.5" y2="713.5" stroke="#808080" stroke-width="1"/>
<line x1="1175.5" y1="706.5" x2="1178" y2="706.5" stroke="#808080" stroke-width="1"/>
<line x1="1175.5" y1="699.5" x2="1178" y2="699.5" stroke="#808080" stroke-width="1"/>
<line x1="1175.5" y1="692.5" x2="1178" y2="692.5" stroke="#808080" stroke-width="1"/>
<line x1="1175.5" y1="685.5" x2="1178" y2="685.5" stroke="#808080" stroke-width="1"/>
<line x1="1175.5" y1="678.5" x2="1181.5" y2="678.5" stroke="#808080" stroke-width="1"/>
<line x1="1175.5" y1="671.5" x2="1178" y2="671.5" stroke="#808080" stroke-width="1"/>
<line x1="1175.5" y1="664.5" x2="1178" y2="664.5" stroke="#808080" stroke-width="1"/>
<line x1="1175.5" y1="657.5" x2="1178" y2="657.5" stroke="#808080" stroke-width="1"/>
<line x1="1175.5" y1="651.5" x2="1178" y2="651.5" stroke="#808080" stroke-width="1"/>
<line x1="1175.5" y1="644.5" x2="1181.5" y2="644.5" stroke="#808080" stroke-width="1"/>
<line x1="1175.5" y1="637.5" x2="1178" y2="637.5" stroke="#808080" stroke-width="1"/>
<line x1="1175.5" y1="630.5" x2="1178" y2="630.5" stroke="#808080" stroke-width="1"/>
<line x1="1175.5" y1="623.5" x2="1178" y2="623.5" stroke="#808080" stroke-width="1"/>
<line x1="1175.5" y1="616.5" x2="1178" y2="616.5" stroke="#808080" stroke-width="1"/>
<line x1="1175.5" y1="609.5" x2="1181.5" y2="609.5" stroke="#808080" stroke-width="1"/>
<line x1="1175.5" y1="602.5" x2="1178" y2="602.5" stroke="#808080" stroke-width="1"/>
<line x1="1175.5" y1="595.5" x2="1178" y2="595.5" stroke="#808080" stroke-width="1"/>
<line x1="1175.5" y1="588.5" x2="1178" y2="588.5" stroke="#808080" stroke-width="1"/>
<line x1="1175.5" y1="581.5" x2="1178" y2="581.5" stroke="#808080" stroke-width="1"/>
<line x1="1175.5" y1="574.5" x2="1181.5" y2="574.5" stroke="#808080" stroke-width="1"/>
<line x1="1175.5" y1="567.5" x2="1178" y2="567.5" stroke="#808080" stroke-width="1"/>
<line x1="1175.5" y1="561.5" x2="1178" y2="561.5" stroke="#808080" stroke-width="1"/>
</g>
<text x="1183.3" y="123.7" font-size="12" fill="#333333" text-anchor="start" font-weight="normal" textLength="39.75" lengthAdjust="spacingAndGlyphs">225,000</text>
<text x="1183.3" y="154.79" font-size="12" fill="#333333" text-anchor="start" font-weight="normal" textLength="39.75" lengthAdjust="spacingAndGlyphs">200,000</text>
<text x="1183.3" y="185.88" font-size="12" fill="#333333" text-anchor="start" font-weight="normal" textLength="39.75" lengthAdjust="spacingAndGlyphs">175,000</text>
<text x="1183.3" y="216.97" font-size="12" fill="#333333" text-anchor="start" font-weight="normal" textLength="39.75" lengthAdjust="spacingAndGlyphs">150,000</text>
<text x="1183.3" y="248.06" font-size="12" fill="#333333" text-anchor="start" font-weight="normal" textLength="39.75" lengthAdjust="spacingAndGlyphs">125,000</text>
<text x="1183.3" y="279.15" font-size="12" fill="#333333" text-anchor="start" font-weight="normal" textLength="39.75" lengthAdjust="spacingAndGlyphs">100,000</text>
<text x="1183.3" y="310.24" font-size="12" fill="#333333" text-anchor="start" font-weight="normal" textLength="34" lengthAdjust="spacingAndGlyphs">75,000</text>
<text x="1183.3" y="341.33" font-size="12" fill="#333333" text-anchor="start" font-weight="normal" textLength="34" lengthAdjust="spacingAndGlyphs">50,000</text>
<text x="1183.3" y="372.42" font-size="12" fill="#333333" text-anchor="start" font-weight="normal" textLength="34" lengthAdjust="spacingAndGlyphs">25,000</text>
<text x="1177" y="89.5" font-size="12" fill="#e01010" text-anchor="start" font-weight="normal" textLength="54" lengthAdjust="spacingAndGlyphs">LC:137.42</text>
<text x="1177" y="101.5" font-size="12" fill="#1a50d8" text-anchor="start" font-weight="normal" textLength="54" lengthAdjust="spacingAndGlyphs">HC:-81.89</text>
<rect x="1179.8" y="338" width="58.2" height="12.6" fill="#e4140c"/>
<text x="1184" y="348.5" font-size="12" fill="#ffffff" text-anchor="start" font-weight="normal" textLength="33" lengthAdjust="spacingAndGlyphs">44,500</text>
<text x="1184" y="361" font-size="12" fill="#e01010" text-anchor="start" font-weight="normal" textLength="36" lengthAdjust="spacingAndGlyphs">13.67%</text>
<text x="1183.3" y="414" font-size="12" fill="#333333" text-anchor="start" font-weight="normal" textLength="40" lengthAdjust="spacingAndGlyphs">800,000</text>
<text x="1183.3" y="449.6" font-size="12" fill="#333333" text-anchor="start" font-weight="normal" textLength="40" lengthAdjust="spacingAndGlyphs">600,000</text>
<text x="1183.3" y="485.2" font-size="12" fill="#333333" text-anchor="start" font-weight="normal" textLength="40" lengthAdjust="spacingAndGlyphs">400,000</text>
<rect x="1180" y="503" width="58" height="13" fill="#e4140c"/>
<text x="1183.5" y="514" font-size="12" fill="#ffffff" text-anchor="start" font-weight="normal" textLength="41" lengthAdjust="spacingAndGlyphs">238,169</text>
<text x="1183.5" y="526.5" font-size="12" fill="#e01010" text-anchor="start" font-weight="normal" textLength="41" lengthAdjust="spacingAndGlyphs">580.70%</text>
<text x="1183.5" y="577.4" font-size="12" fill="#333333" text-anchor="start" font-weight="normal" textLength="41.5" lengthAdjust="spacingAndGlyphs">10,000K</text>
<text x="1183.5" y="612.05" font-size="12" fill="#333333" text-anchor="start" font-weight="normal" textLength="35.5" lengthAdjust="spacingAndGlyphs">7,500K</text>
<text x="1183.5" y="681.35" font-size="12" fill="#333333" text-anchor="start" font-weight="normal" textLength="35.5" lengthAdjust="spacingAndGlyphs">2,500K</text>
<rect x="1180" y="629.3" width="58" height="12.4" fill="#e4140c"/>
<text x="1183.5" y="640" font-size="12" fill="#ffffff" text-anchor="start" font-weight="normal" textLength="35.5" lengthAdjust="spacingAndGlyphs">5,487K</text>
<text x="1183.5" y="652.5" font-size="12" fill="#e01010" text-anchor="start" font-weight="normal" textLength="41" lengthAdjust="spacingAndGlyphs">522.92%</text>
<rect x="1230" y="400.5" width="7.5" height="7" fill="#404040"/>
<path d="M1231.8 402.3l4 3.4M1235.8 402.3l-4 3.4" stroke="#ffffff" stroke-width="0.9"/>
<rect x="1230" y="559.5" width="7.5" height="7" fill="#404040"/>
<path d="M1231.8 561.3l4 3.4M1235.8 561.3l-4 3.4" stroke="#ffffff" stroke-width="0.9"/>
<g shape-rendering="crispEdges">
<line x1="72.5" y1="714" x2="72.5" y2="732" stroke="#a0a0a0" stroke-width="1"/>
<line x1="122.5" y1="714" x2="122.5" y2="732" stroke="#a0a0a0" stroke-width="1"/>
<line x1="171.5" y1="714" x2="171.5" y2="732" stroke="#a0a0a0" stroke-width="1"/>
<line x1="213.5" y1="714" x2="213.5" y2="732" stroke="#a0a0a0" stroke-width="1"/>
<line x1="262.5" y1="714" x2="262.5" y2="732" stroke="#a0a0a0" stroke-width="1"/>
<line x1="312.5" y1="714" x2="312.5" y2="732" stroke="#a0a0a0" stroke-width="1"/>
<line x1="359.5" y1="714" x2="359.5" y2="732" stroke="#a0a0a0" stroke-width="1"/>
<line x1="401.5" y1="714" x2="401.5" y2="732" stroke="#a0a0a0" stroke-width="1"/>
<line x1="444.5" y1="714" x2="444.5" y2="732" stroke="#a0a0a0" stroke-width="1"/>
<line x1="493.5" y1="714" x2="493.5" y2="732" stroke="#a0a0a0" stroke-width="1"/>
<line x1="542.5" y1="714" x2="542.5" y2="732" stroke="#a0a0a0" stroke-width="1"/>
<line x1="587.5" y1="714" x2="587.5" y2="732" stroke="#a0a0a0" stroke-width="1"/>
<line x1="627.5" y1="714" x2="627.5" y2="732" stroke="#a0a0a0" stroke-width="1"/>
<line x1="674.5" y1="714" x2="674.5" y2="732" stroke="#a0a0a0" stroke-width="1"/>
<line x1="721.5" y1="714" x2="721.5" y2="732" stroke="#a0a0a0" stroke-width="1"/>
<line x1="768.5" y1="714" x2="768.5" y2="732" stroke="#a0a0a0" stroke-width="1"/>
<line x1="812.5" y1="714" x2="812.5" y2="732" stroke="#a0a0a0" stroke-width="1"/>
<line x1="859.5" y1="714" x2="859.5" y2="732" stroke="#a0a0a0" stroke-width="1"/>
<line x1="909.5" y1="714" x2="909.5" y2="732" stroke="#a0a0a0" stroke-width="1"/>
<line x1="953.5" y1="714" x2="953.5" y2="732" stroke="#a0a0a0" stroke-width="1"/>
<line x1="996.5" y1="714" x2="996.5" y2="732" stroke="#a0a0a0" stroke-width="1"/>
<line x1="1045.5" y1="714" x2="1045.5" y2="732" stroke="#a0a0a0" stroke-width="1"/>
<line x1="1092.5" y1="714" x2="1092.5" y2="732" stroke="#a0a0a0" stroke-width="1"/>
<line x1="1137.5" y1="714" x2="1137.5" y2="732" stroke="#a0a0a0" stroke-width="1"/>
</g>
<text x="9.5" y="727" font-size="12.5" fill="#333333" text-anchor="start" font-weight="normal" textLength="42" lengthAdjust="spacingAndGlyphs">2021/01</text>
<text x="74.1" y="727" font-size="12.5" fill="#333333" text-anchor="start" font-weight="normal" textLength="12.5" lengthAdjust="spacingAndGlyphs">03</text>
<text x="123.8" y="727" font-size="12.5" fill="#333333" text-anchor="start" font-weight="normal" textLength="12.5" lengthAdjust="spacingAndGlyphs">04</text>
<text x="172.8" y="727" font-size="12.5" fill="#333333" text-anchor="start" font-weight="normal" textLength="12.5" lengthAdjust="spacingAndGlyphs">05</text>
<text x="214.8" y="727" font-size="12.5" fill="#333333" text-anchor="start" font-weight="normal" textLength="12.5" lengthAdjust="spacingAndGlyphs">06</text>
<text x="263.5" y="727" font-size="12.5" fill="#333333" text-anchor="start" font-weight="normal" textLength="12.5" lengthAdjust="spacingAndGlyphs">07</text>
<text x="314" y="727" font-size="12.5" fill="#333333" text-anchor="start" font-weight="normal" textLength="12.5" lengthAdjust="spacingAndGlyphs">08</text>
<text x="361" y="727" font-size="12.5" fill="#333333" text-anchor="start" font-weight="normal" textLength="12.5" lengthAdjust="spacingAndGlyphs">09</text>
<text x="403" y="727" font-size="12.5" fill="#333333" text-anchor="start" font-weight="normal" textLength="12.5" lengthAdjust="spacingAndGlyphs">10</text>
<text x="446.1" y="727" font-size="12.5" fill="#333333" text-anchor="start" font-weight="normal" textLength="12.5" lengthAdjust="spacingAndGlyphs">11</text>
<text x="495.1" y="727" font-size="12.5" fill="#333333" text-anchor="start" font-weight="normal" textLength="12.5" lengthAdjust="spacingAndGlyphs">12</text>
<text x="543.8" y="727" font-size="12.5" fill="#333333" text-anchor="start" font-weight="normal" textLength="42" lengthAdjust="spacingAndGlyphs">2022/01</text>
<text x="588.7" y="727" font-size="12.5" fill="#333333" text-anchor="start" font-weight="normal" textLength="12.5" lengthAdjust="spacingAndGlyphs">02</text>
<text x="628.9" y="727" font-size="12.5" fill="#333333" text-anchor="start" font-weight="normal" textLength="12.5" lengthAdjust="spacingAndGlyphs">03</text>
<text x="675.9" y="727" font-size="12.5" fill="#333333" text-anchor="start" font-weight="normal" textLength="12.5" lengthAdjust="spacingAndGlyphs">04</text>
<text x="723" y="727" font-size="12.5" fill="#333333" text-anchor="start" font-weight="normal" textLength="12.5" lengthAdjust="spacingAndGlyphs">05</text>
<text x="770" y="727" font-size="12.5" fill="#333333" text-anchor="start" font-weight="normal" textLength="12.5" lengthAdjust="spacingAndGlyphs">06</text>
<text x="813.8" y="727" font-size="12.5" fill="#333333" text-anchor="start" font-weight="normal" textLength="12.5" lengthAdjust="spacingAndGlyphs">07</text>
<text x="860.5" y="727" font-size="12.5" fill="#333333" text-anchor="start" font-weight="normal" textLength="12.5" lengthAdjust="spacingAndGlyphs">08</text>
<text x="911" y="727" font-size="12.5" fill="#333333" text-anchor="start" font-weight="normal" textLength="12.5" lengthAdjust="spacingAndGlyphs">09</text>
<text x="955" y="727" font-size="12.5" fill="#333333" text-anchor="start" font-weight="normal" textLength="12.5" lengthAdjust="spacingAndGlyphs">10</text>
<text x="998.3" y="727" font-size="12.5" fill="#333333" text-anchor="start" font-weight="normal" textLength="12.5" lengthAdjust="spacingAndGlyphs">11</text>
<text x="1047.1" y="727" font-size="12.5" fill="#333333" text-anchor="start" font-weight="normal" textLength="12.5" lengthAdjust="spacingAndGlyphs">12</text>
<text x="1093.9" y="727" font-size="12.5" fill="#333333" text-anchor="start" font-weight="normal" textLength="42" lengthAdjust="spacingAndGlyphs">2023/01</text>
<text x="1138.8" y="727" font-size="12.5" fill="#333333" text-anchor="start" font-weight="normal" textLength="12.5" lengthAdjust="spacingAndGlyphs">02</text>
<text x="1182" y="727" font-size="12.5" fill="#333333" text-anchor="start" font-weight="normal" textLength="30" lengthAdjust="spacingAndGlyphs">02/03</text>
<rect x="11.5" y="84" width="4.3" height="5" fill="#b0b0b0" stroke="#808080" stroke-width="0.8"/>
<rect x="18.5" y="79.8" width="131.5" height="13.7" fill="#e6e6e6" stroke="#b4b4b4" stroke-width="1"/>
<text x="22" y="91" font-size="13" fill="#303030" text-anchor="start" font-weight="normal" textLength="124" lengthAdjust="spacingAndGlyphs">위메이드 매물대 수(10)</text>
<rect x="157.8" y="84" width="4.3" height="5" fill="#b0b0b0" stroke="#808080" stroke-width="0.8"/>
<text x="169" y="91" font-size="13" fill="#e020c0" text-anchor="start" font-weight="normal" textLength="61" lengthAdjust="spacingAndGlyphs">종가 단순 5</text>
<text x="239" y="91" font-size="13" fill="#2030b0" text-anchor="start" font-weight="normal" textLength="13" lengthAdjust="spacingAndGlyphs">10</text>
<text x="258" y="91" font-size="13" fill="#f0a000" text-anchor="start" font-weight="normal" textLength="12.5" lengthAdjust="spacingAndGlyphs">20</text>
<text x="278" y="91" font-size="13" fill="#209030" text-anchor="start" font-weight="normal" textLength="13" lengthAdjust="spacingAndGlyphs">60</text>
<text x="298" y="91" font-size="13" fill="#707070" text-anchor="start" font-weight="normal" textLength="18" lengthAdjust="spacingAndGlyphs">120</text>
<rect x="14" y="97.3" width="12.5" height="13.5" fill="#ffffff" stroke="#000" stroke-width="1.2"/><rect x="16" y="99.5" width="8.5" height="9" fill="#ffffff" stroke="#909090" stroke-width="1"/><path d="M16 102h8.5M16 106h8.5M18.8 99.5v9M21.7 99.5v9" stroke="#909090" stroke-width="0.9"/><rect x="16.5" y="102.5" width="2" height="3.5" fill="#c8c8c8"/>
<rect x="11.5" y="402.5" width="4.3" height="5" fill="#b0b0b0" stroke="#808080" stroke-width="0.8"/>
<text x="22.3" y="410" font-size="13" fill="#0a14f0" text-anchor="start" font-weight="normal" textLength="46" lengthAdjust="spacingAndGlyphs">거래대금</text>
<rect x="11.5" y="562" width="4.3" height="5" fill="#b0b0b0" stroke="#808080" stroke-width="0.8"/>
<text x="22.3" y="568.5" font-size="13" fill="#2a9a9a" text-anchor="start" font-weight="normal" textLength="35" lengthAdjust="spacingAndGlyphs">거래량</text>
<text x="66.3" y="568.5" font-size="13" fill="#e020c0" text-anchor="start" font-weight="normal" textLength="34" lengthAdjust="spacingAndGlyphs">단순 5</text>
<text x="108.6" y="568.5" font-size="13" fill="#f0a000" text-anchor="start" font-weight="normal" textLength="12" lengthAdjust="spacingAndGlyphs">20</text>
<text x="128.3" y="568.5" font-size="13" fill="#209030" text-anchor="start" font-weight="normal" textLength="12.5" lengthAdjust="spacingAndGlyphs">60</text>
<text x="149.2" y="568.5" font-size="13" fill="#707070" text-anchor="start" font-weight="normal" textLength="16.5" lengthAdjust="spacingAndGlyphs">120</text>
<text x="12.2" y="582" font-size="13" fill="#303030" text-anchor="start" font-weight="normal" textLength="115.4" lengthAdjust="spacingAndGlyphs">5,486,946주(522.92%)</text>
<rect x="7" y="732.5" width="1234" height="18" fill="#f0f0f0"/>
<rect x="7" y="733" width="16.5" height="16.5" fill="#f4f4f4"/>
<path d="M7.5 749V733.5H23" fill="none" stroke="#ffffff" stroke-width="1"/>
<path d="M23 733.5V749H7.5" fill="none" stroke="#7a7a7a" stroke-width="1"/>
<path d="M18 736.5v9l-5-4.5z" fill="#000"/>
<rect x="23.5" y="733" width="130.5" height="16.5" fill="#f6f6f6"/>
<rect x="154" y="733" width="716" height="16.5" fill="#efefef"/>
<path d="M154.5 749V733.5H869.5" fill="none" stroke="#ffffff" stroke-width="1"/>
<path d="M869.5 733.5V749H154.5" fill="none" stroke="#7a7a7a" stroke-width="1"/>
<rect x="154" y="748.5" width="716" height="1.2" fill="#5a5a5a"/>
<rect x="872" y="733" width="16.5" height="16.5" fill="#ececec"/>
<path d="M872.5 749V733.5H888" fill="none" stroke="#ffffff" stroke-width="1"/>
<path d="M888 733.5V749H872.5" fill="none" stroke="#7a7a7a" stroke-width="1"/>
<rect x="889" y="733" width="16.5" height="16.5" fill="#ececec"/>
<path d="M889.5 749V733.5H905" fill="none" stroke="#ffffff" stroke-width="1"/>
<path d="M905 733.5V749H889.5" fill="none" stroke="#7a7a7a" stroke-width="1"/>
<rect x="906" y="733" width="16.5" height="16.5" fill="#ececec"/>
<path d="M906.5 749V733.5H922" fill="none" stroke="#ffffff" stroke-width="1"/>
<path d="M922 733.5V749H906.5" fill="none" stroke="#7a7a7a" stroke-width="1"/>
<rect x="923" y="733" width="16.5" height="16.5" fill="#ececec"/>
<path d="M923.5 749V733.5H939" fill="none" stroke="#ffffff" stroke-width="1"/>
<path d="M939 733.5V749H923.5" fill="none" stroke="#7a7a7a" stroke-width="1"/>
<path d="M878 737.5l6 4-6 4z" fill="#000"/>
<path d="M896 737.5v8l-4-4zM900.5 737.5v8l-4-4z" fill="#000"/>
<rect x="911" y="737.5" width="6.5" height="7" fill="#000"/>
<path d="M927 737.5v8l4-4zM931.5 737.5v8l4-4z" fill="#000"/>
<path d="M945 737.5h68" stroke="#606060" stroke-width="1.2"/><path d="M945 738.5h68" stroke="#ffffff" stroke-width="0.8"/>
<path d="M1003 735v8l-2 2" stroke="#606060" stroke-width="1.5" fill="none"/>
<rect x="947.5" y="746" width="1" height="2.5" fill="#404040"/>
<rect x="953.6" y="746" width="1" height="2.5" fill="#404040"/>
<rect x="959.7" y="746" width="1" height="2.5" fill="#404040"/>
<rect x="965.8" y="746" width="1" height="2.5" fill="#404040"/>
<rect x="971.9" y="746" width="1" height="2.5" fill="#404040"/>
<rect x="978" y="746" width="1" height="2.5" fill="#404040"/>
<rect x="984.1" y="746" width="1" height="2.5" fill="#404040"/>
<rect x="990.2" y="746" width="1" height="2.5" fill="#404040"/>
<rect x="996.3" y="746" width="1" height="2.5" fill="#404040"/>
<rect x="1002.4" y="746" width="1" height="2.5" fill="#404040"/>
<rect x="1008.5" y="746" width="1" height="2.5" fill="#404040"/>
<g fill="none" stroke="#707070" stroke-width="1">
<rect x="1022.5" y="736.5" width="9" height="9" rx="1"/><rect x="1027.5" y="741.5" width="7" height="7" fill="#f0f0f0"/><path d="M1031 741.5v7M1027.5 745h7"/>
<rect x="1039.5" y="736.5" width="9" height="8"/><rect x="1043.5" y="740.5" width="9" height="8" fill="#f0f0f0"/><path d="M1043.5 743h9"/>
<path d="M1056.5 737.5h14M1056.5 747.5h14M1056.5 737v11M1070.5 737v11" stroke-dasharray="1 1"/><path d="M1058 746l4-4 3 2 4-4"/>
</g>
<rect x="1072" y="733" width="17" height="16.5" fill="#ffffff"/>
<g fill="none" stroke="#505050" stroke-width="1.1">
<path d="M1075.5 748v-12M1075.5 736.5h8M1079 740l7 7M1079 740h4M1079 740v4"/>
<path d="M1090 745l3-6 3 4 3-5 4 3" stroke="#8a8a8a"/><path d="M1090 742h13" stroke="#8a8a8a" stroke-width="0.7"/>
<path d="M1108 748l3-10 2 7 3-5 4 4" stroke="#8a8a8a"/><path d="M1111 735v14" stroke="#8a8a8a"/>
<path d="M1125 748l11-12M1126 746l3-4 3 3 4-4" stroke="#8a8a8a"/>
<path d="M1142 740l4-3h7v7l-4 3h-7z" stroke="#8a8a8a"/><path d="M1150 744v4M1152 743v5M1154 742v6" stroke="#505050"/>
<rect x="1159.5" y="741.5" width="10" height="7" stroke="#707070"/><rect x="1162.5" y="737.5" width="10" height="6" stroke="#8a8a8a"/><path d="M1161 747l3-3 2 2 3-3" stroke="#707070"/>
<circle cx="1181" cy="740.5" r="4" stroke="#404040" stroke-width="1.4"/><path d="M1184 743.5l4 4" stroke="#404040" stroke-width="1.8"/>
<path d="M1194 742h9" stroke="#505050" stroke-width="2"/>
<path d="M1211 742h10M1216 737v10" stroke="#505050" stroke-width="2"/>
</g>
<text x="1233.5" y="748" font-size="13" fill="#505050" text-anchor="middle" font-weight="bold">A</text>
</svg></body></html>
